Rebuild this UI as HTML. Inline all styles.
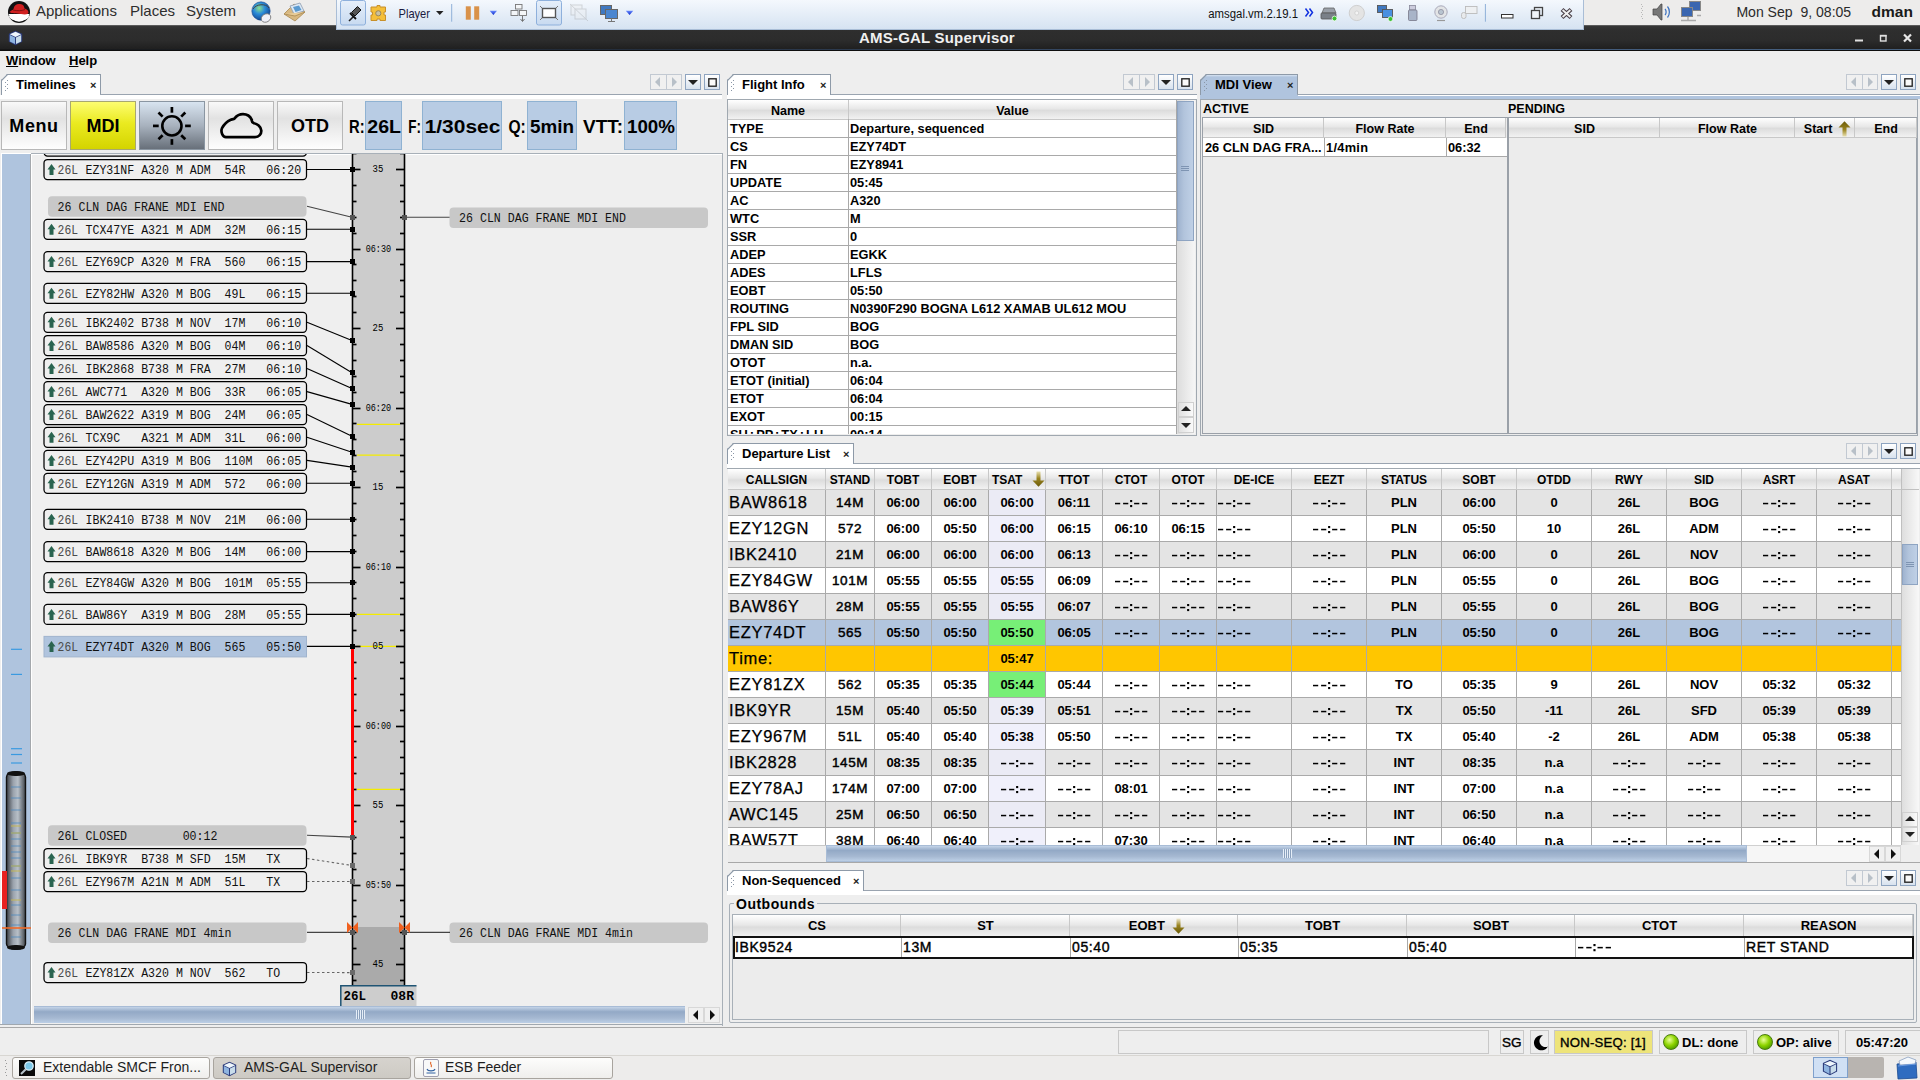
<!DOCTYPE html><html><head><meta charset="utf-8"><title>AMS-GAL Supervisor</title><style>
*{box-sizing:border-box;margin:0;padding:0}
html,body{width:1920px;height:1080px;overflow:hidden;background:#eeeeee;font-family:"Liberation Sans",sans-serif;color:#000}
.a{position:absolute}
.mono{font-family:"Liberation Mono",monospace}
.b{font-weight:bold}
.gnome{left:0;top:0;width:1920px;height:25px;background:#edeceb;}
.vmw{left:336px;top:0;width:1248px;height:30px;background:linear-gradient(#f4f8fd,#d6e3f2);border:1px solid #a9bdd6;border-top:none}
.title{left:0;top:25px;width:1920px;height:26px;background:linear-gradient(#363636,#2e2e2e 20%,#2c2c2c 60%,#1e1e1e);border-top:1px solid #5b5b5b;border-bottom:1px solid #0e0e0e}
.tab{border:1px solid #9aa4b0;border-bottom:none;background:#fff;border-radius:0;}
.tabt{font-weight:bold;font-size:13px}
.navb{width:16px;height:16px;border:1px solid #b8c4d2;background:linear-gradient(#fdfdfe,#dde3ea)}
.tbl td{overflow:hidden;white-space:nowrap}
.hdr{background:linear-gradient(#ffffff,#e8e8e8 45%,#dcdcdc 55%,#f2f2f2);}
</style></head><body>
<div class="a gnome"></div>
<svg class="a" style="left:0;top:0" width="320" height="25" viewBox="0 0 320 25"><defs><radialGradient id="glb" cx="0.4" cy="0.35" r="0.7"><stop offset="0" stop-color="#8fe08a"/><stop offset="0.45" stop-color="#2a8ad8"/><stop offset="1" stop-color="#0f3f8a"/></radialGradient></defs><circle cx="19" cy="12" r="11" fill="#111"/><path d="M8.5 14 A11 11 0 0 0 29.5 14 Z" fill="#fff"/><path d="M9 16 C9 22 29 22 29 16 L27 14 Z" fill="#fff"/><path d="M9.5 12 C11 10 13 10.5 13.5 9 C14 5 17 3.5 20 4 C23.5 4.5 24 6 24.5 8.5 C26.5 9 28.5 10.5 28.5 12.5 C28.5 14.5 25 14.8 21 14 C16 13 11.5 13.8 9.5 12 Z" fill="#d02020"/><path d="M13 10 C17 11 22 11 25 9.5" stroke="#7a1010" stroke-width="0.9" fill="none"/><circle cx="261" cy="11" r="9.2" fill="url(#glb)" stroke="#1a4a90" stroke-width="0.6"/><path d="M253 9 C256 4 266 3 269 8" stroke="#444" stroke-width="1" fill="none"/><ellipse cx="266" cy="18" rx="5" ry="4" fill="#f0f0f8" stroke="#777" stroke-width="0.8" transform="rotate(-30 266 18)"/><path d="M284 14 L294 4 L305 12 L295 21 Z" fill="#d8b880" stroke="#a88850" stroke-width="0.8"/><path d="M290 6 L300 3 L304 11 L294 14 Z" fill="#dde8f4" stroke="#8a9ab0" stroke-width="0.8"/><path d="M293 7 L299 5.5 L301.5 10 L295.5 12 Z" fill="#5a9ad0"/><path d="M284 14 L295 16 L305 12" stroke="#a88850" stroke-width="0.8" fill="#e8cc98"/></svg>
<div class="a" style="left:36px;top:2px;font-size:15px;color:#2e2e2e">Applications</div>
<div class="a" style="left:130px;top:2px;font-size:15px;color:#2e2e2e">Places</div>
<div class="a" style="left:186px;top:2px;font-size:15px;color:#2e2e2e">System</div>
<svg class="a" style="left:1620px;top:0" width="300" height="25" viewBox="1620 0 300 25"><g fill="#b8b8b8"><rect x="1641" y="4" width="1" height="1"/><rect x="1642" y="6" width="1" height="1"/><rect x="1641" y="8" width="1" height="1"/><rect x="1642" y="10" width="1" height="1"/><rect x="1641" y="12" width="1" height="1"/><rect x="1642" y="14" width="1" height="1"/><rect x="1641" y="16" width="1" height="1"/><rect x="1642" y="18" width="1" height="1"/></g><path d="M1653 9 L1657 9 L1661 4 L1662 4 L1662 20 L1661 20 L1657 15 L1653 15 Z" fill="#777" stroke="#444" stroke-width="0.7"/><path d="M1665 9 C1666.5 10.5 1666.5 13.5 1665 15" stroke="#3a70c0" stroke-width="1.2" fill="none"/><path d="M1667.5 6.5 C1670 9.5 1670 14.5 1667.5 17.5" stroke="#3a70c0" stroke-width="1.2" fill="none"/><rect x="1689.5" y="1.5" width="11" height="9" fill="#3a66b0" stroke="#888" stroke-width="1"/><rect x="1681.5" y="7.5" width="11" height="9" fill="#3a66b0" stroke="#888" stroke-width="1"/><path d="M1681 20.5 L1696 20.5 M1688 17 L1688 20" stroke="#aaa" stroke-width="1.5"/><path d="M1697 15.5 L1701 15.5" stroke="#aaa" stroke-width="1.5"/><text x="1736.4" y="17" font-family="Liberation Sans" font-size="15" fill="#2a2a2a" textLength="114.8" lengthAdjust="spacingAndGlyphs" xml:space="preserve">Mon Sep  9, 08:05</text><text x="1871.6" y="17" font-family="Liberation Sans" font-size="15" font-weight="bold" fill="#1a1a1a" textLength="41.4" lengthAdjust="spacingAndGlyphs">dman</text></svg>
<div class="a title"></div>
<div class="a" style="left:0;top:49px;width:1920px;height:1px;background:linear-gradient(90deg,#161616,#253040 35%,#40587a 70%,#46607e)"></div>
<svg class="a" style="left:8px;top:30px" width="15" height="16" viewBox="0 0 15 16"><path d="M7.5 0.8 L14.2 3.8 L14.2 11.8 L7.5 15.2 L0.8 11.8 L0.8 3.8 Z" fill="#2a3a7a"/><path d="M7.5 1.8 L13.2 4.3 L7.5 6.9 L1.8 4.3 Z" fill="#eef6fc"/><path d="M1.8 5 L7 7.5 L7 14 L1.8 11.4 Z" fill="#8eb4e0"/><path d="M8 7.5 L13.2 5 L13.2 11.4 L8 14 Z" fill="#c8dcea"/></svg>
<div class="a b" style="left:0;width:1874px;top:29px;text-align:center;font-size:15px;color:#f0f0f0;letter-spacing:0.2px">AMS-GAL Supervisor</div>
<svg class="a" style="left:1840px;top:25px" width="80" height="25" viewBox="1840 25 80 25"><rect x="1855" y="39.5" width="8" height="2" fill="#e0e0e0"/><rect x="1880.5" y="35.5" width="5.5" height="5.5" fill="none" stroke="#e0e0e0" stroke-width="1.4"/><rect x="1880" y="35" width="6.5" height="1.6" fill="#e0e0e0"/><path d="M1904 34.5 L1911 41.5 M1911 34.5 L1904 41.5" stroke="#e8e8e8" stroke-width="2.2"/></svg>
<div class="a vmw"></div>
<svg class="a" style="left:0;top:0" width="1600" height="30" viewBox="0 0 1600 30"><defs><linearGradient id="bluearr" x1="0" x2="0" y1="0" y2="1"><stop offset="0" stop-color="#6a8cff"/><stop offset="1" stop-color="#0a28c8"/></linearGradient><linearGradient id="btnsel" x1="0" x2="0" y1="0" y2="1"><stop offset="0" stop-color="#e6effa"/><stop offset="1" stop-color="#c8daf0"/></linearGradient></defs><rect x="340.5" y="0.5" width="25" height="24.5" rx="2" fill="url(#btnsel)" stroke="#8eb0dc"/><path d="M349 21 L353.5 16.5" stroke="#222" stroke-width="1.6"/><path d="M351.5 12.5 L357.5 6.5 L361 10 L355 16 Z" fill="#555" stroke="#111" stroke-width="1"/><path d="M350 13 L356 19" stroke="#111" stroke-width="1.8"/><path d="M371 7 L377 7 L377 5.5 L380 5.5 L380 7 L385.5 7 L385.5 12 L384 12 L384 15 L385.5 15 L385.5 20.5 L380 20.5 L380 19 L377 19 L377 20.5 L371 20.5 L371 15 L372.5 15 L372.5 12 L371 12 Z" fill="#f4bf3a" stroke="#c8902a" stroke-width="1"/><circle cx="378.3" cy="13.3" r="2.6" fill="#c9c0a0" stroke="#8a7a50" stroke-width="0.8"/><text x="398.5" y="18" font-family="Liberation Sans" font-size="12.6" fill="#1a1a40" textLength="31.5" lengthAdjust="spacingAndGlyphs">Player</text><path d="M436 11 L443.5 11 L439.75 15 Z" fill="#222"/><line x1="451.7" y1="4" x2="451.7" y2="21.7" stroke="#8fb0d8" stroke-width="1"/><rect x="465.8" y="6.3" width="5" height="13.4" fill="#d9924a"/><rect x="474.2" y="6.3" width="5" height="13.4" fill="#d9924a"/><path d="M489.7 10.8 L497 10.8 L493.35 15 Z" fill="url(#bluearr)"/><rect x="515.5" y="4.5" width="6.5" height="4.5" fill="#f4f6f8" stroke="#777" stroke-width="0.9"/><rect x="511" y="10.5" width="7" height="5" fill="#f4f6f8" stroke="#777" stroke-width="0.9"/><rect x="519.5" y="10.5" width="7" height="5" fill="#f4f6f8" stroke="#777" stroke-width="0.9"/><path d="M522.5 16 L522.5 21 M520.5 19 L522.5 21.5 L524.5 19" stroke="#666" stroke-width="0.9" fill="none"/><rect x="536.5" y="0.5" width="25" height="24.5" rx="2" fill="url(#btnsel)" stroke="#8eb0dc"/><rect x="542.5" y="8.5" width="13" height="9" fill="#fff" stroke="#555" stroke-width="1.4"/><path d="M540 6 L542 8 M558 6 L556 8 M540 20 L542 18 M558 20 L556 18" stroke="#777" stroke-width="1"/><g opacity="0.35"><rect x="571" y="5" width="11" height="10" fill="#eee" stroke="#999"/><rect x="575" y="9" width="11" height="10" fill="#eee" stroke="#999"/><path d="M570 4 L588 21" stroke="#999"/></g><rect x="600.5" y="5.5" width="11" height="9" fill="#3f78c0" stroke="#666" stroke-width="1"/><rect x="605.5" y="9.5" width="12" height="9" fill="#4a86d0" stroke="#666" stroke-width="1"/><path d="M611.5 18.5 L611.5 21 M608 21.5 L615 21.5" stroke="#777" stroke-width="1"/><path d="M625.8 10.8 L633.3 10.8 L629.55 15 Z" fill="url(#bluearr)"/><text x="1208.3" y="17.5" font-family="Liberation Sans" font-size="12" fill="#111" textLength="89.7" lengthAdjust="spacingAndGlyphs">amsgal.vm.2.19.1</text><path d="M1305.5 8.5 L1308.5 12.5 L1305.5 16.5 M1309.5 8.5 L1312.5 12.5 L1309.5 16.5" stroke="#1030e0" stroke-width="1.5" fill="none"/><path d="M1322 13 L1324 8 L1334 8 L1336 13 Z" fill="#9aa0a8" stroke="#666" stroke-width="0.8"/><rect x="1321" y="13" width="15" height="6" rx="1" fill="#7a8088" stroke="#555" stroke-width="0.8"/><circle cx="1334.5" cy="18.5" r="2.4" fill="#3ac030" stroke="#fff" stroke-width="0.7"/><circle cx="1356.8" cy="13" r="7.6" fill="#e4e4e4" stroke="#cfcfcf"/><circle cx="1356.8" cy="13" r="2" fill="#f4f4f4" stroke="#ccc" stroke-width="0.7"/><rect x="1377.5" y="5.5" width="9" height="7" fill="#3f78c0" stroke="#555" stroke-width="0.9"/><rect x="1382.5" y="9.5" width="10" height="8" fill="#4a90e0" stroke="#555" stroke-width="0.9"/><circle cx="1390.5" cy="19" r="2.4" fill="#3ac030" stroke="#fff" stroke-width="0.7"/><rect x="1409.5" y="5.5" width="6" height="4.5" fill="#ccd" stroke="#889" stroke-width="0.8"/><rect x="1408.5" y="10" width="8.5" height="10.5" rx="1" fill="#a8b4c8" stroke="#778" stroke-width="0.8"/><circle cx="1441" cy="12" r="6.2" fill="#e2e4e6" stroke="#aab" stroke-width="1"/><circle cx="1441" cy="12" r="2.6" fill="#b8c4d0" stroke="#889" stroke-width="0.7"/><path d="M1437 20.5 L1445 20.5" stroke="#999" stroke-width="1.2"/><rect x="1465.5" y="6.5" width="11.5" height="7" fill="#eef0f2" stroke="#bbb" stroke-width="0.9"/><rect x="1461.5" y="12.5" width="4.5" height="6" rx="2" fill="#e8eaec" stroke="#bbb" stroke-width="0.9"/><line x1="1485.4" y1="4" x2="1485.4" y2="21.7" stroke="#8fb0d8" stroke-width="1"/><rect x="1501.5" y="14.5" width="11.5" height="3.5" fill="#fff" stroke="#333" stroke-width="1"/><rect x="1534.5" y="7.5" width="8" height="8" fill="none" stroke="#444" stroke-width="1.3"/><rect x="1531.5" y="10.5" width="8" height="8" fill="#f0f4f8" stroke="#444" stroke-width="1.3"/><path d="M1562 9.5 L1571 17.5 M1571 9.5 L1562 17.5" stroke="#4a4048" stroke-width="4.2" stroke-linecap="butt"/><path d="M1562.6 10 L1570.4 17 M1570.4 10 L1562.6 17" stroke="#f0f0f0" stroke-width="1.8" stroke-linecap="butt"/></svg>
<div class="a" style="left:0;top:51px;width:1920px;height:22px;background:#eeeeee"></div>
<div class="a b" style="left:6px;top:53px;font-size:13px"><u>W</u>indow</div>
<div class="a b" style="left:69px;top:53px;font-size:13px"><u>H</u>elp</div>
<div class="a" style="left:1px;top:74px;width:100px;height:21px;background:#ffffff;border:1px solid #8e9aa8;border-bottom:none;clip-path:polygon(6px 0,100% 0,100% 100%,0 100%,0 6px)"></div><svg class="a" style="left:1px;top:74px" width="8" height="8" viewBox="0 0 8 8"><line x1="0.5" y1="6.5" x2="6.5" y2="0.5" stroke="#8e9aa8" stroke-width="1.1"/></svg><div class="a" style="left:7px;top:80px;width:1px;height:1px;background:#8a96a6"></div><div class="a" style="left:5px;top:82px;width:1px;height:1px;background:#8a96a6"></div><div class="a" style="left:7px;top:84px;width:1px;height:1px;background:#8a96a6"></div><div class="a" style="left:5px;top:86px;width:1px;height:1px;background:#8a96a6"></div><div class="a" style="left:7px;top:88px;width:1px;height:1px;background:#8a96a6"></div><div class="a" style="left:5px;top:90px;width:1px;height:1px;background:#8a96a6"></div><div class="a tabt" style="left:16px;top:77px">Timelines</div><div class="a" style="left:90px;top:79px;font-size:11px;font-weight:bold;color:#222">&#215;</div>
<div class="a" style="left:100px;top:94px;width:622px;height:1px;background:#9aa4b0"></div>
<div class="a" style="left:0;top:95px;width:722px;height:4px;background:#ffffff"></div>
<div class="a" style="left:650px;top:74px;width:32px;height:16px;border:1px solid #c2c9d2;background:#f0f0f0"></div><div class="a" style="left:666px;top:75px;width:1px;height:14px;background:#c2c9d2"></div><div class="a" style="left:655px;top:77px;width:0;height:0;border-top:5px solid transparent;border-bottom:5px solid transparent;border-right:5px solid #b8c0c8"></div><div class="a" style="left:672px;top:77px;width:0;height:0;border-top:5px solid transparent;border-bottom:5px solid transparent;border-left:5px solid #b8c0c8"></div><div class="a" style="left:685px;top:74px;width:16px;height:16px;border:1px solid #8ea4c0;background:linear-gradient(#ffffff,#d8e2ee)"></div><div class="a" style="left:688px;top:80px;width:0;height:0;border-left:5px solid transparent;border-right:5px solid transparent;border-top:5px solid #222"></div><div class="a" style="left:704px;top:74px;width:16px;height:16px;border:1px solid #8ea4c0;background:linear-gradient(#ffffff,#d8e2ee)"></div><svg class="a" style="left:707px;top:77px" width="11" height="11" viewBox="0 0 11 11"><rect x="1.8" y="1.8" width="7.4" height="7.4" fill="#fafafa" stroke="#222" stroke-width="1.35"/></svg>
<div class="a" style="left:1px;top:101px;width:66px;height:49px;background:linear-gradient(#f9f9f9,#e2e2e2 35%,#fefefe);border:1px solid #b8b8b8"><div class="a b" style="left:0;width:64px;top:14px;text-align:center;font-size:18px;letter-spacing:0.6px">Menu</div></div>
<div class="a" style="left:70px;top:101px;width:66px;height:49px;background:linear-gradient(#fdfd70,#eaea20 45%,#d4d400);border:1px solid #a8a870"><div class="a b" style="left:0;width:64px;top:14px;text-align:center;font-size:18px">MDI</div></div>
<div class="a" style="left:139px;top:101px;width:66px;height:49px;background:linear-gradient(#d8e4f0,#a8b2be 50%,#68707a);border:1px solid #8a96a2"><svg class="a" style="left:-1px;top:-1px" width="66" height="49" viewBox="0 0 66 49"><circle cx="32.9" cy="24.9" r="9.6" fill="none" stroke="#000" stroke-width="2.6"/><line x1="46.1" y1="24.9" x2="51.8" y2="24.9" stroke="#000" stroke-width="2.7"/><line x1="42.2" y1="34.2" x2="46.3" y2="38.3" stroke="#000" stroke-width="2.7"/><line x1="32.9" y1="38.1" x2="32.9" y2="43.8" stroke="#000" stroke-width="2.7"/><line x1="23.6" y1="34.2" x2="19.5" y2="38.3" stroke="#000" stroke-width="2.7"/><line x1="19.7" y1="24.9" x2="14.0" y2="24.9" stroke="#000" stroke-width="2.7"/><line x1="23.6" y1="15.6" x2="19.5" y2="11.5" stroke="#000" stroke-width="2.7"/><line x1="32.9" y1="11.7" x2="32.9" y2="6.0" stroke="#000" stroke-width="2.7"/><line x1="42.2" y1="15.6" x2="46.3" y2="11.5" stroke="#000" stroke-width="2.7"/></svg></div>
<div class="a" style="left:208px;top:101px;width:66px;height:49px;background:linear-gradient(#f9f9f9,#e2e2e2 35%,#fefefe);border:1px solid #b8b8b8"><svg class="a" style="left:-1px;top:-1px" width="66" height="49" viewBox="0 0 66 49"><path d="M18 36.2 L47 36.2 C51 36.2 53.5 33 53.3 29.6 C53 25.5 49 22.8 46 22.2 C44.2 21.4 43.5 20 43.8 18.8 C42 15 39 13.2 35 13.2 C31 13.2 28.5 15 26.8 17.2 C25.6 18.4 24 18.3 22.8 18.8 C19 20.5 15.5 24.5 14 27.2 C12.5 30.5 14.5 36.2 18 36.2 Z" fill="none" stroke="#000" stroke-width="2.7" stroke-linejoin="round"/></svg></div>
<div class="a" style="left:277px;top:101px;width:66px;height:49px;background:linear-gradient(#f9f9f9,#e2e2e2 35%,#fefefe);border:1px solid #b8b8b8"><div class="a b" style="left:0;width:64px;top:14px;text-align:center;font-size:18px">OTD</div></div>
<div class="a" style="left:365px;top:101px;width:37px;height:49px;background:#b8cce4;border:1px solid #8fb2d2"></div>
<div class="a" style="left:422px;top:101px;width:80px;height:49px;background:#b8cce4;border:1px solid #8fb2d2"></div>
<div class="a" style="left:527px;top:101px;width:50px;height:49px;background:#b8cce4;border:1px solid #8fb2d2"></div>
<div class="a" style="left:624px;top:101px;width:53px;height:49px;background:#b8cce4;border:1px solid #8fb2d2"></div>
<svg class="a" style="left:340px;top:100px" width="345" height="52" viewBox="340 100 345 52"><text x="349" y="132.6" font-family="Liberation Sans" font-weight="bold" font-size="17.6" textLength="15.6" lengthAdjust="spacingAndGlyphs">R:</text><text x="367.3" y="132.6" font-family="Liberation Sans" font-weight="bold" font-size="17.6" textLength="33.7" lengthAdjust="spacingAndGlyphs">26L</text><text x="408.3" y="132.6" font-family="Liberation Sans" font-weight="bold" font-size="17.6" textLength="12.7" lengthAdjust="spacingAndGlyphs">F:</text><text x="424.7" y="132.6" font-family="Liberation Sans" font-weight="bold" font-size="17.6" textLength="75.6" lengthAdjust="spacingAndGlyphs">1/30sec</text><text x="508.5" y="132.6" font-family="Liberation Sans" font-weight="bold" font-size="17.6" textLength="17.3" lengthAdjust="spacingAndGlyphs">Q:</text><text x="530" y="132.6" font-family="Liberation Sans" font-weight="bold" font-size="17.6" textLength="44" lengthAdjust="spacingAndGlyphs">5min</text><text x="583" y="132.6" font-family="Liberation Sans" font-weight="bold" font-size="17.6" textLength="40" lengthAdjust="spacingAndGlyphs">VTT:</text><text x="627" y="132.6" font-family="Liberation Sans" font-weight="bold" font-size="17.6" textLength="48" lengthAdjust="spacingAndGlyphs">100%</text></svg>
<div class="a" style="left:0;top:153px;width:723px;height:873px;background:#efefef;border-right:1px solid #a8b0b8"></div>
<div class="a" style="left:30px;top:153px;width:693px;height:1px;background:#a8b0b8"></div>
<div class="a" style="left:1px;top:153px;width:30px;height:1px;background:#ffffff"></div>
<div class="a" style="left:1px;top:153px;width:1px;height:872px;background:#ffffff"></div>
<div class="a" style="left:2px;top:154px;width:29px;height:871px;background:#afc4de;border-right:1px solid #a4a8ac"></div>
<div class="a" style="left:31px;top:154px;width:1px;height:871px;background:#ffffff"></div>
<div class="a" style="left:32px;top:154px;width:690px;height:1px;background:#ffffff"></div>
<svg class="a" style="left:0;top:0" width="723" height="1026" viewBox="0 0 723 1026">
<defs><clipPath id="tlc"><rect x="31" y="154" width="691" height="852"/></clipPath></defs>
<g clip-path="url(#tlc)">
<rect x="352" y="150" width="53" height="835" fill="#cccccc"/>
<rect x="352" y="927" width="53" height="58" fill="#aaaaaa"/>
<line x1="357" y1="424.4" x2="400" y2="424.4" stroke="#f4ec00" stroke-width="1.2"/>
<line x1="357" y1="455.1" x2="400" y2="455.1" stroke="#f4ec00" stroke-width="1.2"/>
<line x1="357" y1="614.4" x2="400" y2="614.4" stroke="#f4ec00" stroke-width="1.2"/>
<line x1="357" y1="646.4" x2="400" y2="646.4" stroke="#f4ec00" stroke-width="1.2"/>
<line x1="357" y1="789.4" x2="400" y2="789.4" stroke="#f4ec00" stroke-width="1.2"/>
<line x1="352" y1="980.5" x2="356.5" y2="980.5" stroke="#000" stroke-width="1.7"/>
<line x1="400.0" y1="980.5" x2="404.5" y2="980.5" stroke="#000" stroke-width="1.7"/>
<line x1="352" y1="964.5" x2="360.5" y2="964.5" stroke="#000" stroke-width="1.7"/>
<line x1="396.0" y1="964.5" x2="404.5" y2="964.5" stroke="#000" stroke-width="1.7"/>
<text x="372.6" y="966.9" font-family="Liberation Mono" font-size="11.6" textLength="10.8" lengthAdjust="spacingAndGlyphs" fill="#000">45</text>
<line x1="352" y1="948.5" x2="356.5" y2="948.5" stroke="#000" stroke-width="1.7"/>
<line x1="400.0" y1="948.5" x2="404.5" y2="948.5" stroke="#000" stroke-width="1.7"/>
<line x1="352" y1="932.5" x2="356.5" y2="932.5" stroke="#000" stroke-width="1.7"/>
<line x1="400.0" y1="932.5" x2="404.5" y2="932.5" stroke="#000" stroke-width="1.7"/>
<line x1="352" y1="916.5" x2="356.5" y2="916.5" stroke="#000" stroke-width="1.7"/>
<line x1="400.0" y1="916.5" x2="404.5" y2="916.5" stroke="#000" stroke-width="1.7"/>
<line x1="352" y1="900.5" x2="356.5" y2="900.5" stroke="#000" stroke-width="1.7"/>
<line x1="400.0" y1="900.5" x2="404.5" y2="900.5" stroke="#000" stroke-width="1.7"/>
<line x1="352" y1="885.5" x2="360.5" y2="885.5" stroke="#000" stroke-width="1.7"/>
<line x1="396.0" y1="885.5" x2="404.5" y2="885.5" stroke="#000" stroke-width="1.7"/>
<text x="365.7" y="887.9" font-family="Liberation Mono" font-size="11.6" textLength="25.4" lengthAdjust="spacingAndGlyphs" fill="#000">05:50</text>
<line x1="352" y1="869.5" x2="356.5" y2="869.5" stroke="#000" stroke-width="1.7"/>
<line x1="400.0" y1="869.5" x2="404.5" y2="869.5" stroke="#000" stroke-width="1.7"/>
<line x1="352" y1="853.5" x2="356.5" y2="853.5" stroke="#000" stroke-width="1.7"/>
<line x1="400.0" y1="853.5" x2="404.5" y2="853.5" stroke="#000" stroke-width="1.7"/>
<line x1="352" y1="837.5" x2="356.5" y2="837.5" stroke="#000" stroke-width="1.7"/>
<line x1="400.0" y1="837.5" x2="404.5" y2="837.5" stroke="#000" stroke-width="1.7"/>
<line x1="352" y1="821.5" x2="356.5" y2="821.5" stroke="#000" stroke-width="1.7"/>
<line x1="400.0" y1="821.5" x2="404.5" y2="821.5" stroke="#000" stroke-width="1.7"/>
<line x1="352" y1="805.5" x2="360.5" y2="805.5" stroke="#000" stroke-width="1.7"/>
<line x1="396.0" y1="805.5" x2="404.5" y2="805.5" stroke="#000" stroke-width="1.7"/>
<text x="372.6" y="807.9" font-family="Liberation Mono" font-size="11.6" textLength="10.8" lengthAdjust="spacingAndGlyphs" fill="#000">55</text>
<line x1="352" y1="789.5" x2="356.5" y2="789.5" stroke="#000" stroke-width="1.7"/>
<line x1="400.0" y1="789.5" x2="404.5" y2="789.5" stroke="#000" stroke-width="1.7"/>
<line x1="352" y1="773.5" x2="356.5" y2="773.5" stroke="#000" stroke-width="1.7"/>
<line x1="400.0" y1="773.5" x2="404.5" y2="773.5" stroke="#000" stroke-width="1.7"/>
<line x1="352" y1="757.5" x2="356.5" y2="757.5" stroke="#000" stroke-width="1.7"/>
<line x1="400.0" y1="757.5" x2="404.5" y2="757.5" stroke="#000" stroke-width="1.7"/>
<line x1="352" y1="741.5" x2="356.5" y2="741.5" stroke="#000" stroke-width="1.7"/>
<line x1="400.0" y1="741.5" x2="404.5" y2="741.5" stroke="#000" stroke-width="1.7"/>
<line x1="352" y1="726.5" x2="360.5" y2="726.5" stroke="#000" stroke-width="1.7"/>
<line x1="396.0" y1="726.5" x2="404.5" y2="726.5" stroke="#000" stroke-width="1.7"/>
<text x="365.7" y="728.9" font-family="Liberation Mono" font-size="11.6" textLength="25.4" lengthAdjust="spacingAndGlyphs" fill="#000">06:00</text>
<line x1="352" y1="710.5" x2="356.5" y2="710.5" stroke="#000" stroke-width="1.7"/>
<line x1="400.0" y1="710.5" x2="404.5" y2="710.5" stroke="#000" stroke-width="1.7"/>
<line x1="352" y1="694.5" x2="356.5" y2="694.5" stroke="#000" stroke-width="1.7"/>
<line x1="400.0" y1="694.5" x2="404.5" y2="694.5" stroke="#000" stroke-width="1.7"/>
<line x1="352" y1="678.5" x2="356.5" y2="678.5" stroke="#000" stroke-width="1.7"/>
<line x1="400.0" y1="678.5" x2="404.5" y2="678.5" stroke="#000" stroke-width="1.7"/>
<line x1="352" y1="662.5" x2="356.5" y2="662.5" stroke="#000" stroke-width="1.7"/>
<line x1="400.0" y1="662.5" x2="404.5" y2="662.5" stroke="#000" stroke-width="1.7"/>
<line x1="352" y1="646.5" x2="360.5" y2="646.5" stroke="#000" stroke-width="1.7"/>
<line x1="396.0" y1="646.5" x2="404.5" y2="646.5" stroke="#000" stroke-width="1.7"/>
<text x="372.6" y="648.9" font-family="Liberation Mono" font-size="11.6" textLength="10.8" lengthAdjust="spacingAndGlyphs" fill="#000">05</text>
<line x1="352" y1="630.5" x2="356.5" y2="630.5" stroke="#000" stroke-width="1.7"/>
<line x1="400.0" y1="630.5" x2="404.5" y2="630.5" stroke="#000" stroke-width="1.7"/>
<line x1="352" y1="614.5" x2="356.5" y2="614.5" stroke="#000" stroke-width="1.7"/>
<line x1="400.0" y1="614.5" x2="404.5" y2="614.5" stroke="#000" stroke-width="1.7"/>
<line x1="352" y1="598.5" x2="356.5" y2="598.5" stroke="#000" stroke-width="1.7"/>
<line x1="400.0" y1="598.5" x2="404.5" y2="598.5" stroke="#000" stroke-width="1.7"/>
<line x1="352" y1="582.5" x2="356.5" y2="582.5" stroke="#000" stroke-width="1.7"/>
<line x1="400.0" y1="582.5" x2="404.5" y2="582.5" stroke="#000" stroke-width="1.7"/>
<line x1="352" y1="567.5" x2="360.5" y2="567.5" stroke="#000" stroke-width="1.7"/>
<line x1="396.0" y1="567.5" x2="404.5" y2="567.5" stroke="#000" stroke-width="1.7"/>
<text x="365.7" y="569.9" font-family="Liberation Mono" font-size="11.6" textLength="25.4" lengthAdjust="spacingAndGlyphs" fill="#000">06:10</text>
<line x1="352" y1="551.5" x2="356.5" y2="551.5" stroke="#000" stroke-width="1.7"/>
<line x1="400.0" y1="551.5" x2="404.5" y2="551.5" stroke="#000" stroke-width="1.7"/>
<line x1="352" y1="535.5" x2="356.5" y2="535.5" stroke="#000" stroke-width="1.7"/>
<line x1="400.0" y1="535.5" x2="404.5" y2="535.5" stroke="#000" stroke-width="1.7"/>
<line x1="352" y1="519.5" x2="356.5" y2="519.5" stroke="#000" stroke-width="1.7"/>
<line x1="400.0" y1="519.5" x2="404.5" y2="519.5" stroke="#000" stroke-width="1.7"/>
<line x1="352" y1="503.5" x2="356.5" y2="503.5" stroke="#000" stroke-width="1.7"/>
<line x1="400.0" y1="503.5" x2="404.5" y2="503.5" stroke="#000" stroke-width="1.7"/>
<line x1="352" y1="487.5" x2="360.5" y2="487.5" stroke="#000" stroke-width="1.7"/>
<line x1="396.0" y1="487.5" x2="404.5" y2="487.5" stroke="#000" stroke-width="1.7"/>
<text x="372.6" y="489.9" font-family="Liberation Mono" font-size="11.6" textLength="10.8" lengthAdjust="spacingAndGlyphs" fill="#000">15</text>
<line x1="352" y1="471.5" x2="356.5" y2="471.5" stroke="#000" stroke-width="1.7"/>
<line x1="400.0" y1="471.5" x2="404.5" y2="471.5" stroke="#000" stroke-width="1.7"/>
<line x1="352" y1="455.5" x2="356.5" y2="455.5" stroke="#000" stroke-width="1.7"/>
<line x1="400.0" y1="455.5" x2="404.5" y2="455.5" stroke="#000" stroke-width="1.7"/>
<line x1="352" y1="439.5" x2="356.5" y2="439.5" stroke="#000" stroke-width="1.7"/>
<line x1="400.0" y1="439.5" x2="404.5" y2="439.5" stroke="#000" stroke-width="1.7"/>
<line x1="352" y1="423.5" x2="356.5" y2="423.5" stroke="#000" stroke-width="1.7"/>
<line x1="400.0" y1="423.5" x2="404.5" y2="423.5" stroke="#000" stroke-width="1.7"/>
<line x1="352" y1="408.5" x2="360.5" y2="408.5" stroke="#000" stroke-width="1.7"/>
<line x1="396.0" y1="408.5" x2="404.5" y2="408.5" stroke="#000" stroke-width="1.7"/>
<text x="365.7" y="410.9" font-family="Liberation Mono" font-size="11.6" textLength="25.4" lengthAdjust="spacingAndGlyphs" fill="#000">06:20</text>
<line x1="352" y1="392.5" x2="356.5" y2="392.5" stroke="#000" stroke-width="1.7"/>
<line x1="400.0" y1="392.5" x2="404.5" y2="392.5" stroke="#000" stroke-width="1.7"/>
<line x1="352" y1="376.5" x2="356.5" y2="376.5" stroke="#000" stroke-width="1.7"/>
<line x1="400.0" y1="376.5" x2="404.5" y2="376.5" stroke="#000" stroke-width="1.7"/>
<line x1="352" y1="360.5" x2="356.5" y2="360.5" stroke="#000" stroke-width="1.7"/>
<line x1="400.0" y1="360.5" x2="404.5" y2="360.5" stroke="#000" stroke-width="1.7"/>
<line x1="352" y1="344.5" x2="356.5" y2="344.5" stroke="#000" stroke-width="1.7"/>
<line x1="400.0" y1="344.5" x2="404.5" y2="344.5" stroke="#000" stroke-width="1.7"/>
<line x1="352" y1="328.5" x2="360.5" y2="328.5" stroke="#000" stroke-width="1.7"/>
<line x1="396.0" y1="328.5" x2="404.5" y2="328.5" stroke="#000" stroke-width="1.7"/>
<text x="372.6" y="330.9" font-family="Liberation Mono" font-size="11.6" textLength="10.8" lengthAdjust="spacingAndGlyphs" fill="#000">25</text>
<line x1="352" y1="312.5" x2="356.5" y2="312.5" stroke="#000" stroke-width="1.7"/>
<line x1="400.0" y1="312.5" x2="404.5" y2="312.5" stroke="#000" stroke-width="1.7"/>
<line x1="352" y1="296.5" x2="356.5" y2="296.5" stroke="#000" stroke-width="1.7"/>
<line x1="400.0" y1="296.5" x2="404.5" y2="296.5" stroke="#000" stroke-width="1.7"/>
<line x1="352" y1="280.5" x2="356.5" y2="280.5" stroke="#000" stroke-width="1.7"/>
<line x1="400.0" y1="280.5" x2="404.5" y2="280.5" stroke="#000" stroke-width="1.7"/>
<line x1="352" y1="264.5" x2="356.5" y2="264.5" stroke="#000" stroke-width="1.7"/>
<line x1="400.0" y1="264.5" x2="404.5" y2="264.5" stroke="#000" stroke-width="1.7"/>
<line x1="352" y1="249.5" x2="360.5" y2="249.5" stroke="#000" stroke-width="1.7"/>
<line x1="396.0" y1="249.5" x2="404.5" y2="249.5" stroke="#000" stroke-width="1.7"/>
<text x="365.7" y="251.9" font-family="Liberation Mono" font-size="11.6" textLength="25.4" lengthAdjust="spacingAndGlyphs" fill="#000">06:30</text>
<line x1="352" y1="233.5" x2="356.5" y2="233.5" stroke="#000" stroke-width="1.7"/>
<line x1="400.0" y1="233.5" x2="404.5" y2="233.5" stroke="#000" stroke-width="1.7"/>
<line x1="352" y1="217.5" x2="356.5" y2="217.5" stroke="#000" stroke-width="1.7"/>
<line x1="400.0" y1="217.5" x2="404.5" y2="217.5" stroke="#000" stroke-width="1.7"/>
<line x1="352" y1="201.5" x2="356.5" y2="201.5" stroke="#000" stroke-width="1.7"/>
<line x1="400.0" y1="201.5" x2="404.5" y2="201.5" stroke="#000" stroke-width="1.7"/>
<line x1="352" y1="185.5" x2="356.5" y2="185.5" stroke="#000" stroke-width="1.7"/>
<line x1="400.0" y1="185.5" x2="404.5" y2="185.5" stroke="#000" stroke-width="1.7"/>
<line x1="352" y1="169.5" x2="360.5" y2="169.5" stroke="#000" stroke-width="1.7"/>
<line x1="396.0" y1="169.5" x2="404.5" y2="169.5" stroke="#000" stroke-width="1.7"/>
<text x="372.6" y="171.9" font-family="Liberation Mono" font-size="11.6" textLength="10.8" lengthAdjust="spacingAndGlyphs" fill="#000">35</text>
<line x1="352" y1="153.5" x2="356.5" y2="153.5" stroke="#000" stroke-width="1.7"/>
<line x1="400.0" y1="153.5" x2="404.5" y2="153.5" stroke="#000" stroke-width="1.7"/>
<line x1="352.5" y1="150" x2="352.5" y2="985" stroke="#000" stroke-width="1.6"/>
<line x1="404.5" y1="150" x2="404.5" y2="985" stroke="#000" stroke-width="1.6"/>
<line x1="352.5" y1="646" x2="352.5" y2="837" stroke="#ff0000" stroke-width="3"/>
<rect x="44" y="136" width="262.5" height="20" rx="3.5" ry="3.5" fill="#efefef" stroke="#000" stroke-width="1.25"/>
<path d="M51.5 140.5 L55.5 146.0 L53.5 146.0 L53.5 151.5 L49.5 151.5 L49.5 146.0 L47.5 146.0 Z" fill="#2a6450"/>
<text x="57.6" y="150.4" font-family="Liberation Mono" font-size="12.8" textLength="20.4" lengthAdjust="spacingAndGlyphs" fill="#4a4a4a">26L</text><text x="85.5" y="150.4" font-family="Liberation Mono" font-size="12.8" textLength="215.6" lengthAdjust="spacingAndGlyphs" fill="#111" xml:space="preserve">EZY00XX A320 M BOG  00M   06:20</text>
<line x1="307" y1="146" x2="352" y2="146" stroke="#000" stroke-width="1.1"/>
<rect x="350" y="144" width="5" height="5" fill="#000"/>
<rect x="44" y="159.5" width="262.5" height="20" rx="3.5" ry="3.5" fill="#efefef" stroke="#000" stroke-width="1.25"/>
<path d="M51.5 164.0 L55.5 169.5 L53.5 169.5 L53.5 175.0 L49.5 175.0 L49.5 169.5 L47.5 169.5 Z" fill="#2a6450"/>
<text x="57.6" y="173.9" font-family="Liberation Mono" font-size="12.8" textLength="20.4" lengthAdjust="spacingAndGlyphs" fill="#4a4a4a">26L</text><text x="85.5" y="173.9" font-family="Liberation Mono" font-size="12.8" textLength="215.6" lengthAdjust="spacingAndGlyphs" fill="#111" xml:space="preserve">EZY31NF A320 M ADM  54R   06:20</text>
<line x1="307" y1="169.5" x2="352" y2="169.5" stroke="#000" stroke-width="1.1"/>
<rect x="350" y="167" width="5" height="5" fill="#000"/>
<rect x="44" y="219.3" width="262.5" height="20" rx="3.5" ry="3.5" fill="#efefef" stroke="#000" stroke-width="1.25"/>
<path d="M51.5 223.8 L55.5 229.3 L53.5 229.3 L53.5 234.8 L49.5 234.8 L49.5 229.3 L47.5 229.3 Z" fill="#2a6450"/>
<text x="57.6" y="233.70000000000002" font-family="Liberation Mono" font-size="12.8" textLength="20.4" lengthAdjust="spacingAndGlyphs" fill="#4a4a4a">26L</text><text x="85.5" y="233.70000000000002" font-family="Liberation Mono" font-size="12.8" textLength="215.6" lengthAdjust="spacingAndGlyphs" fill="#111" xml:space="preserve">TCX47YE A321 M ADM  32M   06:15</text>
<line x1="307" y1="229.3" x2="352" y2="229.3" stroke="#000" stroke-width="1.1"/>
<rect x="350" y="227" width="5" height="5" fill="#000"/>
<rect x="44" y="251.60000000000002" width="262.5" height="20" rx="3.5" ry="3.5" fill="#efefef" stroke="#000" stroke-width="1.25"/>
<path d="M51.5 256.1 L55.5 261.6 L53.5 261.6 L53.5 267.1 L49.5 267.1 L49.5 261.6 L47.5 261.6 Z" fill="#2a6450"/>
<text x="57.6" y="266.0" font-family="Liberation Mono" font-size="12.8" textLength="20.4" lengthAdjust="spacingAndGlyphs" fill="#4a4a4a">26L</text><text x="85.5" y="266.0" font-family="Liberation Mono" font-size="12.8" textLength="215.6" lengthAdjust="spacingAndGlyphs" fill="#111" xml:space="preserve">EZY69CP A320 M FRA  560   06:15</text>
<line x1="307" y1="261.6" x2="352" y2="261.6" stroke="#000" stroke-width="1.1"/>
<rect x="350" y="259" width="5" height="5" fill="#000"/>
<rect x="44" y="283.3" width="262.5" height="20" rx="3.5" ry="3.5" fill="#efefef" stroke="#000" stroke-width="1.25"/>
<path d="M51.5 287.8 L55.5 293.3 L53.5 293.3 L53.5 298.8 L49.5 298.8 L49.5 293.3 L47.5 293.3 Z" fill="#2a6450"/>
<text x="57.6" y="297.7" font-family="Liberation Mono" font-size="12.8" textLength="20.4" lengthAdjust="spacingAndGlyphs" fill="#4a4a4a">26L</text><text x="85.5" y="297.7" font-family="Liberation Mono" font-size="12.8" textLength="215.6" lengthAdjust="spacingAndGlyphs" fill="#111" xml:space="preserve">EZY82HW A320 M BOG  49L   06:15</text>
<line x1="307" y1="293.3" x2="352" y2="293.3" stroke="#000" stroke-width="1.1"/>
<rect x="350" y="291" width="5" height="5" fill="#000"/>
<rect x="44" y="312.3" width="262.5" height="20" rx="3.5" ry="3.5" fill="#efefef" stroke="#000" stroke-width="1.25"/>
<path d="M51.5 316.8 L55.5 322.3 L53.5 322.3 L53.5 327.8 L49.5 327.8 L49.5 322.3 L47.5 322.3 Z" fill="#2a6450"/>
<text x="57.6" y="326.7" font-family="Liberation Mono" font-size="12.8" textLength="20.4" lengthAdjust="spacingAndGlyphs" fill="#4a4a4a">26L</text><text x="85.5" y="326.7" font-family="Liberation Mono" font-size="12.8" textLength="215.6" lengthAdjust="spacingAndGlyphs" fill="#111" xml:space="preserve">IBK2402 B738 M NOV  17M   06:10</text>
<line x1="307" y1="322.3" x2="352" y2="340.4" stroke="#000" stroke-width="1.1"/>
<rect x="350" y="338" width="5" height="5" fill="#000"/>
<rect x="44" y="335.5" width="262.5" height="20" rx="3.5" ry="3.5" fill="#efefef" stroke="#000" stroke-width="1.25"/>
<path d="M51.5 340.0 L55.5 345.5 L53.5 345.5 L53.5 351.0 L49.5 351.0 L49.5 345.5 L47.5 345.5 Z" fill="#2a6450"/>
<text x="57.6" y="349.9" font-family="Liberation Mono" font-size="12.8" textLength="20.4" lengthAdjust="spacingAndGlyphs" fill="#4a4a4a">26L</text><text x="85.5" y="349.9" font-family="Liberation Mono" font-size="12.8" textLength="215.6" lengthAdjust="spacingAndGlyphs" fill="#111" xml:space="preserve">BAW8586 A320 M BOG  04M   06:10</text>
<line x1="307" y1="345.5" x2="352" y2="372.7" stroke="#000" stroke-width="1.1"/>
<rect x="350" y="370" width="5" height="5" fill="#000"/>
<rect x="44" y="358.5" width="262.5" height="20" rx="3.5" ry="3.5" fill="#efefef" stroke="#000" stroke-width="1.25"/>
<path d="M51.5 363.0 L55.5 368.5 L53.5 368.5 L53.5 374.0 L49.5 374.0 L49.5 368.5 L47.5 368.5 Z" fill="#2a6450"/>
<text x="57.6" y="372.9" font-family="Liberation Mono" font-size="12.8" textLength="20.4" lengthAdjust="spacingAndGlyphs" fill="#4a4a4a">26L</text><text x="85.5" y="372.9" font-family="Liberation Mono" font-size="12.8" textLength="215.6" lengthAdjust="spacingAndGlyphs" fill="#111" xml:space="preserve">IBK2868 B738 M FRA  27M   06:10</text>
<line x1="307" y1="368.5" x2="352" y2="388.4" stroke="#000" stroke-width="1.1"/>
<rect x="350" y="386" width="5" height="5" fill="#000"/>
<rect x="44" y="381.6" width="262.5" height="20" rx="3.5" ry="3.5" fill="#efefef" stroke="#000" stroke-width="1.25"/>
<path d="M51.5 386.1 L55.5 391.6 L53.5 391.6 L53.5 397.1 L49.5 397.1 L49.5 391.6 L47.5 391.6 Z" fill="#2a6450"/>
<text x="57.6" y="396.0" font-family="Liberation Mono" font-size="12.8" textLength="20.4" lengthAdjust="spacingAndGlyphs" fill="#4a4a4a">26L</text><text x="85.5" y="396.0" font-family="Liberation Mono" font-size="12.8" textLength="215.6" lengthAdjust="spacingAndGlyphs" fill="#111" xml:space="preserve">AWC771  A320 M BOG  33R   06:05</text>
<line x1="307" y1="391.6" x2="352" y2="404.4" stroke="#000" stroke-width="1.1"/>
<rect x="350" y="402" width="5" height="5" fill="#000"/>
<rect x="44" y="404.6" width="262.5" height="20" rx="3.5" ry="3.5" fill="#efefef" stroke="#000" stroke-width="1.25"/>
<path d="M51.5 409.1 L55.5 414.6 L53.5 414.6 L53.5 420.1 L49.5 420.1 L49.5 414.6 L47.5 414.6 Z" fill="#2a6450"/>
<text x="57.6" y="419.0" font-family="Liberation Mono" font-size="12.8" textLength="20.4" lengthAdjust="spacingAndGlyphs" fill="#4a4a4a">26L</text><text x="85.5" y="419.0" font-family="Liberation Mono" font-size="12.8" textLength="215.6" lengthAdjust="spacingAndGlyphs" fill="#111" xml:space="preserve">BAW2622 A319 M BOG  24M   06:05</text>
<line x1="307" y1="414.6" x2="352" y2="436.2" stroke="#000" stroke-width="1.1"/>
<rect x="350" y="434" width="5" height="5" fill="#000"/>
<rect x="44" y="427.3" width="262.5" height="20" rx="3.5" ry="3.5" fill="#efefef" stroke="#000" stroke-width="1.25"/>
<path d="M51.5 431.8 L55.5 437.3 L53.5 437.3 L53.5 442.8 L49.5 442.8 L49.5 437.3 L47.5 437.3 Z" fill="#2a6450"/>
<text x="57.6" y="441.7" font-family="Liberation Mono" font-size="12.8" textLength="20.4" lengthAdjust="spacingAndGlyphs" fill="#4a4a4a">26L</text><text x="85.5" y="441.7" font-family="Liberation Mono" font-size="12.8" textLength="215.6" lengthAdjust="spacingAndGlyphs" fill="#111" xml:space="preserve">TCX9C   A321 M ADM  31L   06:00</text>
<line x1="307" y1="437.3" x2="352" y2="452.2" stroke="#000" stroke-width="1.1"/>
<rect x="350" y="450" width="5" height="5" fill="#000"/>
<rect x="44" y="450.4" width="262.5" height="20" rx="3.5" ry="3.5" fill="#efefef" stroke="#000" stroke-width="1.25"/>
<path d="M51.5 454.9 L55.5 460.4 L53.5 460.4 L53.5 465.9 L49.5 465.9 L49.5 460.4 L47.5 460.4 Z" fill="#2a6450"/>
<text x="57.6" y="464.79999999999995" font-family="Liberation Mono" font-size="12.8" textLength="20.4" lengthAdjust="spacingAndGlyphs" fill="#4a4a4a">26L</text><text x="85.5" y="464.79999999999995" font-family="Liberation Mono" font-size="12.8" textLength="215.6" lengthAdjust="spacingAndGlyphs" fill="#111" xml:space="preserve">EZY42PU A319 M BOG  110M  06:05</text>
<line x1="307" y1="460.4" x2="352" y2="467.1" stroke="#000" stroke-width="1.1"/>
<rect x="350" y="465" width="5" height="5" fill="#000"/>
<rect x="44" y="473.3" width="262.5" height="20" rx="3.5" ry="3.5" fill="#efefef" stroke="#000" stroke-width="1.25"/>
<path d="M51.5 477.8 L55.5 483.3 L53.5 483.3 L53.5 488.8 L49.5 488.8 L49.5 483.3 L47.5 483.3 Z" fill="#2a6450"/>
<text x="57.6" y="487.7" font-family="Liberation Mono" font-size="12.8" textLength="20.4" lengthAdjust="spacingAndGlyphs" fill="#4a4a4a">26L</text><text x="85.5" y="487.7" font-family="Liberation Mono" font-size="12.8" textLength="215.6" lengthAdjust="spacingAndGlyphs" fill="#111" xml:space="preserve">EZY12GN A319 M ADM  572   06:00</text>
<line x1="307" y1="483.3" x2="352" y2="483.3" stroke="#000" stroke-width="1.1"/>
<rect x="350" y="481" width="5" height="5" fill="#000"/>
<rect x="44" y="509.29999999999995" width="262.5" height="20" rx="3.5" ry="3.5" fill="#efefef" stroke="#000" stroke-width="1.25"/>
<path d="M51.5 513.8 L55.5 519.3 L53.5 519.3 L53.5 524.8 L49.5 524.8 L49.5 519.3 L47.5 519.3 Z" fill="#2a6450"/>
<text x="57.6" y="523.6999999999999" font-family="Liberation Mono" font-size="12.8" textLength="20.4" lengthAdjust="spacingAndGlyphs" fill="#4a4a4a">26L</text><text x="85.5" y="523.6999999999999" font-family="Liberation Mono" font-size="12.8" textLength="215.6" lengthAdjust="spacingAndGlyphs" fill="#111" xml:space="preserve">IBK2410 B738 M NOV  21M   06:00</text>
<line x1="307" y1="519.3" x2="352" y2="519.3" stroke="#000" stroke-width="1.1"/>
<rect x="350" y="517" width="5" height="5" fill="#000"/>
<rect x="44" y="541.6" width="262.5" height="20" rx="3.5" ry="3.5" fill="#efefef" stroke="#000" stroke-width="1.25"/>
<path d="M51.5 546.1 L55.5 551.6 L53.5 551.6 L53.5 557.1 L49.5 557.1 L49.5 551.6 L47.5 551.6 Z" fill="#2a6450"/>
<text x="57.6" y="556.0" font-family="Liberation Mono" font-size="12.8" textLength="20.4" lengthAdjust="spacingAndGlyphs" fill="#4a4a4a">26L</text><text x="85.5" y="556.0" font-family="Liberation Mono" font-size="12.8" textLength="215.6" lengthAdjust="spacingAndGlyphs" fill="#111" xml:space="preserve">BAW8618 A320 M BOG  14M   06:00</text>
<line x1="307" y1="551.6" x2="352" y2="551.6" stroke="#000" stroke-width="1.1"/>
<rect x="350" y="549" width="5" height="5" fill="#000"/>
<rect x="44" y="572.7" width="262.5" height="20" rx="3.5" ry="3.5" fill="#efefef" stroke="#000" stroke-width="1.25"/>
<path d="M51.5 577.2 L55.5 582.7 L53.5 582.7 L53.5 588.2 L49.5 588.2 L49.5 582.7 L47.5 582.7 Z" fill="#2a6450"/>
<text x="57.6" y="587.1" font-family="Liberation Mono" font-size="12.8" textLength="20.4" lengthAdjust="spacingAndGlyphs" fill="#4a4a4a">26L</text><text x="85.5" y="587.1" font-family="Liberation Mono" font-size="12.8" textLength="215.6" lengthAdjust="spacingAndGlyphs" fill="#111" xml:space="preserve">EZY84GW A320 M BOG  101M  05:55</text>
<line x1="307" y1="582.7" x2="352" y2="582.7" stroke="#000" stroke-width="1.1"/>
<rect x="350" y="580" width="5" height="5" fill="#000"/>
<rect x="44" y="604.4" width="262.5" height="20" rx="3.5" ry="3.5" fill="#efefef" stroke="#000" stroke-width="1.25"/>
<path d="M51.5 608.9 L55.5 614.4 L53.5 614.4 L53.5 619.9 L49.5 619.9 L49.5 614.4 L47.5 614.4 Z" fill="#2a6450"/>
<text x="57.6" y="618.8" font-family="Liberation Mono" font-size="12.8" textLength="20.4" lengthAdjust="spacingAndGlyphs" fill="#4a4a4a">26L</text><text x="85.5" y="618.8" font-family="Liberation Mono" font-size="12.8" textLength="215.6" lengthAdjust="spacingAndGlyphs" fill="#111" xml:space="preserve">BAW86Y  A319 M BOG  28M   05:55</text>
<line x1="307" y1="614.4" x2="352" y2="614.4" stroke="#000" stroke-width="1.1"/>
<rect x="350" y="612" width="5" height="5" fill="#000"/>
<rect x="44" y="636.4" width="262.5" height="20.5" fill="#b0c4de" stroke="#a0b4ce" stroke-width="1"/>
<path d="M51.5 640.9 L55.5 646.4 L53.5 646.4 L53.5 651.9 L49.5 651.9 L49.5 646.4 L47.5 646.4 Z" fill="#2a6450"/>
<text x="57.6" y="650.8" font-family="Liberation Mono" font-size="12.8" textLength="20.4" lengthAdjust="spacingAndGlyphs" fill="#4a4a4a">26L</text><text x="85.5" y="650.8" font-family="Liberation Mono" font-size="12.8" textLength="215.6" lengthAdjust="spacingAndGlyphs" fill="#111" xml:space="preserve">EZY74DT A320 M BOG  565   05:50</text>
<line x1="307" y1="646.4" x2="352" y2="646.4" stroke="#000" stroke-width="1.1"/>
<rect x="350" y="644" width="5" height="5" fill="#000"/>
<rect x="44" y="848.5" width="262.5" height="20" rx="3.5" ry="3.5" fill="#efefef" stroke="#000" stroke-width="1.25"/>
<path d="M51.5 853.0 L55.5 858.5 L53.5 858.5 L53.5 864.0 L49.5 864.0 L49.5 858.5 L47.5 858.5 Z" fill="#2a6450"/>
<text x="57.6" y="862.9" font-family="Liberation Mono" font-size="12.8" textLength="20.4" lengthAdjust="spacingAndGlyphs" fill="#4a4a4a">26L</text><text x="85.5" y="862.9" font-family="Liberation Mono" font-size="12.8" textLength="194.7" lengthAdjust="spacingAndGlyphs" fill="#111" xml:space="preserve">IBK9YR  B738 M SFD  15M   TX</text>
<line x1="307" y1="858.5" x2="352" y2="865.5" stroke="#666" stroke-width="1.1" stroke-dasharray="2.5,2.5"/>
<rect x="350" y="863" width="5" height="5" fill="#6a6a6a"/>
<rect x="44" y="871.5" width="262.5" height="20" rx="3.5" ry="3.5" fill="#efefef" stroke="#000" stroke-width="1.25"/>
<path d="M51.5 876.0 L55.5 881.5 L53.5 881.5 L53.5 887.0 L49.5 887.0 L49.5 881.5 L47.5 881.5 Z" fill="#2a6450"/>
<text x="57.6" y="885.9" font-family="Liberation Mono" font-size="12.8" textLength="20.4" lengthAdjust="spacingAndGlyphs" fill="#4a4a4a">26L</text><text x="85.5" y="885.9" font-family="Liberation Mono" font-size="12.8" textLength="194.7" lengthAdjust="spacingAndGlyphs" fill="#111" xml:space="preserve">EZY967M A21N M ADM  51L   TX</text>
<line x1="307" y1="881.5" x2="352" y2="881.5" stroke="#666" stroke-width="1.1" stroke-dasharray="2.5,2.5"/>
<rect x="350" y="879" width="5" height="5" fill="#6a6a6a"/>
<rect x="44" y="962.5" width="262.5" height="20" rx="3.5" ry="3.5" fill="#efefef" stroke="#000" stroke-width="1.25"/>
<path d="M51.5 967.0 L55.5 972.5 L53.5 972.5 L53.5 978.0 L49.5 978.0 L49.5 972.5 L47.5 972.5 Z" fill="#2a6450"/>
<text x="57.6" y="976.9" font-family="Liberation Mono" font-size="12.8" textLength="20.4" lengthAdjust="spacingAndGlyphs" fill="#4a4a4a">26L</text><text x="85.5" y="976.9" font-family="Liberation Mono" font-size="12.8" textLength="194.7" lengthAdjust="spacingAndGlyphs" fill="#111" xml:space="preserve">EZY81ZX A320 M NOV  562   TO</text>
<line x1="307" y1="972.5" x2="352" y2="972.6" stroke="#666" stroke-width="1.1" stroke-dasharray="2.5,2.5"/>
<rect x="350" y="970" width="5" height="5" fill="#6a6a6a"/>
<rect x="48" y="196.3" width="258.5" height="20.5" rx="4" ry="4" fill="#c8c8c8"/>
<text x="57.6" y="210.70000000000002" font-family="Liberation Mono" font-size="12.8" textLength="166.8" lengthAdjust="spacingAndGlyphs" fill="#111" xml:space="preserve">26 CLN DAG FRANE MDI END</text>
<line x1="307" y1="206.3" x2="352" y2="217.2" stroke="#444" stroke-width="1.1"/>
<rect x="350" y="215" width="5" height="5" fill="#555"/>
<line x1="404" y1="217.2" x2="450" y2="217.2" stroke="#444" stroke-width="1.1"/>
<rect x="402" y="215" width="5" height="5" fill="#555"/>
<rect x="449.5" y="207.4" width="258.5" height="20.5" rx="4" ry="4" fill="#c8c8c8"/>
<text x="459.1" y="221.8" font-family="Liberation Mono" font-size="12.8" textLength="166.8" lengthAdjust="spacingAndGlyphs" fill="#111" xml:space="preserve">26 CLN DAG FRANE MDI END</text>
<rect x="48" y="825.3" width="258.5" height="20.5" rx="4" ry="4" fill="#c8c8c8"/>
<text x="57.6" y="839.6999999999999" font-family="Liberation Mono" font-size="12.8" textLength="159.8" lengthAdjust="spacingAndGlyphs" fill="#111" xml:space="preserve">26L CLOSED        00:12</text>
<line x1="307" y1="835.3" x2="352" y2="837.1" stroke="#444" stroke-width="1.1"/>
<rect x="350" y="835" width="5" height="5" fill="#555"/>
<rect x="48" y="922.4" width="258.5" height="20.5" rx="4" ry="4" fill="#c8c8c8"/>
<text x="57.6" y="936.8" font-family="Liberation Mono" font-size="12.8" textLength="173.8" lengthAdjust="spacingAndGlyphs" fill="#111" xml:space="preserve">26 CLN DAG FRANE MDI 4min</text>
<rect x="449.5" y="922.4" width="258.5" height="20.5" rx="4" ry="4" fill="#c8c8c8"/>
<text x="459.1" y="936.8" font-family="Liberation Mono" font-size="12.8" textLength="173.8" lengthAdjust="spacingAndGlyphs" fill="#111" xml:space="preserve">26 CLN DAG FRANE MDI 4min</text>
<line x1="307" y1="932.4" x2="352" y2="932.4" stroke="#444" stroke-width="1.1"/>
<line x1="405" y1="932.4" x2="450" y2="932.4" stroke="#444" stroke-width="1.1"/>
<path d="M347.0 922 L352.5 927.5 L347.0 933 Z M358.0 922 L352.5 927.5 L358.0 933 Z" fill="#f0601e"/>
<rect x="350.0" y="930" width="5" height="5" fill="#555"/>
<path d="M399.0 922 L404.5 927.5 L399.0 933 Z M410.0 922 L404.5 927.5 L410.0 933 Z" fill="#f0601e"/>
<rect x="402.0" y="930" width="5" height="5" fill="#555"/>
<rect x="340.5" y="985.5" width="76" height="21" fill="#cdcdcd"/>
<path d="M340.8 1006 L340.8 985.8 L416.5 985.8" fill="none" stroke="#1f5474" stroke-width="1.5"/>
<text x="343.5" y="1000" font-family="Liberation Mono" font-size="13" font-weight="bold" textLength="22.5" lengthAdjust="spacingAndGlyphs">26L</text>
<text x="390.5" y="1000" font-family="Liberation Mono" font-size="13" font-weight="bold" textLength="23.5" lengthAdjust="spacingAndGlyphs">08R</text>
</g>
<line x1="11" y1="649.3" x2="22" y2="649.3" stroke="#3a9ae0" stroke-width="1.2"/>
<line x1="11" y1="674.4" x2="22" y2="674.4" stroke="#3a9ae0" stroke-width="1.2"/>
<line x1="11" y1="748.7" x2="22" y2="748.7" stroke="#3a9ae0" stroke-width="1.2"/>
<line x1="11" y1="754.5" x2="22" y2="754.5" stroke="#3a9ae0" stroke-width="1.2"/>
<line x1="11" y1="763" x2="22" y2="763" stroke="#3a9ae0" stroke-width="1.2"/>
<defs><linearGradient id="cyl" x1="0" x2="1" y1="0" y2="0"><stop offset="0" stop-color="#3a3e44"/><stop offset="0.35" stop-color="#9aa2ac"/><stop offset="0.6" stop-color="#b8c0c8"/><stop offset="1" stop-color="#40454c"/></linearGradient></defs>
<rect x="6.5" y="772" width="19" height="177" rx="9" ry="5" fill="url(#cyl)" stroke="#111" stroke-width="1.4"/>
<rect x="7" y="771" width="18" height="5" rx="8" ry="2.5" fill="#111"/>
<rect x="7" y="945" width="18" height="5" rx="8" ry="2.5" fill="#111"/>
<line x1="11" y1="787" x2="21" y2="787" stroke="#4a88c0" stroke-width="0.9" opacity="0.85"/>
<line x1="11" y1="798" x2="21" y2="798" stroke="#4a88c0" stroke-width="0.9" opacity="0.85"/>
<line x1="11" y1="810" x2="21" y2="810" stroke="#4a88c0" stroke-width="0.9" opacity="0.85"/>
<line x1="11" y1="823" x2="21" y2="823" stroke="#4a88c0" stroke-width="0.9" opacity="0.85"/>
<line x1="11" y1="833" x2="21" y2="833" stroke="#4a88c0" stroke-width="0.9" opacity="0.85"/>
<line x1="11" y1="839" x2="21" y2="839" stroke="#4a88c0" stroke-width="0.9" opacity="0.85"/>
<line x1="11" y1="846" x2="21" y2="846" stroke="#4a88c0" stroke-width="0.9" opacity="0.85"/>
<line x1="11" y1="852" x2="21" y2="852" stroke="#4a88c0" stroke-width="0.9" opacity="0.85"/>
<line x1="11" y1="858" x2="21" y2="858" stroke="#4a88c0" stroke-width="0.9" opacity="0.85"/>
<line x1="11" y1="866" x2="21" y2="866" stroke="#4a88c0" stroke-width="0.9" opacity="0.85"/>
<line x1="11" y1="878" x2="21" y2="878" stroke="#4a88c0" stroke-width="0.9" opacity="0.85"/>
<line x1="11" y1="890" x2="21" y2="890" stroke="#4a88c0" stroke-width="0.9" opacity="0.85"/>
<line x1="11" y1="905" x2="21" y2="905" stroke="#4a88c0" stroke-width="0.9" opacity="0.85"/>
<line x1="11" y1="915" x2="21" y2="915" stroke="#4a88c0" stroke-width="0.9" opacity="0.85"/>
<line x1="11" y1="925" x2="21" y2="925" stroke="#4a88c0" stroke-width="0.9" opacity="0.85"/>
<line x1="11" y1="937" x2="21" y2="937" stroke="#4a88c0" stroke-width="0.9" opacity="0.85"/>
<line x1="11" y1="826" x2="21" y2="826" stroke="#c8b848" stroke-width="0.9"/>
<line x1="11" y1="833" x2="21" y2="833" stroke="#c8b848" stroke-width="0.9"/>
<line x1="11" y1="866" x2="21" y2="866" stroke="#c8b848" stroke-width="0.9"/>
<line x1="11" y1="871" x2="21" y2="871" stroke="#c8b848" stroke-width="0.9"/>
<line x1="11" y1="900" x2="21" y2="900" stroke="#c8b848" stroke-width="0.9"/>
<rect x="2" y="871" width="5" height="38" fill="#e82020"/>
<line x1="2" y1="928" x2="31" y2="928" stroke="#f06a28" stroke-width="1.6"/>
</svg>
<div class="a" style="left:34px;top:1006px;width:651px;height:17px;background:linear-gradient(#c4d4e8,#93a9c6 30%,#a6b9d2 70%,#bccfe6);border-top:1px solid #a8bcd6"></div>
<div class="a" style="left:356px;top:1010px;width:9px;height:9px;background:repeating-linear-gradient(90deg,#e6eef8 0 1px,#8aa0bc 1px 2px)"></div>
<div class="a" style="left:688px;top:1007px;width:16px;height:16px;background:#f0f0f0;border:1px solid #d8d8d8"></div>
<div class="a" style="left:704px;top:1007px;width:16px;height:16px;background:#f0f0f0;border:1px solid #d8d8d8"></div>
<div class="a" style="left:693px;top:1010px;width:0;height:0;border-top:5px solid transparent;border-bottom:5px solid transparent;border-right:5px solid #111"></div>
<div class="a" style="left:710px;top:1010px;width:0;height:0;border-top:5px solid transparent;border-bottom:5px solid transparent;border-left:5px solid #111"></div>
<div class="a" style="left:0;top:1024px;width:723px;height:1px;background:#a0a8b0"></div>
<div class="a" style="left:722px;top:153px;width:1px;height:873px;background:#a8b0b8"></div>
<div class="a" style="left:727px;top:74px;width:104px;height:21px;background:#ffffff;border:1px solid #8e9aa8;border-bottom:none;clip-path:polygon(6px 0,100% 0,100% 100%,0 100%,0 6px)"></div><svg class="a" style="left:727px;top:74px" width="8" height="8" viewBox="0 0 8 8"><line x1="0.5" y1="6.5" x2="6.5" y2="0.5" stroke="#8e9aa8" stroke-width="1.1"/></svg><div class="a" style="left:733px;top:80px;width:1px;height:1px;background:#8a96a6"></div><div class="a" style="left:731px;top:82px;width:1px;height:1px;background:#8a96a6"></div><div class="a" style="left:733px;top:84px;width:1px;height:1px;background:#8a96a6"></div><div class="a" style="left:731px;top:86px;width:1px;height:1px;background:#8a96a6"></div><div class="a" style="left:733px;top:88px;width:1px;height:1px;background:#8a96a6"></div><div class="a" style="left:731px;top:90px;width:1px;height:1px;background:#8a96a6"></div><div class="a tabt" style="left:742px;top:77px">Flight Info</div><div class="a" style="left:820px;top:79px;font-size:11px;font-weight:bold;color:#222">&#215;</div>
<div class="a" style="left:831px;top:94px;width:366px;height:1px;background:#9aa4b0"></div>
<div class="a" style="left:727px;top:95px;width:470px;height:4px;background:#ffffff"></div>
<div class="a" style="left:1123px;top:74px;width:32px;height:16px;border:1px solid #c2c9d2;background:#f0f0f0"></div><div class="a" style="left:1139px;top:75px;width:1px;height:14px;background:#c2c9d2"></div><div class="a" style="left:1128px;top:77px;width:0;height:0;border-top:5px solid transparent;border-bottom:5px solid transparent;border-right:5px solid #b8c0c8"></div><div class="a" style="left:1145px;top:77px;width:0;height:0;border-top:5px solid transparent;border-bottom:5px solid transparent;border-left:5px solid #b8c0c8"></div><div class="a" style="left:1158px;top:74px;width:16px;height:16px;border:1px solid #8ea4c0;background:linear-gradient(#ffffff,#d8e2ee)"></div><div class="a" style="left:1161px;top:80px;width:0;height:0;border-left:5px solid transparent;border-right:5px solid transparent;border-top:5px solid #222"></div><div class="a" style="left:1177px;top:74px;width:16px;height:16px;border:1px solid #8ea4c0;background:linear-gradient(#ffffff,#d8e2ee)"></div><svg class="a" style="left:1180px;top:77px" width="11" height="11" viewBox="0 0 11 11"><rect x="1.8" y="1.8" width="7.4" height="7.4" fill="#fafafa" stroke="#222" stroke-width="1.35"/></svg>
<div class="a" style="left:727px;top:99px;width:470px;height:337px;border:1px solid #a0a8b0;background:#eeeeee"></div>
<div class="a" style="left:728px;top:100px;width:448px;height:334px;overflow:hidden;background:#fff"><div class="a hdr" style="left:0;top:0;width:448px;height:20px;border-bottom:1px solid #c8c8c8"></div><div class="a" style="left:120px;top:0;width:1px;height:19px;background:#c8c8c8"></div><div class="a b" style="left:0;width:120px;top:4px;text-align:center;font-size:12.5px">Name</div><div class="a b" style="left:121px;width:327px;top:4px;text-align:center;font-size:12.5px">Value</div><div class="a" style="left:0;top:37px;width:448px;height:1px;background:#a9a9a9"></div><div class="a b" style="left:2px;top:21px;font-size:12.8px;white-space:nowrap">TYPE</div><div class="a b" style="left:122px;top:21px;font-size:12.8px;white-space:nowrap">Departure, sequenced</div><div class="a" style="left:0;top:55px;width:448px;height:1px;background:#a9a9a9"></div><div class="a b" style="left:2px;top:39px;font-size:12.8px;white-space:nowrap">CS</div><div class="a b" style="left:122px;top:39px;font-size:12.8px;white-space:nowrap">EZY74DT</div><div class="a" style="left:0;top:73px;width:448px;height:1px;background:#a9a9a9"></div><div class="a b" style="left:2px;top:57px;font-size:12.8px;white-space:nowrap">FN</div><div class="a b" style="left:122px;top:57px;font-size:12.8px;white-space:nowrap">EZY8941</div><div class="a" style="left:0;top:91px;width:448px;height:1px;background:#a9a9a9"></div><div class="a b" style="left:2px;top:75px;font-size:12.8px;white-space:nowrap">UPDATE</div><div class="a b" style="left:122px;top:75px;font-size:12.8px;white-space:nowrap">05:45</div><div class="a" style="left:0;top:109px;width:448px;height:1px;background:#a9a9a9"></div><div class="a b" style="left:2px;top:93px;font-size:12.8px;white-space:nowrap">AC</div><div class="a b" style="left:122px;top:93px;font-size:12.8px;white-space:nowrap">A320</div><div class="a" style="left:0;top:127px;width:448px;height:1px;background:#a9a9a9"></div><div class="a b" style="left:2px;top:111px;font-size:12.8px;white-space:nowrap">WTC</div><div class="a b" style="left:122px;top:111px;font-size:12.8px;white-space:nowrap">M</div><div class="a" style="left:0;top:145px;width:448px;height:1px;background:#a9a9a9"></div><div class="a b" style="left:2px;top:129px;font-size:12.8px;white-space:nowrap">SSR</div><div class="a b" style="left:122px;top:129px;font-size:12.8px;white-space:nowrap">0</div><div class="a" style="left:0;top:163px;width:448px;height:1px;background:#a9a9a9"></div><div class="a b" style="left:2px;top:147px;font-size:12.8px;white-space:nowrap">ADEP</div><div class="a b" style="left:122px;top:147px;font-size:12.8px;white-space:nowrap">EGKK</div><div class="a" style="left:0;top:181px;width:448px;height:1px;background:#a9a9a9"></div><div class="a b" style="left:2px;top:165px;font-size:12.8px;white-space:nowrap">ADES</div><div class="a b" style="left:122px;top:165px;font-size:12.8px;white-space:nowrap">LFLS</div><div class="a" style="left:0;top:199px;width:448px;height:1px;background:#a9a9a9"></div><div class="a b" style="left:2px;top:183px;font-size:12.8px;white-space:nowrap">EOBT</div><div class="a b" style="left:122px;top:183px;font-size:12.8px;white-space:nowrap">05:50</div><div class="a" style="left:0;top:217px;width:448px;height:1px;background:#a9a9a9"></div><div class="a b" style="left:2px;top:201px;font-size:12.8px;white-space:nowrap">ROUTING</div><div class="a b" style="left:122px;top:201px;font-size:12.8px;white-space:nowrap">N0390F290 BOGNA L612 XAMAB UL612 MOU</div><div class="a" style="left:0;top:235px;width:448px;height:1px;background:#a9a9a9"></div><div class="a b" style="left:2px;top:219px;font-size:12.8px;white-space:nowrap">FPL SID</div><div class="a b" style="left:122px;top:219px;font-size:12.8px;white-space:nowrap">BOG</div><div class="a" style="left:0;top:253px;width:448px;height:1px;background:#a9a9a9"></div><div class="a b" style="left:2px;top:237px;font-size:12.8px;white-space:nowrap">DMAN SID</div><div class="a b" style="left:122px;top:237px;font-size:12.8px;white-space:nowrap">BOG</div><div class="a" style="left:0;top:271px;width:448px;height:1px;background:#a9a9a9"></div><div class="a b" style="left:2px;top:255px;font-size:12.8px;white-space:nowrap">OTOT</div><div class="a b" style="left:122px;top:255px;font-size:12.8px;white-space:nowrap">n.a.</div><div class="a" style="left:0;top:289px;width:448px;height:1px;background:#a9a9a9"></div><div class="a b" style="left:2px;top:273px;font-size:12.8px;white-space:nowrap">ETOT (initial)</div><div class="a b" style="left:122px;top:273px;font-size:12.8px;white-space:nowrap">06:04</div><div class="a" style="left:0;top:307px;width:448px;height:1px;background:#a9a9a9"></div><div class="a b" style="left:2px;top:291px;font-size:12.8px;white-space:nowrap">ETOT</div><div class="a b" style="left:122px;top:291px;font-size:12.8px;white-space:nowrap">06:04</div><div class="a" style="left:0;top:325px;width:448px;height:1px;background:#a9a9a9"></div><div class="a b" style="left:2px;top:309px;font-size:12.8px;white-space:nowrap">EXOT</div><div class="a b" style="left:122px;top:309px;font-size:12.8px;white-space:nowrap">00:15</div><div class="a" style="left:0;top:343px;width:448px;height:1px;background:#a9a9a9"></div><div class="a b" style="left:2px;top:327px;font-size:12.8px;word-spacing:-1.5px;white-space:nowrap">SU : PP : TX : LU</div><div class="a b" style="left:122px;top:327px;font-size:12.8px;white-space:nowrap">00:14</div><div class="a" style="left:120px;top:19px;width:1px;height:320px;background:#a9a9a9"></div></div>
<div class="a" style="left:1176px;top:100px;width:19px;height:334px;background:linear-gradient(90deg,#dcdcdc,#f6f6f6);border-left:1px solid #a8a8a8"></div>
<div class="a" style="left:1177px;top:101px;width:17px;height:140px;background:linear-gradient(90deg,#9fb3cf,#b2c4dc 40%,#bfd0e6);border:1px solid #8ea4c2"></div>
<div class="a" style="left:1181px;top:166px;width:8px;height:6px;background:repeating-linear-gradient(#7e94b2 0 1px,transparent 1px 2px)"></div>
<div class="a" style="left:1178px;top:402px;width:16px;height:15px;background:linear-gradient(90deg,#e0e0e0,#fafafa);border:1px solid #d0d0d0"></div>
<div class="a" style="left:1178px;top:417px;width:16px;height:16px;background:linear-gradient(90deg,#e0e0e0,#fafafa);border:1px solid #d0d0d0"></div>
<div class="a" style="left:1181px;top:406px;width:0;height:0;border-left:5px solid transparent;border-right:5px solid transparent;border-bottom:5px solid #222"></div>
<div class="a" style="left:1181px;top:423px;width:0;height:0;border-left:5px solid transparent;border-right:5px solid transparent;border-top:5px solid #222"></div>
<div class="a" style="left:1200px;top:74px;width:98px;height:21px;background:linear-gradient(#d8e4f2 0,#b0c4de 2px);border:1px solid #8e9aa8;border-bottom:none;clip-path:polygon(6px 0,100% 0,100% 100%,0 100%,0 6px)"></div><svg class="a" style="left:1200px;top:74px" width="8" height="8" viewBox="0 0 8 8"><line x1="0.5" y1="6.5" x2="6.5" y2="0.5" stroke="#8e9aa8" stroke-width="1.1"/></svg><div class="a" style="left:1206px;top:80px;width:1px;height:1px;background:#8a96a6"></div><div class="a" style="left:1204px;top:82px;width:1px;height:1px;background:#8a96a6"></div><div class="a" style="left:1206px;top:84px;width:1px;height:1px;background:#8a96a6"></div><div class="a" style="left:1204px;top:86px;width:1px;height:1px;background:#8a96a6"></div><div class="a" style="left:1206px;top:88px;width:1px;height:1px;background:#8a96a6"></div><div class="a" style="left:1204px;top:90px;width:1px;height:1px;background:#8a96a6"></div><div class="a tabt" style="left:1215px;top:77px">MDI View</div><div class="a" style="left:1287px;top:79px;font-size:11px;font-weight:bold;color:#222">&#215;</div>
<div class="a" style="left:1297px;top:94px;width:623px;height:1px;background:#9aa4b0"></div>
<div class="a" style="left:1200px;top:95px;width:720px;height:4px;background:#b0c4de"></div>
<div class="a" style="left:1298px;top:95px;width:622px;height:1px;background:#ffffff"></div>
<div class="a" style="left:1846px;top:74px;width:32px;height:16px;border:1px solid #c2c9d2;background:#f0f0f0"></div><div class="a" style="left:1862px;top:75px;width:1px;height:14px;background:#c2c9d2"></div><div class="a" style="left:1851px;top:77px;width:0;height:0;border-top:5px solid transparent;border-bottom:5px solid transparent;border-right:5px solid #b8c0c8"></div><div class="a" style="left:1868px;top:77px;width:0;height:0;border-top:5px solid transparent;border-bottom:5px solid transparent;border-left:5px solid #b8c0c8"></div><div class="a" style="left:1881px;top:74px;width:16px;height:16px;border:1px solid #8ea4c0;background:linear-gradient(#ffffff,#d8e2ee)"></div><div class="a" style="left:1884px;top:80px;width:0;height:0;border-left:5px solid transparent;border-right:5px solid transparent;border-top:5px solid #222"></div><div class="a" style="left:1900px;top:74px;width:16px;height:16px;border:1px solid #8ea4c0;background:linear-gradient(#ffffff,#d8e2ee)"></div><svg class="a" style="left:1903px;top:77px" width="11" height="11" viewBox="0 0 11 11"><rect x="1.8" y="1.8" width="7.4" height="7.4" fill="#fafafa" stroke="#222" stroke-width="1.35"/></svg>
<div class="a" style="left:1200px;top:99px;width:718px;height:337px;border:1px solid #a0a8b0;background:#ececec"></div>
<div class="a b" style="left:1203px;top:102px;font-size:12.5px">ACTIVE</div>
<div class="a b" style="left:1508px;top:102px;font-size:12.5px">PENDING</div>
<div class="a" style="left:1202px;top:117px;width:306px;height:317px;border:1px solid #9aa0a8;background:#ececec"></div>
<div class="a" style="left:1507px;top:117px;width:410px;height:317px;border:1px solid #9aa0a8;border-left:2px solid #9aa0a8;background:#ececec"></div>
<div class="a hdr" style="left:1203px;top:118px;width:121px;height:20px;border-right:1px solid #c8c8c8;border-bottom:1px solid #c8c8c8"></div><div class="a b" style="left:1203px;width:121px;top:122px;text-align:center;font-size:12.5px;white-space:nowrap">SID</div><div class="a hdr" style="left:1324px;top:118px;width:122px;height:20px;border-right:1px solid #c8c8c8;border-bottom:1px solid #c8c8c8"></div><div class="a b" style="left:1324px;width:122px;top:122px;text-align:center;font-size:12.5px;white-space:nowrap">Flow Rate</div><div class="a hdr" style="left:1446px;top:118px;width:60px;height:20px;border-right:1px solid #c8c8c8;border-bottom:1px solid #c8c8c8"></div><div class="a b" style="left:1446px;width:60px;top:122px;text-align:center;font-size:12.5px;white-space:nowrap">End</div>
<div class="a hdr" style="left:1509px;top:118px;width:151px;height:20px;border-right:1px solid #c8c8c8;border-bottom:1px solid #c8c8c8"></div><div class="a b" style="left:1509px;width:151px;top:122px;text-align:center;font-size:12.5px;white-space:nowrap">SID</div><div class="a hdr" style="left:1660px;top:118px;width:135px;height:20px;border-right:1px solid #c8c8c8;border-bottom:1px solid #c8c8c8"></div><div class="a b" style="left:1660px;width:135px;top:122px;text-align:center;font-size:12.5px;white-space:nowrap">Flow Rate</div><div class="a hdr" style="left:1795px;top:118px;width:60px;height:20px;border-right:1px solid #c8c8c8;border-bottom:1px solid #c8c8c8"></div><div class="a b" style="left:1795px;width:60px;top:122px;text-align:center;font-size:12.5px;white-space:nowrap">Start &nbsp;&nbsp;&nbsp;</div><div class="a hdr" style="left:1855px;top:118px;width:62px;height:20px;border-right:1px solid #c8c8c8;border-bottom:1px solid #c8c8c8"></div><div class="a b" style="left:1855px;width:62px;top:122px;text-align:center;font-size:12.5px;white-space:nowrap">End</div>
<svg class="a" style="left:1838px;top:120px" width="13" height="17" viewBox="0 0 13 17"><defs><linearGradient id="sarr2" x1="0" x2="0" y1="1" y2="0"><stop offset="0" stop-color="#e8e0b0"/><stop offset="0.45" stop-color="#9a8420"/><stop offset="1" stop-color="#6a5a08"/></linearGradient></defs><path d="M4.5 16.5 L8.5 16.5 L8.5 7.5 L12.5 7.5 L6.5 1.2 L0.5 7.5 L4.5 7.5 Z" fill="url(#sarr2)"/></svg>
<div class="a" style="left:1203px;top:138px;width:304px;height:19px;background:#fff;border-bottom:1px solid #a9a9a9"></div>
<div class="a" style="left:1324px;top:138px;width:1px;height:19px;background:#a9a9a9"></div><div class="a" style="left:1446px;top:138px;width:1px;height:19px;background:#a9a9a9"></div>
<div class="a b" style="left:1205px;top:140px;font-size:12.8px;white-space:nowrap">26 CLN DAG FRA...</div>
<div class="a b" style="left:1326px;top:140px;font-size:12.8px;letter-spacing:0.3px">1/4min</div>
<div class="a b" style="left:1448px;top:140px;font-size:12.8px">06:32</div>
<div class="a" style="left:727px;top:443px;width:127px;height:21px;background:#ffffff;border:1px solid #8e9aa8;border-bottom:none;clip-path:polygon(6px 0,100% 0,100% 100%,0 100%,0 6px)"></div><svg class="a" style="left:727px;top:443px" width="8" height="8" viewBox="0 0 8 8"><line x1="0.5" y1="6.5" x2="6.5" y2="0.5" stroke="#8e9aa8" stroke-width="1.1"/></svg><div class="a" style="left:733px;top:449px;width:1px;height:1px;background:#8a96a6"></div><div class="a" style="left:731px;top:451px;width:1px;height:1px;background:#8a96a6"></div><div class="a" style="left:733px;top:453px;width:1px;height:1px;background:#8a96a6"></div><div class="a" style="left:731px;top:455px;width:1px;height:1px;background:#8a96a6"></div><div class="a" style="left:733px;top:457px;width:1px;height:1px;background:#8a96a6"></div><div class="a" style="left:731px;top:459px;width:1px;height:1px;background:#8a96a6"></div><div class="a tabt" style="left:742px;top:446px">Departure List</div><div class="a" style="left:843px;top:448px;font-size:11px;font-weight:bold;color:#222">&#215;</div>
<div class="a" style="left:854px;top:463px;width:1066px;height:1px;background:#9aa4b0"></div>
<div class="a" style="left:727px;top:464px;width:1193px;height:4px;background:#ffffff"></div>
<div class="a" style="left:1846px;top:443px;width:32px;height:16px;border:1px solid #c2c9d2;background:#f0f0f0"></div><div class="a" style="left:1862px;top:444px;width:1px;height:14px;background:#c2c9d2"></div><div class="a" style="left:1851px;top:446px;width:0;height:0;border-top:5px solid transparent;border-bottom:5px solid transparent;border-right:5px solid #b8c0c8"></div><div class="a" style="left:1868px;top:446px;width:0;height:0;border-top:5px solid transparent;border-bottom:5px solid transparent;border-left:5px solid #b8c0c8"></div><div class="a" style="left:1881px;top:443px;width:16px;height:16px;border:1px solid #8ea4c0;background:linear-gradient(#ffffff,#d8e2ee)"></div><div class="a" style="left:1884px;top:449px;width:0;height:0;border-left:5px solid transparent;border-right:5px solid transparent;border-top:5px solid #222"></div><div class="a" style="left:1900px;top:443px;width:16px;height:16px;border:1px solid #8ea4c0;background:linear-gradient(#ffffff,#d8e2ee)"></div><svg class="a" style="left:1903px;top:446px" width="11" height="11" viewBox="0 0 11 11"><rect x="1.8" y="1.8" width="7.4" height="7.4" fill="#fafafa" stroke="#222" stroke-width="1.35"/></svg>
<div class="a" style="left:727px;top:468px;width:1193px;height:395px;border-top:1px solid #a0a8b0;background:#eeeeee"></div>
<div class="a" style="left:728px;top:469px;width:1173px;height:376px;overflow:hidden;background:#fff"><div class="a hdr" style="left:0px;top:0;width:98px;height:21px;border-right:1px solid #c8c8c8;border-bottom:1px solid #c8c8c8"></div><div class="a b" style="left:0px;width:97px;top:4px;text-align:center;font-size:12px;white-space:nowrap">CALLSIGN</div><div class="a hdr" style="left:98px;top:0;width:49px;height:21px;border-right:1px solid #c8c8c8;border-bottom:1px solid #c8c8c8"></div><div class="a b" style="left:98px;width:48px;top:4px;text-align:center;font-size:12px;white-space:nowrap">STAND</div><div class="a hdr" style="left:147px;top:0;width:57px;height:21px;border-right:1px solid #c8c8c8;border-bottom:1px solid #c8c8c8"></div><div class="a b" style="left:147px;width:56px;top:4px;text-align:center;font-size:12px;white-space:nowrap">TOBT</div><div class="a hdr" style="left:204px;top:0;width:57px;height:21px;border-right:1px solid #c8c8c8;border-bottom:1px solid #c8c8c8"></div><div class="a b" style="left:204px;width:56px;top:4px;text-align:center;font-size:12px;white-space:nowrap">EOBT</div><div class="a hdr" style="left:261px;top:0;width:57px;height:21px;border-right:1px solid #c8c8c8;border-bottom:1px solid #c8c8c8"></div><div class="a b" style="left:264px;top:4px;font-size:12px;white-space:nowrap">TSAT</div><div class="a hdr" style="left:318px;top:0;width:57px;height:21px;border-right:1px solid #c8c8c8;border-bottom:1px solid #c8c8c8"></div><div class="a b" style="left:318px;width:56px;top:4px;text-align:center;font-size:12px;white-space:nowrap">TTOT</div><div class="a hdr" style="left:375px;top:0;width:57px;height:21px;border-right:1px solid #c8c8c8;border-bottom:1px solid #c8c8c8"></div><div class="a b" style="left:375px;width:56px;top:4px;text-align:center;font-size:12px;white-space:nowrap">CTOT</div><div class="a hdr" style="left:432px;top:0;width:57px;height:21px;border-right:1px solid #c8c8c8;border-bottom:1px solid #c8c8c8"></div><div class="a b" style="left:432px;width:56px;top:4px;text-align:center;font-size:12px;white-space:nowrap">OTOT</div><div class="a hdr" style="left:489px;top:0;width:75px;height:21px;border-right:1px solid #c8c8c8;border-bottom:1px solid #c8c8c8"></div><div class="a b" style="left:489px;width:74px;top:4px;text-align:center;font-size:12px;white-space:nowrap">DE-ICE</div><div class="a hdr" style="left:564px;top:0;width:75px;height:21px;border-right:1px solid #c8c8c8;border-bottom:1px solid #c8c8c8"></div><div class="a b" style="left:564px;width:74px;top:4px;text-align:center;font-size:12px;white-space:nowrap">EEZT</div><div class="a hdr" style="left:639px;top:0;width:75px;height:21px;border-right:1px solid #c8c8c8;border-bottom:1px solid #c8c8c8"></div><div class="a b" style="left:639px;width:74px;top:4px;text-align:center;font-size:12px;white-space:nowrap">STATUS</div><div class="a hdr" style="left:714px;top:0;width:75px;height:21px;border-right:1px solid #c8c8c8;border-bottom:1px solid #c8c8c8"></div><div class="a b" style="left:714px;width:74px;top:4px;text-align:center;font-size:12px;white-space:nowrap">SOBT</div><div class="a hdr" style="left:789px;top:0;width:75px;height:21px;border-right:1px solid #c8c8c8;border-bottom:1px solid #c8c8c8"></div><div class="a b" style="left:789px;width:74px;top:4px;text-align:center;font-size:12px;white-space:nowrap">OTDD</div><div class="a hdr" style="left:864px;top:0;width:75px;height:21px;border-right:1px solid #c8c8c8;border-bottom:1px solid #c8c8c8"></div><div class="a b" style="left:864px;width:74px;top:4px;text-align:center;font-size:12px;white-space:nowrap">RWY</div><div class="a hdr" style="left:939px;top:0;width:75px;height:21px;border-right:1px solid #c8c8c8;border-bottom:1px solid #c8c8c8"></div><div class="a b" style="left:939px;width:74px;top:4px;text-align:center;font-size:12px;white-space:nowrap">SID</div><div class="a hdr" style="left:1014px;top:0;width:75px;height:21px;border-right:1px solid #c8c8c8;border-bottom:1px solid #c8c8c8"></div><div class="a b" style="left:1014px;width:74px;top:4px;text-align:center;font-size:12px;white-space:nowrap">ASRT</div><div class="a hdr" style="left:1089px;top:0;width:75px;height:21px;border-right:1px solid #c8c8c8;border-bottom:1px solid #c8c8c8"></div><div class="a b" style="left:1089px;width:74px;top:4px;text-align:center;font-size:12px;white-space:nowrap">ASAT</div><div class="a hdr" style="left:1164px;top:0;width:10px;height:21px;border-right:1px solid #c8c8c8;border-bottom:1px solid #c8c8c8"></div><svg class="a" style="left:304px;top:2px" width="13" height="17" viewBox="0 0 13 17"><defs><linearGradient id="sarr" x1="0" x2="0" y1="0" y2="1"><stop offset="0" stop-color="#e8e0b0"/><stop offset="0.45" stop-color="#9a8420"/><stop offset="1" stop-color="#6a5a08"/></linearGradient></defs><path d="M4.5 0.5 L8.5 0.5 L8.5 9.5 L12.5 9.5 L6.5 15.8 L0.5 9.5 L4.5 9.5 Z" fill="url(#sarr)"/></svg><div class="a" style="left:0;top:21px;width:1173px;height:26px;background:#e4e4e4;border-bottom:1px solid #aaaaaa"></div><div class="a" style="left:97px;top:21px;width:1px;height:26px;background:#aaaaaa"></div><div class="a" style="left:1px;top:24px;font-size:16.5px;letter-spacing:0.7px;-webkit-text-stroke:0.25px #000;white-space:nowrap">BAW8618</div><div class="a" style="left:146px;top:21px;width:1px;height:26px;background:#aaaaaa"></div><div class="a" style="left:98px;width:48px;top:26px;text-align:center;font-size:13.5px;-webkit-text-stroke:0.45px #000;letter-spacing:0.5px;white-space:nowrap">14M</div><div class="a" style="left:203px;top:21px;width:1px;height:26px;background:#aaaaaa"></div><div class="a b" style="left:147px;width:56px;top:26px;text-align:center;font-size:13px;white-space:nowrap">06:00</div><div class="a" style="left:260px;top:21px;width:1px;height:26px;background:#aaaaaa"></div><div class="a b" style="left:204px;width:56px;top:26px;text-align:center;font-size:13px;white-space:nowrap">06:00</div><div class="a" style="left:261px;top:21px;width:56px;height:25px;background:#ebebf5"></div><div class="a" style="left:317px;top:21px;width:1px;height:26px;background:#aaaaaa"></div><div class="a b" style="left:261px;width:56px;top:26px;text-align:center;font-size:13px;white-space:nowrap">06:00</div><div class="a" style="left:374px;top:21px;width:1px;height:26px;background:#aaaaaa"></div><div class="a b" style="left:318px;width:56px;top:26px;text-align:center;font-size:13px;white-space:nowrap">06:11</div><div class="a" style="left:431px;top:21px;width:1px;height:26px;background:#aaaaaa"></div><svg class="a" style="left:386.8px;top:30.5px" width="33.0" height="9.0" viewBox="0 0 33 9"><g fill="#000"><rect x="0" y="2.8" width="5.2" height="1.5"/><rect x="8.1" y="2.8" width="5.2" height="1.5"/><rect x="15.1" y="0" width="2.1" height="2.1"/><rect x="15.1" y="5" width="2.1" height="2.1"/><rect x="19.1" y="2.8" width="5.2" height="1.5"/><rect x="27.1" y="2.8" width="5.2" height="1.5"/></g></svg><div class="a" style="left:488px;top:21px;width:1px;height:26px;background:#aaaaaa"></div><svg class="a" style="left:443.8px;top:30.5px" width="33.0" height="9.0" viewBox="0 0 33 9"><g fill="#000"><rect x="0" y="2.8" width="5.2" height="1.5"/><rect x="8.1" y="2.8" width="5.2" height="1.5"/><rect x="15.1" y="0" width="2.1" height="2.1"/><rect x="15.1" y="5" width="2.1" height="2.1"/><rect x="19.1" y="2.8" width="5.2" height="1.5"/><rect x="27.1" y="2.8" width="5.2" height="1.5"/></g></svg><div class="a" style="left:563px;top:21px;width:1px;height:26px;background:#aaaaaa"></div><svg class="a" style="left:490.0px;top:30.5px" width="33.0" height="9.0" viewBox="0 0 33 9"><g fill="#000"><rect x="0" y="2.8" width="5.2" height="1.5"/><rect x="8.1" y="2.8" width="5.2" height="1.5"/><rect x="15.1" y="0" width="2.1" height="2.1"/><rect x="15.1" y="5" width="2.1" height="2.1"/><rect x="19.1" y="2.8" width="5.2" height="1.5"/><rect x="27.1" y="2.8" width="5.2" height="1.5"/></g></svg><div class="a" style="left:638px;top:21px;width:1px;height:26px;background:#aaaaaa"></div><svg class="a" style="left:584.8px;top:30.5px" width="33.0" height="9.0" viewBox="0 0 33 9"><g fill="#000"><rect x="0" y="2.8" width="5.2" height="1.5"/><rect x="8.1" y="2.8" width="5.2" height="1.5"/><rect x="15.1" y="0" width="2.1" height="2.1"/><rect x="15.1" y="5" width="2.1" height="2.1"/><rect x="19.1" y="2.8" width="5.2" height="1.5"/><rect x="27.1" y="2.8" width="5.2" height="1.5"/></g></svg><div class="a" style="left:713px;top:21px;width:1px;height:26px;background:#aaaaaa"></div><div class="a b" style="left:639px;width:74px;top:26px;text-align:center;font-size:13px;white-space:nowrap">PLN</div><div class="a" style="left:788px;top:21px;width:1px;height:26px;background:#aaaaaa"></div><div class="a b" style="left:714px;width:74px;top:26px;text-align:center;font-size:13px;white-space:nowrap">06:00</div><div class="a" style="left:863px;top:21px;width:1px;height:26px;background:#aaaaaa"></div><div class="a b" style="left:789px;width:74px;top:26px;text-align:center;font-size:13px;white-space:nowrap">0</div><div class="a" style="left:938px;top:21px;width:1px;height:26px;background:#aaaaaa"></div><div class="a b" style="left:864px;width:74px;top:26px;text-align:center;font-size:13px;white-space:nowrap">26L</div><div class="a" style="left:1013px;top:21px;width:1px;height:26px;background:#aaaaaa"></div><div class="a b" style="left:939px;width:74px;top:26px;text-align:center;font-size:13px;white-space:nowrap">BOG</div><div class="a" style="left:1088px;top:21px;width:1px;height:26px;background:#aaaaaa"></div><svg class="a" style="left:1034.8px;top:30.5px" width="33.0" height="9.0" viewBox="0 0 33 9"><g fill="#000"><rect x="0" y="2.8" width="5.2" height="1.5"/><rect x="8.1" y="2.8" width="5.2" height="1.5"/><rect x="15.1" y="0" width="2.1" height="2.1"/><rect x="15.1" y="5" width="2.1" height="2.1"/><rect x="19.1" y="2.8" width="5.2" height="1.5"/><rect x="27.1" y="2.8" width="5.2" height="1.5"/></g></svg><div class="a" style="left:1163px;top:21px;width:1px;height:26px;background:#aaaaaa"></div><svg class="a" style="left:1109.8px;top:30.5px" width="33.0" height="9.0" viewBox="0 0 33 9"><g fill="#000"><rect x="0" y="2.8" width="5.2" height="1.5"/><rect x="8.1" y="2.8" width="5.2" height="1.5"/><rect x="15.1" y="0" width="2.1" height="2.1"/><rect x="15.1" y="5" width="2.1" height="2.1"/><rect x="19.1" y="2.8" width="5.2" height="1.5"/><rect x="27.1" y="2.8" width="5.2" height="1.5"/></g></svg><div class="a" style="left:1173px;top:21px;width:1px;height:26px;background:#aaaaaa"></div><div class="a" style="left:0;top:47px;width:1173px;height:26px;background:#ffffff;border-bottom:1px solid #aaaaaa"></div><div class="a" style="left:97px;top:47px;width:1px;height:26px;background:#aaaaaa"></div><div class="a" style="left:1px;top:50px;font-size:16.5px;letter-spacing:0.7px;-webkit-text-stroke:0.25px #000;white-space:nowrap">EZY12GN</div><div class="a" style="left:146px;top:47px;width:1px;height:26px;background:#aaaaaa"></div><div class="a" style="left:98px;width:48px;top:52px;text-align:center;font-size:13.5px;-webkit-text-stroke:0.45px #000;letter-spacing:0.5px;white-space:nowrap">572</div><div class="a" style="left:203px;top:47px;width:1px;height:26px;background:#aaaaaa"></div><div class="a b" style="left:147px;width:56px;top:52px;text-align:center;font-size:13px;white-space:nowrap">06:00</div><div class="a" style="left:260px;top:47px;width:1px;height:26px;background:#aaaaaa"></div><div class="a b" style="left:204px;width:56px;top:52px;text-align:center;font-size:13px;white-space:nowrap">05:50</div><div class="a" style="left:261px;top:47px;width:56px;height:25px;background:#f0f0fb"></div><div class="a" style="left:317px;top:47px;width:1px;height:26px;background:#aaaaaa"></div><div class="a b" style="left:261px;width:56px;top:52px;text-align:center;font-size:13px;white-space:nowrap">06:00</div><div class="a" style="left:374px;top:47px;width:1px;height:26px;background:#aaaaaa"></div><div class="a b" style="left:318px;width:56px;top:52px;text-align:center;font-size:13px;white-space:nowrap">06:15</div><div class="a" style="left:431px;top:47px;width:1px;height:26px;background:#aaaaaa"></div><div class="a b" style="left:375px;width:56px;top:52px;text-align:center;font-size:13px;white-space:nowrap">06:10</div><div class="a" style="left:488px;top:47px;width:1px;height:26px;background:#aaaaaa"></div><div class="a b" style="left:432px;width:56px;top:52px;text-align:center;font-size:13px;white-space:nowrap">06:15</div><div class="a" style="left:563px;top:47px;width:1px;height:26px;background:#aaaaaa"></div><svg class="a" style="left:490.0px;top:56.5px" width="33.0" height="9.0" viewBox="0 0 33 9"><g fill="#000"><rect x="0" y="2.8" width="5.2" height="1.5"/><rect x="8.1" y="2.8" width="5.2" height="1.5"/><rect x="15.1" y="0" width="2.1" height="2.1"/><rect x="15.1" y="5" width="2.1" height="2.1"/><rect x="19.1" y="2.8" width="5.2" height="1.5"/><rect x="27.1" y="2.8" width="5.2" height="1.5"/></g></svg><div class="a" style="left:638px;top:47px;width:1px;height:26px;background:#aaaaaa"></div><svg class="a" style="left:584.8px;top:56.5px" width="33.0" height="9.0" viewBox="0 0 33 9"><g fill="#000"><rect x="0" y="2.8" width="5.2" height="1.5"/><rect x="8.1" y="2.8" width="5.2" height="1.5"/><rect x="15.1" y="0" width="2.1" height="2.1"/><rect x="15.1" y="5" width="2.1" height="2.1"/><rect x="19.1" y="2.8" width="5.2" height="1.5"/><rect x="27.1" y="2.8" width="5.2" height="1.5"/></g></svg><div class="a" style="left:713px;top:47px;width:1px;height:26px;background:#aaaaaa"></div><div class="a b" style="left:639px;width:74px;top:52px;text-align:center;font-size:13px;white-space:nowrap">PLN</div><div class="a" style="left:788px;top:47px;width:1px;height:26px;background:#aaaaaa"></div><div class="a b" style="left:714px;width:74px;top:52px;text-align:center;font-size:13px;white-space:nowrap">05:50</div><div class="a" style="left:863px;top:47px;width:1px;height:26px;background:#aaaaaa"></div><div class="a b" style="left:789px;width:74px;top:52px;text-align:center;font-size:13px;white-space:nowrap">10</div><div class="a" style="left:938px;top:47px;width:1px;height:26px;background:#aaaaaa"></div><div class="a b" style="left:864px;width:74px;top:52px;text-align:center;font-size:13px;white-space:nowrap">26L</div><div class="a" style="left:1013px;top:47px;width:1px;height:26px;background:#aaaaaa"></div><div class="a b" style="left:939px;width:74px;top:52px;text-align:center;font-size:13px;white-space:nowrap">ADM</div><div class="a" style="left:1088px;top:47px;width:1px;height:26px;background:#aaaaaa"></div><svg class="a" style="left:1034.8px;top:56.5px" width="33.0" height="9.0" viewBox="0 0 33 9"><g fill="#000"><rect x="0" y="2.8" width="5.2" height="1.5"/><rect x="8.1" y="2.8" width="5.2" height="1.5"/><rect x="15.1" y="0" width="2.1" height="2.1"/><rect x="15.1" y="5" width="2.1" height="2.1"/><rect x="19.1" y="2.8" width="5.2" height="1.5"/><rect x="27.1" y="2.8" width="5.2" height="1.5"/></g></svg><div class="a" style="left:1163px;top:47px;width:1px;height:26px;background:#aaaaaa"></div><svg class="a" style="left:1109.8px;top:56.5px" width="33.0" height="9.0" viewBox="0 0 33 9"><g fill="#000"><rect x="0" y="2.8" width="5.2" height="1.5"/><rect x="8.1" y="2.8" width="5.2" height="1.5"/><rect x="15.1" y="0" width="2.1" height="2.1"/><rect x="15.1" y="5" width="2.1" height="2.1"/><rect x="19.1" y="2.8" width="5.2" height="1.5"/><rect x="27.1" y="2.8" width="5.2" height="1.5"/></g></svg><div class="a" style="left:1173px;top:47px;width:1px;height:26px;background:#aaaaaa"></div><div class="a" style="left:0;top:73px;width:1173px;height:26px;background:#e4e4e4;border-bottom:1px solid #aaaaaa"></div><div class="a" style="left:97px;top:73px;width:1px;height:26px;background:#aaaaaa"></div><div class="a" style="left:1px;top:76px;font-size:16.5px;letter-spacing:0.7px;-webkit-text-stroke:0.25px #000;white-space:nowrap">IBK2410</div><div class="a" style="left:146px;top:73px;width:1px;height:26px;background:#aaaaaa"></div><div class="a" style="left:98px;width:48px;top:78px;text-align:center;font-size:13.5px;-webkit-text-stroke:0.45px #000;letter-spacing:0.5px;white-space:nowrap">21M</div><div class="a" style="left:203px;top:73px;width:1px;height:26px;background:#aaaaaa"></div><div class="a b" style="left:147px;width:56px;top:78px;text-align:center;font-size:13px;white-space:nowrap">06:00</div><div class="a" style="left:260px;top:73px;width:1px;height:26px;background:#aaaaaa"></div><div class="a b" style="left:204px;width:56px;top:78px;text-align:center;font-size:13px;white-space:nowrap">06:00</div><div class="a" style="left:261px;top:73px;width:56px;height:25px;background:#ebebf5"></div><div class="a" style="left:317px;top:73px;width:1px;height:26px;background:#aaaaaa"></div><div class="a b" style="left:261px;width:56px;top:78px;text-align:center;font-size:13px;white-space:nowrap">06:00</div><div class="a" style="left:374px;top:73px;width:1px;height:26px;background:#aaaaaa"></div><div class="a b" style="left:318px;width:56px;top:78px;text-align:center;font-size:13px;white-space:nowrap">06:13</div><div class="a" style="left:431px;top:73px;width:1px;height:26px;background:#aaaaaa"></div><svg class="a" style="left:386.8px;top:82.5px" width="33.0" height="9.0" viewBox="0 0 33 9"><g fill="#000"><rect x="0" y="2.8" width="5.2" height="1.5"/><rect x="8.1" y="2.8" width="5.2" height="1.5"/><rect x="15.1" y="0" width="2.1" height="2.1"/><rect x="15.1" y="5" width="2.1" height="2.1"/><rect x="19.1" y="2.8" width="5.2" height="1.5"/><rect x="27.1" y="2.8" width="5.2" height="1.5"/></g></svg><div class="a" style="left:488px;top:73px;width:1px;height:26px;background:#aaaaaa"></div><svg class="a" style="left:443.8px;top:82.5px" width="33.0" height="9.0" viewBox="0 0 33 9"><g fill="#000"><rect x="0" y="2.8" width="5.2" height="1.5"/><rect x="8.1" y="2.8" width="5.2" height="1.5"/><rect x="15.1" y="0" width="2.1" height="2.1"/><rect x="15.1" y="5" width="2.1" height="2.1"/><rect x="19.1" y="2.8" width="5.2" height="1.5"/><rect x="27.1" y="2.8" width="5.2" height="1.5"/></g></svg><div class="a" style="left:563px;top:73px;width:1px;height:26px;background:#aaaaaa"></div><svg class="a" style="left:490.0px;top:82.5px" width="33.0" height="9.0" viewBox="0 0 33 9"><g fill="#000"><rect x="0" y="2.8" width="5.2" height="1.5"/><rect x="8.1" y="2.8" width="5.2" height="1.5"/><rect x="15.1" y="0" width="2.1" height="2.1"/><rect x="15.1" y="5" width="2.1" height="2.1"/><rect x="19.1" y="2.8" width="5.2" height="1.5"/><rect x="27.1" y="2.8" width="5.2" height="1.5"/></g></svg><div class="a" style="left:638px;top:73px;width:1px;height:26px;background:#aaaaaa"></div><svg class="a" style="left:584.8px;top:82.5px" width="33.0" height="9.0" viewBox="0 0 33 9"><g fill="#000"><rect x="0" y="2.8" width="5.2" height="1.5"/><rect x="8.1" y="2.8" width="5.2" height="1.5"/><rect x="15.1" y="0" width="2.1" height="2.1"/><rect x="15.1" y="5" width="2.1" height="2.1"/><rect x="19.1" y="2.8" width="5.2" height="1.5"/><rect x="27.1" y="2.8" width="5.2" height="1.5"/></g></svg><div class="a" style="left:713px;top:73px;width:1px;height:26px;background:#aaaaaa"></div><div class="a b" style="left:639px;width:74px;top:78px;text-align:center;font-size:13px;white-space:nowrap">PLN</div><div class="a" style="left:788px;top:73px;width:1px;height:26px;background:#aaaaaa"></div><div class="a b" style="left:714px;width:74px;top:78px;text-align:center;font-size:13px;white-space:nowrap">06:00</div><div class="a" style="left:863px;top:73px;width:1px;height:26px;background:#aaaaaa"></div><div class="a b" style="left:789px;width:74px;top:78px;text-align:center;font-size:13px;white-space:nowrap">0</div><div class="a" style="left:938px;top:73px;width:1px;height:26px;background:#aaaaaa"></div><div class="a b" style="left:864px;width:74px;top:78px;text-align:center;font-size:13px;white-space:nowrap">26L</div><div class="a" style="left:1013px;top:73px;width:1px;height:26px;background:#aaaaaa"></div><div class="a b" style="left:939px;width:74px;top:78px;text-align:center;font-size:13px;white-space:nowrap">NOV</div><div class="a" style="left:1088px;top:73px;width:1px;height:26px;background:#aaaaaa"></div><svg class="a" style="left:1034.8px;top:82.5px" width="33.0" height="9.0" viewBox="0 0 33 9"><g fill="#000"><rect x="0" y="2.8" width="5.2" height="1.5"/><rect x="8.1" y="2.8" width="5.2" height="1.5"/><rect x="15.1" y="0" width="2.1" height="2.1"/><rect x="15.1" y="5" width="2.1" height="2.1"/><rect x="19.1" y="2.8" width="5.2" height="1.5"/><rect x="27.1" y="2.8" width="5.2" height="1.5"/></g></svg><div class="a" style="left:1163px;top:73px;width:1px;height:26px;background:#aaaaaa"></div><svg class="a" style="left:1109.8px;top:82.5px" width="33.0" height="9.0" viewBox="0 0 33 9"><g fill="#000"><rect x="0" y="2.8" width="5.2" height="1.5"/><rect x="8.1" y="2.8" width="5.2" height="1.5"/><rect x="15.1" y="0" width="2.1" height="2.1"/><rect x="15.1" y="5" width="2.1" height="2.1"/><rect x="19.1" y="2.8" width="5.2" height="1.5"/><rect x="27.1" y="2.8" width="5.2" height="1.5"/></g></svg><div class="a" style="left:1173px;top:73px;width:1px;height:26px;background:#aaaaaa"></div><div class="a" style="left:0;top:99px;width:1173px;height:26px;background:#ffffff;border-bottom:1px solid #aaaaaa"></div><div class="a" style="left:97px;top:99px;width:1px;height:26px;background:#aaaaaa"></div><div class="a" style="left:1px;top:102px;font-size:16.5px;letter-spacing:0.7px;-webkit-text-stroke:0.25px #000;white-space:nowrap">EZY84GW</div><div class="a" style="left:146px;top:99px;width:1px;height:26px;background:#aaaaaa"></div><div class="a" style="left:98px;width:48px;top:104px;text-align:center;font-size:13.5px;-webkit-text-stroke:0.45px #000;letter-spacing:0.5px;white-space:nowrap">101M</div><div class="a" style="left:203px;top:99px;width:1px;height:26px;background:#aaaaaa"></div><div class="a b" style="left:147px;width:56px;top:104px;text-align:center;font-size:13px;white-space:nowrap">05:55</div><div class="a" style="left:260px;top:99px;width:1px;height:26px;background:#aaaaaa"></div><div class="a b" style="left:204px;width:56px;top:104px;text-align:center;font-size:13px;white-space:nowrap">05:55</div><div class="a" style="left:261px;top:99px;width:56px;height:25px;background:#f0f0fb"></div><div class="a" style="left:317px;top:99px;width:1px;height:26px;background:#aaaaaa"></div><div class="a b" style="left:261px;width:56px;top:104px;text-align:center;font-size:13px;white-space:nowrap">05:55</div><div class="a" style="left:374px;top:99px;width:1px;height:26px;background:#aaaaaa"></div><div class="a b" style="left:318px;width:56px;top:104px;text-align:center;font-size:13px;white-space:nowrap">06:09</div><div class="a" style="left:431px;top:99px;width:1px;height:26px;background:#aaaaaa"></div><svg class="a" style="left:386.8px;top:108.5px" width="33.0" height="9.0" viewBox="0 0 33 9"><g fill="#000"><rect x="0" y="2.8" width="5.2" height="1.5"/><rect x="8.1" y="2.8" width="5.2" height="1.5"/><rect x="15.1" y="0" width="2.1" height="2.1"/><rect x="15.1" y="5" width="2.1" height="2.1"/><rect x="19.1" y="2.8" width="5.2" height="1.5"/><rect x="27.1" y="2.8" width="5.2" height="1.5"/></g></svg><div class="a" style="left:488px;top:99px;width:1px;height:26px;background:#aaaaaa"></div><svg class="a" style="left:443.8px;top:108.5px" width="33.0" height="9.0" viewBox="0 0 33 9"><g fill="#000"><rect x="0" y="2.8" width="5.2" height="1.5"/><rect x="8.1" y="2.8" width="5.2" height="1.5"/><rect x="15.1" y="0" width="2.1" height="2.1"/><rect x="15.1" y="5" width="2.1" height="2.1"/><rect x="19.1" y="2.8" width="5.2" height="1.5"/><rect x="27.1" y="2.8" width="5.2" height="1.5"/></g></svg><div class="a" style="left:563px;top:99px;width:1px;height:26px;background:#aaaaaa"></div><svg class="a" style="left:490.0px;top:108.5px" width="33.0" height="9.0" viewBox="0 0 33 9"><g fill="#000"><rect x="0" y="2.8" width="5.2" height="1.5"/><rect x="8.1" y="2.8" width="5.2" height="1.5"/><rect x="15.1" y="0" width="2.1" height="2.1"/><rect x="15.1" y="5" width="2.1" height="2.1"/><rect x="19.1" y="2.8" width="5.2" height="1.5"/><rect x="27.1" y="2.8" width="5.2" height="1.5"/></g></svg><div class="a" style="left:638px;top:99px;width:1px;height:26px;background:#aaaaaa"></div><svg class="a" style="left:584.8px;top:108.5px" width="33.0" height="9.0" viewBox="0 0 33 9"><g fill="#000"><rect x="0" y="2.8" width="5.2" height="1.5"/><rect x="8.1" y="2.8" width="5.2" height="1.5"/><rect x="15.1" y="0" width="2.1" height="2.1"/><rect x="15.1" y="5" width="2.1" height="2.1"/><rect x="19.1" y="2.8" width="5.2" height="1.5"/><rect x="27.1" y="2.8" width="5.2" height="1.5"/></g></svg><div class="a" style="left:713px;top:99px;width:1px;height:26px;background:#aaaaaa"></div><div class="a b" style="left:639px;width:74px;top:104px;text-align:center;font-size:13px;white-space:nowrap">PLN</div><div class="a" style="left:788px;top:99px;width:1px;height:26px;background:#aaaaaa"></div><div class="a b" style="left:714px;width:74px;top:104px;text-align:center;font-size:13px;white-space:nowrap">05:55</div><div class="a" style="left:863px;top:99px;width:1px;height:26px;background:#aaaaaa"></div><div class="a b" style="left:789px;width:74px;top:104px;text-align:center;font-size:13px;white-space:nowrap">0</div><div class="a" style="left:938px;top:99px;width:1px;height:26px;background:#aaaaaa"></div><div class="a b" style="left:864px;width:74px;top:104px;text-align:center;font-size:13px;white-space:nowrap">26L</div><div class="a" style="left:1013px;top:99px;width:1px;height:26px;background:#aaaaaa"></div><div class="a b" style="left:939px;width:74px;top:104px;text-align:center;font-size:13px;white-space:nowrap">BOG</div><div class="a" style="left:1088px;top:99px;width:1px;height:26px;background:#aaaaaa"></div><svg class="a" style="left:1034.8px;top:108.5px" width="33.0" height="9.0" viewBox="0 0 33 9"><g fill="#000"><rect x="0" y="2.8" width="5.2" height="1.5"/><rect x="8.1" y="2.8" width="5.2" height="1.5"/><rect x="15.1" y="0" width="2.1" height="2.1"/><rect x="15.1" y="5" width="2.1" height="2.1"/><rect x="19.1" y="2.8" width="5.2" height="1.5"/><rect x="27.1" y="2.8" width="5.2" height="1.5"/></g></svg><div class="a" style="left:1163px;top:99px;width:1px;height:26px;background:#aaaaaa"></div><svg class="a" style="left:1109.8px;top:108.5px" width="33.0" height="9.0" viewBox="0 0 33 9"><g fill="#000"><rect x="0" y="2.8" width="5.2" height="1.5"/><rect x="8.1" y="2.8" width="5.2" height="1.5"/><rect x="15.1" y="0" width="2.1" height="2.1"/><rect x="15.1" y="5" width="2.1" height="2.1"/><rect x="19.1" y="2.8" width="5.2" height="1.5"/><rect x="27.1" y="2.8" width="5.2" height="1.5"/></g></svg><div class="a" style="left:1173px;top:99px;width:1px;height:26px;background:#aaaaaa"></div><div class="a" style="left:0;top:125px;width:1173px;height:26px;background:#e4e4e4;border-bottom:1px solid #aaaaaa"></div><div class="a" style="left:97px;top:125px;width:1px;height:26px;background:#aaaaaa"></div><div class="a" style="left:1px;top:128px;font-size:16.5px;letter-spacing:0.7px;-webkit-text-stroke:0.25px #000;white-space:nowrap">BAW86Y</div><div class="a" style="left:146px;top:125px;width:1px;height:26px;background:#aaaaaa"></div><div class="a" style="left:98px;width:48px;top:130px;text-align:center;font-size:13.5px;-webkit-text-stroke:0.45px #000;letter-spacing:0.5px;white-space:nowrap">28M</div><div class="a" style="left:203px;top:125px;width:1px;height:26px;background:#aaaaaa"></div><div class="a b" style="left:147px;width:56px;top:130px;text-align:center;font-size:13px;white-space:nowrap">05:55</div><div class="a" style="left:260px;top:125px;width:1px;height:26px;background:#aaaaaa"></div><div class="a b" style="left:204px;width:56px;top:130px;text-align:center;font-size:13px;white-space:nowrap">05:55</div><div class="a" style="left:261px;top:125px;width:56px;height:25px;background:#ebebf5"></div><div class="a" style="left:317px;top:125px;width:1px;height:26px;background:#aaaaaa"></div><div class="a b" style="left:261px;width:56px;top:130px;text-align:center;font-size:13px;white-space:nowrap">05:55</div><div class="a" style="left:374px;top:125px;width:1px;height:26px;background:#aaaaaa"></div><div class="a b" style="left:318px;width:56px;top:130px;text-align:center;font-size:13px;white-space:nowrap">06:07</div><div class="a" style="left:431px;top:125px;width:1px;height:26px;background:#aaaaaa"></div><svg class="a" style="left:386.8px;top:134.5px" width="33.0" height="9.0" viewBox="0 0 33 9"><g fill="#000"><rect x="0" y="2.8" width="5.2" height="1.5"/><rect x="8.1" y="2.8" width="5.2" height="1.5"/><rect x="15.1" y="0" width="2.1" height="2.1"/><rect x="15.1" y="5" width="2.1" height="2.1"/><rect x="19.1" y="2.8" width="5.2" height="1.5"/><rect x="27.1" y="2.8" width="5.2" height="1.5"/></g></svg><div class="a" style="left:488px;top:125px;width:1px;height:26px;background:#aaaaaa"></div><svg class="a" style="left:443.8px;top:134.5px" width="33.0" height="9.0" viewBox="0 0 33 9"><g fill="#000"><rect x="0" y="2.8" width="5.2" height="1.5"/><rect x="8.1" y="2.8" width="5.2" height="1.5"/><rect x="15.1" y="0" width="2.1" height="2.1"/><rect x="15.1" y="5" width="2.1" height="2.1"/><rect x="19.1" y="2.8" width="5.2" height="1.5"/><rect x="27.1" y="2.8" width="5.2" height="1.5"/></g></svg><div class="a" style="left:563px;top:125px;width:1px;height:26px;background:#aaaaaa"></div><svg class="a" style="left:490.0px;top:134.5px" width="33.0" height="9.0" viewBox="0 0 33 9"><g fill="#000"><rect x="0" y="2.8" width="5.2" height="1.5"/><rect x="8.1" y="2.8" width="5.2" height="1.5"/><rect x="15.1" y="0" width="2.1" height="2.1"/><rect x="15.1" y="5" width="2.1" height="2.1"/><rect x="19.1" y="2.8" width="5.2" height="1.5"/><rect x="27.1" y="2.8" width="5.2" height="1.5"/></g></svg><div class="a" style="left:638px;top:125px;width:1px;height:26px;background:#aaaaaa"></div><svg class="a" style="left:584.8px;top:134.5px" width="33.0" height="9.0" viewBox="0 0 33 9"><g fill="#000"><rect x="0" y="2.8" width="5.2" height="1.5"/><rect x="8.1" y="2.8" width="5.2" height="1.5"/><rect x="15.1" y="0" width="2.1" height="2.1"/><rect x="15.1" y="5" width="2.1" height="2.1"/><rect x="19.1" y="2.8" width="5.2" height="1.5"/><rect x="27.1" y="2.8" width="5.2" height="1.5"/></g></svg><div class="a" style="left:713px;top:125px;width:1px;height:26px;background:#aaaaaa"></div><div class="a b" style="left:639px;width:74px;top:130px;text-align:center;font-size:13px;white-space:nowrap">PLN</div><div class="a" style="left:788px;top:125px;width:1px;height:26px;background:#aaaaaa"></div><div class="a b" style="left:714px;width:74px;top:130px;text-align:center;font-size:13px;white-space:nowrap">05:55</div><div class="a" style="left:863px;top:125px;width:1px;height:26px;background:#aaaaaa"></div><div class="a b" style="left:789px;width:74px;top:130px;text-align:center;font-size:13px;white-space:nowrap">0</div><div class="a" style="left:938px;top:125px;width:1px;height:26px;background:#aaaaaa"></div><div class="a b" style="left:864px;width:74px;top:130px;text-align:center;font-size:13px;white-space:nowrap">26L</div><div class="a" style="left:1013px;top:125px;width:1px;height:26px;background:#aaaaaa"></div><div class="a b" style="left:939px;width:74px;top:130px;text-align:center;font-size:13px;white-space:nowrap">BOG</div><div class="a" style="left:1088px;top:125px;width:1px;height:26px;background:#aaaaaa"></div><svg class="a" style="left:1034.8px;top:134.5px" width="33.0" height="9.0" viewBox="0 0 33 9"><g fill="#000"><rect x="0" y="2.8" width="5.2" height="1.5"/><rect x="8.1" y="2.8" width="5.2" height="1.5"/><rect x="15.1" y="0" width="2.1" height="2.1"/><rect x="15.1" y="5" width="2.1" height="2.1"/><rect x="19.1" y="2.8" width="5.2" height="1.5"/><rect x="27.1" y="2.8" width="5.2" height="1.5"/></g></svg><div class="a" style="left:1163px;top:125px;width:1px;height:26px;background:#aaaaaa"></div><svg class="a" style="left:1109.8px;top:134.5px" width="33.0" height="9.0" viewBox="0 0 33 9"><g fill="#000"><rect x="0" y="2.8" width="5.2" height="1.5"/><rect x="8.1" y="2.8" width="5.2" height="1.5"/><rect x="15.1" y="0" width="2.1" height="2.1"/><rect x="15.1" y="5" width="2.1" height="2.1"/><rect x="19.1" y="2.8" width="5.2" height="1.5"/><rect x="27.1" y="2.8" width="5.2" height="1.5"/></g></svg><div class="a" style="left:1173px;top:125px;width:1px;height:26px;background:#aaaaaa"></div><div class="a" style="left:0;top:151px;width:1173px;height:26px;background:#b2c5de;border-bottom:1px solid #aaaaaa"></div><div class="a" style="left:97px;top:151px;width:1px;height:26px;background:#aaaaaa"></div><div class="a" style="left:1px;top:154px;font-size:16.5px;letter-spacing:0.7px;-webkit-text-stroke:0.25px #000;white-space:nowrap">EZY74DT</div><div class="a" style="left:146px;top:151px;width:1px;height:26px;background:#aaaaaa"></div><div class="a" style="left:98px;width:48px;top:156px;text-align:center;font-size:13.5px;-webkit-text-stroke:0.45px #000;letter-spacing:0.5px;white-space:nowrap">565</div><div class="a" style="left:203px;top:151px;width:1px;height:26px;background:#aaaaaa"></div><div class="a b" style="left:147px;width:56px;top:156px;text-align:center;font-size:13px;white-space:nowrap">05:50</div><div class="a" style="left:260px;top:151px;width:1px;height:26px;background:#aaaaaa"></div><div class="a b" style="left:204px;width:56px;top:156px;text-align:center;font-size:13px;white-space:nowrap">05:50</div><div class="a" style="left:261px;top:151px;width:56px;height:25px;background:#77ef77"></div><div class="a" style="left:317px;top:151px;width:1px;height:26px;background:#aaaaaa"></div><div class="a b" style="left:261px;width:56px;top:156px;text-align:center;font-size:13px;white-space:nowrap">05:50</div><div class="a" style="left:374px;top:151px;width:1px;height:26px;background:#aaaaaa"></div><div class="a b" style="left:318px;width:56px;top:156px;text-align:center;font-size:13px;white-space:nowrap">06:05</div><div class="a" style="left:431px;top:151px;width:1px;height:26px;background:#aaaaaa"></div><svg class="a" style="left:386.8px;top:160.5px" width="33.0" height="9.0" viewBox="0 0 33 9"><g fill="#000"><rect x="0" y="2.8" width="5.2" height="1.5"/><rect x="8.1" y="2.8" width="5.2" height="1.5"/><rect x="15.1" y="0" width="2.1" height="2.1"/><rect x="15.1" y="5" width="2.1" height="2.1"/><rect x="19.1" y="2.8" width="5.2" height="1.5"/><rect x="27.1" y="2.8" width="5.2" height="1.5"/></g></svg><div class="a" style="left:488px;top:151px;width:1px;height:26px;background:#aaaaaa"></div><svg class="a" style="left:443.8px;top:160.5px" width="33.0" height="9.0" viewBox="0 0 33 9"><g fill="#000"><rect x="0" y="2.8" width="5.2" height="1.5"/><rect x="8.1" y="2.8" width="5.2" height="1.5"/><rect x="15.1" y="0" width="2.1" height="2.1"/><rect x="15.1" y="5" width="2.1" height="2.1"/><rect x="19.1" y="2.8" width="5.2" height="1.5"/><rect x="27.1" y="2.8" width="5.2" height="1.5"/></g></svg><div class="a" style="left:563px;top:151px;width:1px;height:26px;background:#aaaaaa"></div><svg class="a" style="left:490.0px;top:160.5px" width="33.0" height="9.0" viewBox="0 0 33 9"><g fill="#000"><rect x="0" y="2.8" width="5.2" height="1.5"/><rect x="8.1" y="2.8" width="5.2" height="1.5"/><rect x="15.1" y="0" width="2.1" height="2.1"/><rect x="15.1" y="5" width="2.1" height="2.1"/><rect x="19.1" y="2.8" width="5.2" height="1.5"/><rect x="27.1" y="2.8" width="5.2" height="1.5"/></g></svg><div class="a" style="left:638px;top:151px;width:1px;height:26px;background:#aaaaaa"></div><svg class="a" style="left:584.8px;top:160.5px" width="33.0" height="9.0" viewBox="0 0 33 9"><g fill="#000"><rect x="0" y="2.8" width="5.2" height="1.5"/><rect x="8.1" y="2.8" width="5.2" height="1.5"/><rect x="15.1" y="0" width="2.1" height="2.1"/><rect x="15.1" y="5" width="2.1" height="2.1"/><rect x="19.1" y="2.8" width="5.2" height="1.5"/><rect x="27.1" y="2.8" width="5.2" height="1.5"/></g></svg><div class="a" style="left:713px;top:151px;width:1px;height:26px;background:#aaaaaa"></div><div class="a b" style="left:639px;width:74px;top:156px;text-align:center;font-size:13px;white-space:nowrap">PLN</div><div class="a" style="left:788px;top:151px;width:1px;height:26px;background:#aaaaaa"></div><div class="a b" style="left:714px;width:74px;top:156px;text-align:center;font-size:13px;white-space:nowrap">05:50</div><div class="a" style="left:863px;top:151px;width:1px;height:26px;background:#aaaaaa"></div><div class="a b" style="left:789px;width:74px;top:156px;text-align:center;font-size:13px;white-space:nowrap">0</div><div class="a" style="left:938px;top:151px;width:1px;height:26px;background:#aaaaaa"></div><div class="a b" style="left:864px;width:74px;top:156px;text-align:center;font-size:13px;white-space:nowrap">26L</div><div class="a" style="left:1013px;top:151px;width:1px;height:26px;background:#aaaaaa"></div><div class="a b" style="left:939px;width:74px;top:156px;text-align:center;font-size:13px;white-space:nowrap">BOG</div><div class="a" style="left:1088px;top:151px;width:1px;height:26px;background:#aaaaaa"></div><svg class="a" style="left:1034.8px;top:160.5px" width="33.0" height="9.0" viewBox="0 0 33 9"><g fill="#000"><rect x="0" y="2.8" width="5.2" height="1.5"/><rect x="8.1" y="2.8" width="5.2" height="1.5"/><rect x="15.1" y="0" width="2.1" height="2.1"/><rect x="15.1" y="5" width="2.1" height="2.1"/><rect x="19.1" y="2.8" width="5.2" height="1.5"/><rect x="27.1" y="2.8" width="5.2" height="1.5"/></g></svg><div class="a" style="left:1163px;top:151px;width:1px;height:26px;background:#aaaaaa"></div><svg class="a" style="left:1109.8px;top:160.5px" width="33.0" height="9.0" viewBox="0 0 33 9"><g fill="#000"><rect x="0" y="2.8" width="5.2" height="1.5"/><rect x="8.1" y="2.8" width="5.2" height="1.5"/><rect x="15.1" y="0" width="2.1" height="2.1"/><rect x="15.1" y="5" width="2.1" height="2.1"/><rect x="19.1" y="2.8" width="5.2" height="1.5"/><rect x="27.1" y="2.8" width="5.2" height="1.5"/></g></svg><div class="a" style="left:1173px;top:151px;width:1px;height:26px;background:#aaaaaa"></div><div class="a" style="left:0;top:177px;width:1173px;height:26px;background:#ffc600;border-bottom:1px solid #aaaaaa"></div><div class="a" style="left:97px;top:177px;width:1px;height:26px;background:#aaaaaa"></div><div class="a" style="left:1px;top:180px;font-size:16.5px;letter-spacing:0.7px;-webkit-text-stroke:0.25px #000;white-space:nowrap">Time:</div><div class="a" style="left:146px;top:177px;width:1px;height:26px;background:#aaaaaa"></div><div class="a" style="left:203px;top:177px;width:1px;height:26px;background:#aaaaaa"></div><div class="a" style="left:260px;top:177px;width:1px;height:26px;background:#aaaaaa"></div><div class="a" style="left:317px;top:177px;width:1px;height:26px;background:#aaaaaa"></div><div class="a b" style="left:261px;width:56px;top:182px;text-align:center;font-size:13px;white-space:nowrap">05:47</div><div class="a" style="left:374px;top:177px;width:1px;height:26px;background:#aaaaaa"></div><div class="a" style="left:431px;top:177px;width:1px;height:26px;background:#aaaaaa"></div><div class="a" style="left:488px;top:177px;width:1px;height:26px;background:#aaaaaa"></div><div class="a" style="left:563px;top:177px;width:1px;height:26px;background:#aaaaaa"></div><div class="a" style="left:638px;top:177px;width:1px;height:26px;background:#aaaaaa"></div><div class="a" style="left:713px;top:177px;width:1px;height:26px;background:#aaaaaa"></div><div class="a" style="left:788px;top:177px;width:1px;height:26px;background:#aaaaaa"></div><div class="a" style="left:863px;top:177px;width:1px;height:26px;background:#aaaaaa"></div><div class="a" style="left:938px;top:177px;width:1px;height:26px;background:#aaaaaa"></div><div class="a" style="left:1013px;top:177px;width:1px;height:26px;background:#aaaaaa"></div><div class="a" style="left:1088px;top:177px;width:1px;height:26px;background:#aaaaaa"></div><div class="a" style="left:1163px;top:177px;width:1px;height:26px;background:#aaaaaa"></div><div class="a" style="left:1173px;top:177px;width:1px;height:26px;background:#aaaaaa"></div><div class="a" style="left:0;top:203px;width:1173px;height:26px;background:#ffffff;border-bottom:1px solid #aaaaaa"></div><div class="a" style="left:97px;top:203px;width:1px;height:26px;background:#aaaaaa"></div><div class="a" style="left:1px;top:206px;font-size:16.5px;letter-spacing:0.7px;-webkit-text-stroke:0.25px #000;white-space:nowrap">EZY81ZX</div><div class="a" style="left:146px;top:203px;width:1px;height:26px;background:#aaaaaa"></div><div class="a" style="left:98px;width:48px;top:208px;text-align:center;font-size:13.5px;-webkit-text-stroke:0.45px #000;letter-spacing:0.5px;white-space:nowrap">562</div><div class="a" style="left:203px;top:203px;width:1px;height:26px;background:#aaaaaa"></div><div class="a b" style="left:147px;width:56px;top:208px;text-align:center;font-size:13px;white-space:nowrap">05:35</div><div class="a" style="left:260px;top:203px;width:1px;height:26px;background:#aaaaaa"></div><div class="a b" style="left:204px;width:56px;top:208px;text-align:center;font-size:13px;white-space:nowrap">05:35</div><div class="a" style="left:261px;top:203px;width:56px;height:25px;background:#77ef77"></div><div class="a" style="left:317px;top:203px;width:1px;height:26px;background:#aaaaaa"></div><div class="a b" style="left:261px;width:56px;top:208px;text-align:center;font-size:13px;white-space:nowrap">05:44</div><div class="a" style="left:374px;top:203px;width:1px;height:26px;background:#aaaaaa"></div><div class="a b" style="left:318px;width:56px;top:208px;text-align:center;font-size:13px;white-space:nowrap">05:44</div><div class="a" style="left:431px;top:203px;width:1px;height:26px;background:#aaaaaa"></div><svg class="a" style="left:386.8px;top:212.5px" width="33.0" height="9.0" viewBox="0 0 33 9"><g fill="#000"><rect x="0" y="2.8" width="5.2" height="1.5"/><rect x="8.1" y="2.8" width="5.2" height="1.5"/><rect x="15.1" y="0" width="2.1" height="2.1"/><rect x="15.1" y="5" width="2.1" height="2.1"/><rect x="19.1" y="2.8" width="5.2" height="1.5"/><rect x="27.1" y="2.8" width="5.2" height="1.5"/></g></svg><div class="a" style="left:488px;top:203px;width:1px;height:26px;background:#aaaaaa"></div><svg class="a" style="left:443.8px;top:212.5px" width="33.0" height="9.0" viewBox="0 0 33 9"><g fill="#000"><rect x="0" y="2.8" width="5.2" height="1.5"/><rect x="8.1" y="2.8" width="5.2" height="1.5"/><rect x="15.1" y="0" width="2.1" height="2.1"/><rect x="15.1" y="5" width="2.1" height="2.1"/><rect x="19.1" y="2.8" width="5.2" height="1.5"/><rect x="27.1" y="2.8" width="5.2" height="1.5"/></g></svg><div class="a" style="left:563px;top:203px;width:1px;height:26px;background:#aaaaaa"></div><svg class="a" style="left:490.0px;top:212.5px" width="33.0" height="9.0" viewBox="0 0 33 9"><g fill="#000"><rect x="0" y="2.8" width="5.2" height="1.5"/><rect x="8.1" y="2.8" width="5.2" height="1.5"/><rect x="15.1" y="0" width="2.1" height="2.1"/><rect x="15.1" y="5" width="2.1" height="2.1"/><rect x="19.1" y="2.8" width="5.2" height="1.5"/><rect x="27.1" y="2.8" width="5.2" height="1.5"/></g></svg><div class="a" style="left:638px;top:203px;width:1px;height:26px;background:#aaaaaa"></div><svg class="a" style="left:584.8px;top:212.5px" width="33.0" height="9.0" viewBox="0 0 33 9"><g fill="#000"><rect x="0" y="2.8" width="5.2" height="1.5"/><rect x="8.1" y="2.8" width="5.2" height="1.5"/><rect x="15.1" y="0" width="2.1" height="2.1"/><rect x="15.1" y="5" width="2.1" height="2.1"/><rect x="19.1" y="2.8" width="5.2" height="1.5"/><rect x="27.1" y="2.8" width="5.2" height="1.5"/></g></svg><div class="a" style="left:713px;top:203px;width:1px;height:26px;background:#aaaaaa"></div><div class="a b" style="left:639px;width:74px;top:208px;text-align:center;font-size:13px;white-space:nowrap">TO</div><div class="a" style="left:788px;top:203px;width:1px;height:26px;background:#aaaaaa"></div><div class="a b" style="left:714px;width:74px;top:208px;text-align:center;font-size:13px;white-space:nowrap">05:35</div><div class="a" style="left:863px;top:203px;width:1px;height:26px;background:#aaaaaa"></div><div class="a b" style="left:789px;width:74px;top:208px;text-align:center;font-size:13px;white-space:nowrap">9</div><div class="a" style="left:938px;top:203px;width:1px;height:26px;background:#aaaaaa"></div><div class="a b" style="left:864px;width:74px;top:208px;text-align:center;font-size:13px;white-space:nowrap">26L</div><div class="a" style="left:1013px;top:203px;width:1px;height:26px;background:#aaaaaa"></div><div class="a b" style="left:939px;width:74px;top:208px;text-align:center;font-size:13px;white-space:nowrap">NOV</div><div class="a" style="left:1088px;top:203px;width:1px;height:26px;background:#aaaaaa"></div><div class="a b" style="left:1014px;width:74px;top:208px;text-align:center;font-size:13px;white-space:nowrap">05:32</div><div class="a" style="left:1163px;top:203px;width:1px;height:26px;background:#aaaaaa"></div><div class="a b" style="left:1089px;width:74px;top:208px;text-align:center;font-size:13px;white-space:nowrap">05:32</div><div class="a" style="left:1173px;top:203px;width:1px;height:26px;background:#aaaaaa"></div><div class="a" style="left:0;top:229px;width:1173px;height:26px;background:#e4e4e4;border-bottom:1px solid #aaaaaa"></div><div class="a" style="left:97px;top:229px;width:1px;height:26px;background:#aaaaaa"></div><div class="a" style="left:1px;top:232px;font-size:16.5px;letter-spacing:0.7px;-webkit-text-stroke:0.25px #000;white-space:nowrap">IBK9YR</div><div class="a" style="left:146px;top:229px;width:1px;height:26px;background:#aaaaaa"></div><div class="a" style="left:98px;width:48px;top:234px;text-align:center;font-size:13.5px;-webkit-text-stroke:0.45px #000;letter-spacing:0.5px;white-space:nowrap">15M</div><div class="a" style="left:203px;top:229px;width:1px;height:26px;background:#aaaaaa"></div><div class="a b" style="left:147px;width:56px;top:234px;text-align:center;font-size:13px;white-space:nowrap">05:40</div><div class="a" style="left:260px;top:229px;width:1px;height:26px;background:#aaaaaa"></div><div class="a b" style="left:204px;width:56px;top:234px;text-align:center;font-size:13px;white-space:nowrap">05:50</div><div class="a" style="left:261px;top:229px;width:56px;height:25px;background:#ebebf5"></div><div class="a" style="left:317px;top:229px;width:1px;height:26px;background:#aaaaaa"></div><div class="a b" style="left:261px;width:56px;top:234px;text-align:center;font-size:13px;white-space:nowrap">05:39</div><div class="a" style="left:374px;top:229px;width:1px;height:26px;background:#aaaaaa"></div><div class="a b" style="left:318px;width:56px;top:234px;text-align:center;font-size:13px;white-space:nowrap">05:51</div><div class="a" style="left:431px;top:229px;width:1px;height:26px;background:#aaaaaa"></div><svg class="a" style="left:386.8px;top:238.5px" width="33.0" height="9.0" viewBox="0 0 33 9"><g fill="#000"><rect x="0" y="2.8" width="5.2" height="1.5"/><rect x="8.1" y="2.8" width="5.2" height="1.5"/><rect x="15.1" y="0" width="2.1" height="2.1"/><rect x="15.1" y="5" width="2.1" height="2.1"/><rect x="19.1" y="2.8" width="5.2" height="1.5"/><rect x="27.1" y="2.8" width="5.2" height="1.5"/></g></svg><div class="a" style="left:488px;top:229px;width:1px;height:26px;background:#aaaaaa"></div><svg class="a" style="left:443.8px;top:238.5px" width="33.0" height="9.0" viewBox="0 0 33 9"><g fill="#000"><rect x="0" y="2.8" width="5.2" height="1.5"/><rect x="8.1" y="2.8" width="5.2" height="1.5"/><rect x="15.1" y="0" width="2.1" height="2.1"/><rect x="15.1" y="5" width="2.1" height="2.1"/><rect x="19.1" y="2.8" width="5.2" height="1.5"/><rect x="27.1" y="2.8" width="5.2" height="1.5"/></g></svg><div class="a" style="left:563px;top:229px;width:1px;height:26px;background:#aaaaaa"></div><svg class="a" style="left:490.0px;top:238.5px" width="33.0" height="9.0" viewBox="0 0 33 9"><g fill="#000"><rect x="0" y="2.8" width="5.2" height="1.5"/><rect x="8.1" y="2.8" width="5.2" height="1.5"/><rect x="15.1" y="0" width="2.1" height="2.1"/><rect x="15.1" y="5" width="2.1" height="2.1"/><rect x="19.1" y="2.8" width="5.2" height="1.5"/><rect x="27.1" y="2.8" width="5.2" height="1.5"/></g></svg><div class="a" style="left:638px;top:229px;width:1px;height:26px;background:#aaaaaa"></div><svg class="a" style="left:584.8px;top:238.5px" width="33.0" height="9.0" viewBox="0 0 33 9"><g fill="#000"><rect x="0" y="2.8" width="5.2" height="1.5"/><rect x="8.1" y="2.8" width="5.2" height="1.5"/><rect x="15.1" y="0" width="2.1" height="2.1"/><rect x="15.1" y="5" width="2.1" height="2.1"/><rect x="19.1" y="2.8" width="5.2" height="1.5"/><rect x="27.1" y="2.8" width="5.2" height="1.5"/></g></svg><div class="a" style="left:713px;top:229px;width:1px;height:26px;background:#aaaaaa"></div><div class="a b" style="left:639px;width:74px;top:234px;text-align:center;font-size:13px;white-space:nowrap">TX</div><div class="a" style="left:788px;top:229px;width:1px;height:26px;background:#aaaaaa"></div><div class="a b" style="left:714px;width:74px;top:234px;text-align:center;font-size:13px;white-space:nowrap">05:50</div><div class="a" style="left:863px;top:229px;width:1px;height:26px;background:#aaaaaa"></div><div class="a b" style="left:789px;width:74px;top:234px;text-align:center;font-size:13px;white-space:nowrap">-11</div><div class="a" style="left:938px;top:229px;width:1px;height:26px;background:#aaaaaa"></div><div class="a b" style="left:864px;width:74px;top:234px;text-align:center;font-size:13px;white-space:nowrap">26L</div><div class="a" style="left:1013px;top:229px;width:1px;height:26px;background:#aaaaaa"></div><div class="a b" style="left:939px;width:74px;top:234px;text-align:center;font-size:13px;white-space:nowrap">SFD</div><div class="a" style="left:1088px;top:229px;width:1px;height:26px;background:#aaaaaa"></div><div class="a b" style="left:1014px;width:74px;top:234px;text-align:center;font-size:13px;white-space:nowrap">05:39</div><div class="a" style="left:1163px;top:229px;width:1px;height:26px;background:#aaaaaa"></div><div class="a b" style="left:1089px;width:74px;top:234px;text-align:center;font-size:13px;white-space:nowrap">05:39</div><div class="a" style="left:1173px;top:229px;width:1px;height:26px;background:#aaaaaa"></div><div class="a" style="left:0;top:255px;width:1173px;height:26px;background:#ffffff;border-bottom:1px solid #aaaaaa"></div><div class="a" style="left:97px;top:255px;width:1px;height:26px;background:#aaaaaa"></div><div class="a" style="left:1px;top:258px;font-size:16.5px;letter-spacing:0.7px;-webkit-text-stroke:0.25px #000;white-space:nowrap">EZY967M</div><div class="a" style="left:146px;top:255px;width:1px;height:26px;background:#aaaaaa"></div><div class="a" style="left:98px;width:48px;top:260px;text-align:center;font-size:13.5px;-webkit-text-stroke:0.45px #000;letter-spacing:0.5px;white-space:nowrap">51L</div><div class="a" style="left:203px;top:255px;width:1px;height:26px;background:#aaaaaa"></div><div class="a b" style="left:147px;width:56px;top:260px;text-align:center;font-size:13px;white-space:nowrap">05:40</div><div class="a" style="left:260px;top:255px;width:1px;height:26px;background:#aaaaaa"></div><div class="a b" style="left:204px;width:56px;top:260px;text-align:center;font-size:13px;white-space:nowrap">05:40</div><div class="a" style="left:261px;top:255px;width:56px;height:25px;background:#f0f0fb"></div><div class="a" style="left:317px;top:255px;width:1px;height:26px;background:#aaaaaa"></div><div class="a b" style="left:261px;width:56px;top:260px;text-align:center;font-size:13px;white-space:nowrap">05:38</div><div class="a" style="left:374px;top:255px;width:1px;height:26px;background:#aaaaaa"></div><div class="a b" style="left:318px;width:56px;top:260px;text-align:center;font-size:13px;white-space:nowrap">05:50</div><div class="a" style="left:431px;top:255px;width:1px;height:26px;background:#aaaaaa"></div><svg class="a" style="left:386.8px;top:264.5px" width="33.0" height="9.0" viewBox="0 0 33 9"><g fill="#000"><rect x="0" y="2.8" width="5.2" height="1.5"/><rect x="8.1" y="2.8" width="5.2" height="1.5"/><rect x="15.1" y="0" width="2.1" height="2.1"/><rect x="15.1" y="5" width="2.1" height="2.1"/><rect x="19.1" y="2.8" width="5.2" height="1.5"/><rect x="27.1" y="2.8" width="5.2" height="1.5"/></g></svg><div class="a" style="left:488px;top:255px;width:1px;height:26px;background:#aaaaaa"></div><svg class="a" style="left:443.8px;top:264.5px" width="33.0" height="9.0" viewBox="0 0 33 9"><g fill="#000"><rect x="0" y="2.8" width="5.2" height="1.5"/><rect x="8.1" y="2.8" width="5.2" height="1.5"/><rect x="15.1" y="0" width="2.1" height="2.1"/><rect x="15.1" y="5" width="2.1" height="2.1"/><rect x="19.1" y="2.8" width="5.2" height="1.5"/><rect x="27.1" y="2.8" width="5.2" height="1.5"/></g></svg><div class="a" style="left:563px;top:255px;width:1px;height:26px;background:#aaaaaa"></div><svg class="a" style="left:490.0px;top:264.5px" width="33.0" height="9.0" viewBox="0 0 33 9"><g fill="#000"><rect x="0" y="2.8" width="5.2" height="1.5"/><rect x="8.1" y="2.8" width="5.2" height="1.5"/><rect x="15.1" y="0" width="2.1" height="2.1"/><rect x="15.1" y="5" width="2.1" height="2.1"/><rect x="19.1" y="2.8" width="5.2" height="1.5"/><rect x="27.1" y="2.8" width="5.2" height="1.5"/></g></svg><div class="a" style="left:638px;top:255px;width:1px;height:26px;background:#aaaaaa"></div><svg class="a" style="left:584.8px;top:264.5px" width="33.0" height="9.0" viewBox="0 0 33 9"><g fill="#000"><rect x="0" y="2.8" width="5.2" height="1.5"/><rect x="8.1" y="2.8" width="5.2" height="1.5"/><rect x="15.1" y="0" width="2.1" height="2.1"/><rect x="15.1" y="5" width="2.1" height="2.1"/><rect x="19.1" y="2.8" width="5.2" height="1.5"/><rect x="27.1" y="2.8" width="5.2" height="1.5"/></g></svg><div class="a" style="left:713px;top:255px;width:1px;height:26px;background:#aaaaaa"></div><div class="a b" style="left:639px;width:74px;top:260px;text-align:center;font-size:13px;white-space:nowrap">TX</div><div class="a" style="left:788px;top:255px;width:1px;height:26px;background:#aaaaaa"></div><div class="a b" style="left:714px;width:74px;top:260px;text-align:center;font-size:13px;white-space:nowrap">05:40</div><div class="a" style="left:863px;top:255px;width:1px;height:26px;background:#aaaaaa"></div><div class="a b" style="left:789px;width:74px;top:260px;text-align:center;font-size:13px;white-space:nowrap">-2</div><div class="a" style="left:938px;top:255px;width:1px;height:26px;background:#aaaaaa"></div><div class="a b" style="left:864px;width:74px;top:260px;text-align:center;font-size:13px;white-space:nowrap">26L</div><div class="a" style="left:1013px;top:255px;width:1px;height:26px;background:#aaaaaa"></div><div class="a b" style="left:939px;width:74px;top:260px;text-align:center;font-size:13px;white-space:nowrap">ADM</div><div class="a" style="left:1088px;top:255px;width:1px;height:26px;background:#aaaaaa"></div><div class="a b" style="left:1014px;width:74px;top:260px;text-align:center;font-size:13px;white-space:nowrap">05:38</div><div class="a" style="left:1163px;top:255px;width:1px;height:26px;background:#aaaaaa"></div><div class="a b" style="left:1089px;width:74px;top:260px;text-align:center;font-size:13px;white-space:nowrap">05:38</div><div class="a" style="left:1173px;top:255px;width:1px;height:26px;background:#aaaaaa"></div><div class="a" style="left:0;top:281px;width:1173px;height:26px;background:#e4e4e4;border-bottom:1px solid #aaaaaa"></div><div class="a" style="left:97px;top:281px;width:1px;height:26px;background:#aaaaaa"></div><div class="a" style="left:1px;top:284px;font-size:16.5px;letter-spacing:0.7px;-webkit-text-stroke:0.25px #000;white-space:nowrap">IBK2828</div><div class="a" style="left:146px;top:281px;width:1px;height:26px;background:#aaaaaa"></div><div class="a" style="left:98px;width:48px;top:286px;text-align:center;font-size:13.5px;-webkit-text-stroke:0.45px #000;letter-spacing:0.5px;white-space:nowrap">145M</div><div class="a" style="left:203px;top:281px;width:1px;height:26px;background:#aaaaaa"></div><div class="a b" style="left:147px;width:56px;top:286px;text-align:center;font-size:13px;white-space:nowrap">08:35</div><div class="a" style="left:260px;top:281px;width:1px;height:26px;background:#aaaaaa"></div><div class="a b" style="left:204px;width:56px;top:286px;text-align:center;font-size:13px;white-space:nowrap">08:35</div><div class="a" style="left:261px;top:281px;width:56px;height:25px;background:#ebebf5"></div><div class="a" style="left:317px;top:281px;width:1px;height:26px;background:#aaaaaa"></div><svg class="a" style="left:272.8px;top:290.5px" width="33.0" height="9.0" viewBox="0 0 33 9"><g fill="#000"><rect x="0" y="2.8" width="5.2" height="1.5"/><rect x="8.1" y="2.8" width="5.2" height="1.5"/><rect x="15.1" y="0" width="2.1" height="2.1"/><rect x="15.1" y="5" width="2.1" height="2.1"/><rect x="19.1" y="2.8" width="5.2" height="1.5"/><rect x="27.1" y="2.8" width="5.2" height="1.5"/></g></svg><div class="a" style="left:374px;top:281px;width:1px;height:26px;background:#aaaaaa"></div><svg class="a" style="left:329.8px;top:290.5px" width="33.0" height="9.0" viewBox="0 0 33 9"><g fill="#000"><rect x="0" y="2.8" width="5.2" height="1.5"/><rect x="8.1" y="2.8" width="5.2" height="1.5"/><rect x="15.1" y="0" width="2.1" height="2.1"/><rect x="15.1" y="5" width="2.1" height="2.1"/><rect x="19.1" y="2.8" width="5.2" height="1.5"/><rect x="27.1" y="2.8" width="5.2" height="1.5"/></g></svg><div class="a" style="left:431px;top:281px;width:1px;height:26px;background:#aaaaaa"></div><svg class="a" style="left:386.8px;top:290.5px" width="33.0" height="9.0" viewBox="0 0 33 9"><g fill="#000"><rect x="0" y="2.8" width="5.2" height="1.5"/><rect x="8.1" y="2.8" width="5.2" height="1.5"/><rect x="15.1" y="0" width="2.1" height="2.1"/><rect x="15.1" y="5" width="2.1" height="2.1"/><rect x="19.1" y="2.8" width="5.2" height="1.5"/><rect x="27.1" y="2.8" width="5.2" height="1.5"/></g></svg><div class="a" style="left:488px;top:281px;width:1px;height:26px;background:#aaaaaa"></div><svg class="a" style="left:443.8px;top:290.5px" width="33.0" height="9.0" viewBox="0 0 33 9"><g fill="#000"><rect x="0" y="2.8" width="5.2" height="1.5"/><rect x="8.1" y="2.8" width="5.2" height="1.5"/><rect x="15.1" y="0" width="2.1" height="2.1"/><rect x="15.1" y="5" width="2.1" height="2.1"/><rect x="19.1" y="2.8" width="5.2" height="1.5"/><rect x="27.1" y="2.8" width="5.2" height="1.5"/></g></svg><div class="a" style="left:563px;top:281px;width:1px;height:26px;background:#aaaaaa"></div><svg class="a" style="left:490.0px;top:290.5px" width="33.0" height="9.0" viewBox="0 0 33 9"><g fill="#000"><rect x="0" y="2.8" width="5.2" height="1.5"/><rect x="8.1" y="2.8" width="5.2" height="1.5"/><rect x="15.1" y="0" width="2.1" height="2.1"/><rect x="15.1" y="5" width="2.1" height="2.1"/><rect x="19.1" y="2.8" width="5.2" height="1.5"/><rect x="27.1" y="2.8" width="5.2" height="1.5"/></g></svg><div class="a" style="left:638px;top:281px;width:1px;height:26px;background:#aaaaaa"></div><svg class="a" style="left:584.8px;top:290.5px" width="33.0" height="9.0" viewBox="0 0 33 9"><g fill="#000"><rect x="0" y="2.8" width="5.2" height="1.5"/><rect x="8.1" y="2.8" width="5.2" height="1.5"/><rect x="15.1" y="0" width="2.1" height="2.1"/><rect x="15.1" y="5" width="2.1" height="2.1"/><rect x="19.1" y="2.8" width="5.2" height="1.5"/><rect x="27.1" y="2.8" width="5.2" height="1.5"/></g></svg><div class="a" style="left:713px;top:281px;width:1px;height:26px;background:#aaaaaa"></div><div class="a b" style="left:639px;width:74px;top:286px;text-align:center;font-size:13px;white-space:nowrap">INT</div><div class="a" style="left:788px;top:281px;width:1px;height:26px;background:#aaaaaa"></div><div class="a b" style="left:714px;width:74px;top:286px;text-align:center;font-size:13px;white-space:nowrap">08:35</div><div class="a" style="left:863px;top:281px;width:1px;height:26px;background:#aaaaaa"></div><div class="a b" style="left:789px;width:74px;top:286px;text-align:center;font-size:13px;white-space:nowrap">n.a</div><div class="a" style="left:938px;top:281px;width:1px;height:26px;background:#aaaaaa"></div><svg class="a" style="left:884.8px;top:290.5px" width="33.0" height="9.0" viewBox="0 0 33 9"><g fill="#000"><rect x="0" y="2.8" width="5.2" height="1.5"/><rect x="8.1" y="2.8" width="5.2" height="1.5"/><rect x="15.1" y="0" width="2.1" height="2.1"/><rect x="15.1" y="5" width="2.1" height="2.1"/><rect x="19.1" y="2.8" width="5.2" height="1.5"/><rect x="27.1" y="2.8" width="5.2" height="1.5"/></g></svg><div class="a" style="left:1013px;top:281px;width:1px;height:26px;background:#aaaaaa"></div><svg class="a" style="left:959.8px;top:290.5px" width="33.0" height="9.0" viewBox="0 0 33 9"><g fill="#000"><rect x="0" y="2.8" width="5.2" height="1.5"/><rect x="8.1" y="2.8" width="5.2" height="1.5"/><rect x="15.1" y="0" width="2.1" height="2.1"/><rect x="15.1" y="5" width="2.1" height="2.1"/><rect x="19.1" y="2.8" width="5.2" height="1.5"/><rect x="27.1" y="2.8" width="5.2" height="1.5"/></g></svg><div class="a" style="left:1088px;top:281px;width:1px;height:26px;background:#aaaaaa"></div><svg class="a" style="left:1034.8px;top:290.5px" width="33.0" height="9.0" viewBox="0 0 33 9"><g fill="#000"><rect x="0" y="2.8" width="5.2" height="1.5"/><rect x="8.1" y="2.8" width="5.2" height="1.5"/><rect x="15.1" y="0" width="2.1" height="2.1"/><rect x="15.1" y="5" width="2.1" height="2.1"/><rect x="19.1" y="2.8" width="5.2" height="1.5"/><rect x="27.1" y="2.8" width="5.2" height="1.5"/></g></svg><div class="a" style="left:1163px;top:281px;width:1px;height:26px;background:#aaaaaa"></div><svg class="a" style="left:1109.8px;top:290.5px" width="33.0" height="9.0" viewBox="0 0 33 9"><g fill="#000"><rect x="0" y="2.8" width="5.2" height="1.5"/><rect x="8.1" y="2.8" width="5.2" height="1.5"/><rect x="15.1" y="0" width="2.1" height="2.1"/><rect x="15.1" y="5" width="2.1" height="2.1"/><rect x="19.1" y="2.8" width="5.2" height="1.5"/><rect x="27.1" y="2.8" width="5.2" height="1.5"/></g></svg><div class="a" style="left:1173px;top:281px;width:1px;height:26px;background:#aaaaaa"></div><div class="a" style="left:0;top:307px;width:1173px;height:26px;background:#ffffff;border-bottom:1px solid #aaaaaa"></div><div class="a" style="left:97px;top:307px;width:1px;height:26px;background:#aaaaaa"></div><div class="a" style="left:1px;top:310px;font-size:16.5px;letter-spacing:0.7px;-webkit-text-stroke:0.25px #000;white-space:nowrap">EZY78AJ</div><div class="a" style="left:146px;top:307px;width:1px;height:26px;background:#aaaaaa"></div><div class="a" style="left:98px;width:48px;top:312px;text-align:center;font-size:13.5px;-webkit-text-stroke:0.45px #000;letter-spacing:0.5px;white-space:nowrap">174M</div><div class="a" style="left:203px;top:307px;width:1px;height:26px;background:#aaaaaa"></div><div class="a b" style="left:147px;width:56px;top:312px;text-align:center;font-size:13px;white-space:nowrap">07:00</div><div class="a" style="left:260px;top:307px;width:1px;height:26px;background:#aaaaaa"></div><div class="a b" style="left:204px;width:56px;top:312px;text-align:center;font-size:13px;white-space:nowrap">07:00</div><div class="a" style="left:261px;top:307px;width:56px;height:25px;background:#f0f0fb"></div><div class="a" style="left:317px;top:307px;width:1px;height:26px;background:#aaaaaa"></div><svg class="a" style="left:272.8px;top:316.5px" width="33.0" height="9.0" viewBox="0 0 33 9"><g fill="#000"><rect x="0" y="2.8" width="5.2" height="1.5"/><rect x="8.1" y="2.8" width="5.2" height="1.5"/><rect x="15.1" y="0" width="2.1" height="2.1"/><rect x="15.1" y="5" width="2.1" height="2.1"/><rect x="19.1" y="2.8" width="5.2" height="1.5"/><rect x="27.1" y="2.8" width="5.2" height="1.5"/></g></svg><div class="a" style="left:374px;top:307px;width:1px;height:26px;background:#aaaaaa"></div><svg class="a" style="left:329.8px;top:316.5px" width="33.0" height="9.0" viewBox="0 0 33 9"><g fill="#000"><rect x="0" y="2.8" width="5.2" height="1.5"/><rect x="8.1" y="2.8" width="5.2" height="1.5"/><rect x="15.1" y="0" width="2.1" height="2.1"/><rect x="15.1" y="5" width="2.1" height="2.1"/><rect x="19.1" y="2.8" width="5.2" height="1.5"/><rect x="27.1" y="2.8" width="5.2" height="1.5"/></g></svg><div class="a" style="left:431px;top:307px;width:1px;height:26px;background:#aaaaaa"></div><div class="a b" style="left:375px;width:56px;top:312px;text-align:center;font-size:13px;white-space:nowrap">08:01</div><div class="a" style="left:488px;top:307px;width:1px;height:26px;background:#aaaaaa"></div><svg class="a" style="left:443.8px;top:316.5px" width="33.0" height="9.0" viewBox="0 0 33 9"><g fill="#000"><rect x="0" y="2.8" width="5.2" height="1.5"/><rect x="8.1" y="2.8" width="5.2" height="1.5"/><rect x="15.1" y="0" width="2.1" height="2.1"/><rect x="15.1" y="5" width="2.1" height="2.1"/><rect x="19.1" y="2.8" width="5.2" height="1.5"/><rect x="27.1" y="2.8" width="5.2" height="1.5"/></g></svg><div class="a" style="left:563px;top:307px;width:1px;height:26px;background:#aaaaaa"></div><svg class="a" style="left:490.0px;top:316.5px" width="33.0" height="9.0" viewBox="0 0 33 9"><g fill="#000"><rect x="0" y="2.8" width="5.2" height="1.5"/><rect x="8.1" y="2.8" width="5.2" height="1.5"/><rect x="15.1" y="0" width="2.1" height="2.1"/><rect x="15.1" y="5" width="2.1" height="2.1"/><rect x="19.1" y="2.8" width="5.2" height="1.5"/><rect x="27.1" y="2.8" width="5.2" height="1.5"/></g></svg><div class="a" style="left:638px;top:307px;width:1px;height:26px;background:#aaaaaa"></div><svg class="a" style="left:584.8px;top:316.5px" width="33.0" height="9.0" viewBox="0 0 33 9"><g fill="#000"><rect x="0" y="2.8" width="5.2" height="1.5"/><rect x="8.1" y="2.8" width="5.2" height="1.5"/><rect x="15.1" y="0" width="2.1" height="2.1"/><rect x="15.1" y="5" width="2.1" height="2.1"/><rect x="19.1" y="2.8" width="5.2" height="1.5"/><rect x="27.1" y="2.8" width="5.2" height="1.5"/></g></svg><div class="a" style="left:713px;top:307px;width:1px;height:26px;background:#aaaaaa"></div><div class="a b" style="left:639px;width:74px;top:312px;text-align:center;font-size:13px;white-space:nowrap">INT</div><div class="a" style="left:788px;top:307px;width:1px;height:26px;background:#aaaaaa"></div><div class="a b" style="left:714px;width:74px;top:312px;text-align:center;font-size:13px;white-space:nowrap">07:00</div><div class="a" style="left:863px;top:307px;width:1px;height:26px;background:#aaaaaa"></div><div class="a b" style="left:789px;width:74px;top:312px;text-align:center;font-size:13px;white-space:nowrap">n.a</div><div class="a" style="left:938px;top:307px;width:1px;height:26px;background:#aaaaaa"></div><svg class="a" style="left:884.8px;top:316.5px" width="33.0" height="9.0" viewBox="0 0 33 9"><g fill="#000"><rect x="0" y="2.8" width="5.2" height="1.5"/><rect x="8.1" y="2.8" width="5.2" height="1.5"/><rect x="15.1" y="0" width="2.1" height="2.1"/><rect x="15.1" y="5" width="2.1" height="2.1"/><rect x="19.1" y="2.8" width="5.2" height="1.5"/><rect x="27.1" y="2.8" width="5.2" height="1.5"/></g></svg><div class="a" style="left:1013px;top:307px;width:1px;height:26px;background:#aaaaaa"></div><svg class="a" style="left:959.8px;top:316.5px" width="33.0" height="9.0" viewBox="0 0 33 9"><g fill="#000"><rect x="0" y="2.8" width="5.2" height="1.5"/><rect x="8.1" y="2.8" width="5.2" height="1.5"/><rect x="15.1" y="0" width="2.1" height="2.1"/><rect x="15.1" y="5" width="2.1" height="2.1"/><rect x="19.1" y="2.8" width="5.2" height="1.5"/><rect x="27.1" y="2.8" width="5.2" height="1.5"/></g></svg><div class="a" style="left:1088px;top:307px;width:1px;height:26px;background:#aaaaaa"></div><svg class="a" style="left:1034.8px;top:316.5px" width="33.0" height="9.0" viewBox="0 0 33 9"><g fill="#000"><rect x="0" y="2.8" width="5.2" height="1.5"/><rect x="8.1" y="2.8" width="5.2" height="1.5"/><rect x="15.1" y="0" width="2.1" height="2.1"/><rect x="15.1" y="5" width="2.1" height="2.1"/><rect x="19.1" y="2.8" width="5.2" height="1.5"/><rect x="27.1" y="2.8" width="5.2" height="1.5"/></g></svg><div class="a" style="left:1163px;top:307px;width:1px;height:26px;background:#aaaaaa"></div><svg class="a" style="left:1109.8px;top:316.5px" width="33.0" height="9.0" viewBox="0 0 33 9"><g fill="#000"><rect x="0" y="2.8" width="5.2" height="1.5"/><rect x="8.1" y="2.8" width="5.2" height="1.5"/><rect x="15.1" y="0" width="2.1" height="2.1"/><rect x="15.1" y="5" width="2.1" height="2.1"/><rect x="19.1" y="2.8" width="5.2" height="1.5"/><rect x="27.1" y="2.8" width="5.2" height="1.5"/></g></svg><div class="a" style="left:1173px;top:307px;width:1px;height:26px;background:#aaaaaa"></div><div class="a" style="left:0;top:333px;width:1173px;height:26px;background:#e4e4e4;border-bottom:1px solid #aaaaaa"></div><div class="a" style="left:97px;top:333px;width:1px;height:26px;background:#aaaaaa"></div><div class="a" style="left:1px;top:336px;font-size:16.5px;letter-spacing:0.7px;-webkit-text-stroke:0.25px #000;white-space:nowrap">AWC145</div><div class="a" style="left:146px;top:333px;width:1px;height:26px;background:#aaaaaa"></div><div class="a" style="left:98px;width:48px;top:338px;text-align:center;font-size:13.5px;-webkit-text-stroke:0.45px #000;letter-spacing:0.5px;white-space:nowrap">25M</div><div class="a" style="left:203px;top:333px;width:1px;height:26px;background:#aaaaaa"></div><div class="a b" style="left:147px;width:56px;top:338px;text-align:center;font-size:13px;white-space:nowrap">06:50</div><div class="a" style="left:260px;top:333px;width:1px;height:26px;background:#aaaaaa"></div><div class="a b" style="left:204px;width:56px;top:338px;text-align:center;font-size:13px;white-space:nowrap">06:50</div><div class="a" style="left:261px;top:333px;width:56px;height:25px;background:#ebebf5"></div><div class="a" style="left:317px;top:333px;width:1px;height:26px;background:#aaaaaa"></div><svg class="a" style="left:272.8px;top:342.5px" width="33.0" height="9.0" viewBox="0 0 33 9"><g fill="#000"><rect x="0" y="2.8" width="5.2" height="1.5"/><rect x="8.1" y="2.8" width="5.2" height="1.5"/><rect x="15.1" y="0" width="2.1" height="2.1"/><rect x="15.1" y="5" width="2.1" height="2.1"/><rect x="19.1" y="2.8" width="5.2" height="1.5"/><rect x="27.1" y="2.8" width="5.2" height="1.5"/></g></svg><div class="a" style="left:374px;top:333px;width:1px;height:26px;background:#aaaaaa"></div><svg class="a" style="left:329.8px;top:342.5px" width="33.0" height="9.0" viewBox="0 0 33 9"><g fill="#000"><rect x="0" y="2.8" width="5.2" height="1.5"/><rect x="8.1" y="2.8" width="5.2" height="1.5"/><rect x="15.1" y="0" width="2.1" height="2.1"/><rect x="15.1" y="5" width="2.1" height="2.1"/><rect x="19.1" y="2.8" width="5.2" height="1.5"/><rect x="27.1" y="2.8" width="5.2" height="1.5"/></g></svg><div class="a" style="left:431px;top:333px;width:1px;height:26px;background:#aaaaaa"></div><svg class="a" style="left:386.8px;top:342.5px" width="33.0" height="9.0" viewBox="0 0 33 9"><g fill="#000"><rect x="0" y="2.8" width="5.2" height="1.5"/><rect x="8.1" y="2.8" width="5.2" height="1.5"/><rect x="15.1" y="0" width="2.1" height="2.1"/><rect x="15.1" y="5" width="2.1" height="2.1"/><rect x="19.1" y="2.8" width="5.2" height="1.5"/><rect x="27.1" y="2.8" width="5.2" height="1.5"/></g></svg><div class="a" style="left:488px;top:333px;width:1px;height:26px;background:#aaaaaa"></div><svg class="a" style="left:443.8px;top:342.5px" width="33.0" height="9.0" viewBox="0 0 33 9"><g fill="#000"><rect x="0" y="2.8" width="5.2" height="1.5"/><rect x="8.1" y="2.8" width="5.2" height="1.5"/><rect x="15.1" y="0" width="2.1" height="2.1"/><rect x="15.1" y="5" width="2.1" height="2.1"/><rect x="19.1" y="2.8" width="5.2" height="1.5"/><rect x="27.1" y="2.8" width="5.2" height="1.5"/></g></svg><div class="a" style="left:563px;top:333px;width:1px;height:26px;background:#aaaaaa"></div><svg class="a" style="left:490.0px;top:342.5px" width="33.0" height="9.0" viewBox="0 0 33 9"><g fill="#000"><rect x="0" y="2.8" width="5.2" height="1.5"/><rect x="8.1" y="2.8" width="5.2" height="1.5"/><rect x="15.1" y="0" width="2.1" height="2.1"/><rect x="15.1" y="5" width="2.1" height="2.1"/><rect x="19.1" y="2.8" width="5.2" height="1.5"/><rect x="27.1" y="2.8" width="5.2" height="1.5"/></g></svg><div class="a" style="left:638px;top:333px;width:1px;height:26px;background:#aaaaaa"></div><svg class="a" style="left:584.8px;top:342.5px" width="33.0" height="9.0" viewBox="0 0 33 9"><g fill="#000"><rect x="0" y="2.8" width="5.2" height="1.5"/><rect x="8.1" y="2.8" width="5.2" height="1.5"/><rect x="15.1" y="0" width="2.1" height="2.1"/><rect x="15.1" y="5" width="2.1" height="2.1"/><rect x="19.1" y="2.8" width="5.2" height="1.5"/><rect x="27.1" y="2.8" width="5.2" height="1.5"/></g></svg><div class="a" style="left:713px;top:333px;width:1px;height:26px;background:#aaaaaa"></div><div class="a b" style="left:639px;width:74px;top:338px;text-align:center;font-size:13px;white-space:nowrap">INT</div><div class="a" style="left:788px;top:333px;width:1px;height:26px;background:#aaaaaa"></div><div class="a b" style="left:714px;width:74px;top:338px;text-align:center;font-size:13px;white-space:nowrap">06:50</div><div class="a" style="left:863px;top:333px;width:1px;height:26px;background:#aaaaaa"></div><div class="a b" style="left:789px;width:74px;top:338px;text-align:center;font-size:13px;white-space:nowrap">n.a</div><div class="a" style="left:938px;top:333px;width:1px;height:26px;background:#aaaaaa"></div><svg class="a" style="left:884.8px;top:342.5px" width="33.0" height="9.0" viewBox="0 0 33 9"><g fill="#000"><rect x="0" y="2.8" width="5.2" height="1.5"/><rect x="8.1" y="2.8" width="5.2" height="1.5"/><rect x="15.1" y="0" width="2.1" height="2.1"/><rect x="15.1" y="5" width="2.1" height="2.1"/><rect x="19.1" y="2.8" width="5.2" height="1.5"/><rect x="27.1" y="2.8" width="5.2" height="1.5"/></g></svg><div class="a" style="left:1013px;top:333px;width:1px;height:26px;background:#aaaaaa"></div><svg class="a" style="left:959.8px;top:342.5px" width="33.0" height="9.0" viewBox="0 0 33 9"><g fill="#000"><rect x="0" y="2.8" width="5.2" height="1.5"/><rect x="8.1" y="2.8" width="5.2" height="1.5"/><rect x="15.1" y="0" width="2.1" height="2.1"/><rect x="15.1" y="5" width="2.1" height="2.1"/><rect x="19.1" y="2.8" width="5.2" height="1.5"/><rect x="27.1" y="2.8" width="5.2" height="1.5"/></g></svg><div class="a" style="left:1088px;top:333px;width:1px;height:26px;background:#aaaaaa"></div><svg class="a" style="left:1034.8px;top:342.5px" width="33.0" height="9.0" viewBox="0 0 33 9"><g fill="#000"><rect x="0" y="2.8" width="5.2" height="1.5"/><rect x="8.1" y="2.8" width="5.2" height="1.5"/><rect x="15.1" y="0" width="2.1" height="2.1"/><rect x="15.1" y="5" width="2.1" height="2.1"/><rect x="19.1" y="2.8" width="5.2" height="1.5"/><rect x="27.1" y="2.8" width="5.2" height="1.5"/></g></svg><div class="a" style="left:1163px;top:333px;width:1px;height:26px;background:#aaaaaa"></div><svg class="a" style="left:1109.8px;top:342.5px" width="33.0" height="9.0" viewBox="0 0 33 9"><g fill="#000"><rect x="0" y="2.8" width="5.2" height="1.5"/><rect x="8.1" y="2.8" width="5.2" height="1.5"/><rect x="15.1" y="0" width="2.1" height="2.1"/><rect x="15.1" y="5" width="2.1" height="2.1"/><rect x="19.1" y="2.8" width="5.2" height="1.5"/><rect x="27.1" y="2.8" width="5.2" height="1.5"/></g></svg><div class="a" style="left:1173px;top:333px;width:1px;height:26px;background:#aaaaaa"></div><div class="a" style="left:0;top:359px;width:1173px;height:26px;background:#ffffff;border-bottom:1px solid #aaaaaa"></div><div class="a" style="left:97px;top:359px;width:1px;height:26px;background:#aaaaaa"></div><div class="a" style="left:1px;top:362px;font-size:16.5px;letter-spacing:0.7px;-webkit-text-stroke:0.25px #000;white-space:nowrap">BAW57T</div><div class="a" style="left:146px;top:359px;width:1px;height:26px;background:#aaaaaa"></div><div class="a" style="left:98px;width:48px;top:364px;text-align:center;font-size:13.5px;-webkit-text-stroke:0.45px #000;letter-spacing:0.5px;white-space:nowrap">38M</div><div class="a" style="left:203px;top:359px;width:1px;height:26px;background:#aaaaaa"></div><div class="a b" style="left:147px;width:56px;top:364px;text-align:center;font-size:13px;white-space:nowrap">06:40</div><div class="a" style="left:260px;top:359px;width:1px;height:26px;background:#aaaaaa"></div><div class="a b" style="left:204px;width:56px;top:364px;text-align:center;font-size:13px;white-space:nowrap">06:40</div><div class="a" style="left:261px;top:359px;width:56px;height:25px;background:#f0f0fb"></div><div class="a" style="left:317px;top:359px;width:1px;height:26px;background:#aaaaaa"></div><svg class="a" style="left:272.8px;top:368.5px" width="33.0" height="9.0" viewBox="0 0 33 9"><g fill="#000"><rect x="0" y="2.8" width="5.2" height="1.5"/><rect x="8.1" y="2.8" width="5.2" height="1.5"/><rect x="15.1" y="0" width="2.1" height="2.1"/><rect x="15.1" y="5" width="2.1" height="2.1"/><rect x="19.1" y="2.8" width="5.2" height="1.5"/><rect x="27.1" y="2.8" width="5.2" height="1.5"/></g></svg><div class="a" style="left:374px;top:359px;width:1px;height:26px;background:#aaaaaa"></div><svg class="a" style="left:329.8px;top:368.5px" width="33.0" height="9.0" viewBox="0 0 33 9"><g fill="#000"><rect x="0" y="2.8" width="5.2" height="1.5"/><rect x="8.1" y="2.8" width="5.2" height="1.5"/><rect x="15.1" y="0" width="2.1" height="2.1"/><rect x="15.1" y="5" width="2.1" height="2.1"/><rect x="19.1" y="2.8" width="5.2" height="1.5"/><rect x="27.1" y="2.8" width="5.2" height="1.5"/></g></svg><div class="a" style="left:431px;top:359px;width:1px;height:26px;background:#aaaaaa"></div><div class="a b" style="left:375px;width:56px;top:364px;text-align:center;font-size:13px;white-space:nowrap">07:30</div><div class="a" style="left:488px;top:359px;width:1px;height:26px;background:#aaaaaa"></div><svg class="a" style="left:443.8px;top:368.5px" width="33.0" height="9.0" viewBox="0 0 33 9"><g fill="#000"><rect x="0" y="2.8" width="5.2" height="1.5"/><rect x="8.1" y="2.8" width="5.2" height="1.5"/><rect x="15.1" y="0" width="2.1" height="2.1"/><rect x="15.1" y="5" width="2.1" height="2.1"/><rect x="19.1" y="2.8" width="5.2" height="1.5"/><rect x="27.1" y="2.8" width="5.2" height="1.5"/></g></svg><div class="a" style="left:563px;top:359px;width:1px;height:26px;background:#aaaaaa"></div><svg class="a" style="left:490.0px;top:368.5px" width="33.0" height="9.0" viewBox="0 0 33 9"><g fill="#000"><rect x="0" y="2.8" width="5.2" height="1.5"/><rect x="8.1" y="2.8" width="5.2" height="1.5"/><rect x="15.1" y="0" width="2.1" height="2.1"/><rect x="15.1" y="5" width="2.1" height="2.1"/><rect x="19.1" y="2.8" width="5.2" height="1.5"/><rect x="27.1" y="2.8" width="5.2" height="1.5"/></g></svg><div class="a" style="left:638px;top:359px;width:1px;height:26px;background:#aaaaaa"></div><svg class="a" style="left:584.8px;top:368.5px" width="33.0" height="9.0" viewBox="0 0 33 9"><g fill="#000"><rect x="0" y="2.8" width="5.2" height="1.5"/><rect x="8.1" y="2.8" width="5.2" height="1.5"/><rect x="15.1" y="0" width="2.1" height="2.1"/><rect x="15.1" y="5" width="2.1" height="2.1"/><rect x="19.1" y="2.8" width="5.2" height="1.5"/><rect x="27.1" y="2.8" width="5.2" height="1.5"/></g></svg><div class="a" style="left:713px;top:359px;width:1px;height:26px;background:#aaaaaa"></div><div class="a b" style="left:639px;width:74px;top:364px;text-align:center;font-size:13px;white-space:nowrap">INT</div><div class="a" style="left:788px;top:359px;width:1px;height:26px;background:#aaaaaa"></div><div class="a b" style="left:714px;width:74px;top:364px;text-align:center;font-size:13px;white-space:nowrap">06:40</div><div class="a" style="left:863px;top:359px;width:1px;height:26px;background:#aaaaaa"></div><div class="a b" style="left:789px;width:74px;top:364px;text-align:center;font-size:13px;white-space:nowrap">n.a</div><div class="a" style="left:938px;top:359px;width:1px;height:26px;background:#aaaaaa"></div><svg class="a" style="left:884.8px;top:368.5px" width="33.0" height="9.0" viewBox="0 0 33 9"><g fill="#000"><rect x="0" y="2.8" width="5.2" height="1.5"/><rect x="8.1" y="2.8" width="5.2" height="1.5"/><rect x="15.1" y="0" width="2.1" height="2.1"/><rect x="15.1" y="5" width="2.1" height="2.1"/><rect x="19.1" y="2.8" width="5.2" height="1.5"/><rect x="27.1" y="2.8" width="5.2" height="1.5"/></g></svg><div class="a" style="left:1013px;top:359px;width:1px;height:26px;background:#aaaaaa"></div><svg class="a" style="left:959.8px;top:368.5px" width="33.0" height="9.0" viewBox="0 0 33 9"><g fill="#000"><rect x="0" y="2.8" width="5.2" height="1.5"/><rect x="8.1" y="2.8" width="5.2" height="1.5"/><rect x="15.1" y="0" width="2.1" height="2.1"/><rect x="15.1" y="5" width="2.1" height="2.1"/><rect x="19.1" y="2.8" width="5.2" height="1.5"/><rect x="27.1" y="2.8" width="5.2" height="1.5"/></g></svg><div class="a" style="left:1088px;top:359px;width:1px;height:26px;background:#aaaaaa"></div><svg class="a" style="left:1034.8px;top:368.5px" width="33.0" height="9.0" viewBox="0 0 33 9"><g fill="#000"><rect x="0" y="2.8" width="5.2" height="1.5"/><rect x="8.1" y="2.8" width="5.2" height="1.5"/><rect x="15.1" y="0" width="2.1" height="2.1"/><rect x="15.1" y="5" width="2.1" height="2.1"/><rect x="19.1" y="2.8" width="5.2" height="1.5"/><rect x="27.1" y="2.8" width="5.2" height="1.5"/></g></svg><div class="a" style="left:1163px;top:359px;width:1px;height:26px;background:#aaaaaa"></div><svg class="a" style="left:1109.8px;top:368.5px" width="33.0" height="9.0" viewBox="0 0 33 9"><g fill="#000"><rect x="0" y="2.8" width="5.2" height="1.5"/><rect x="8.1" y="2.8" width="5.2" height="1.5"/><rect x="15.1" y="0" width="2.1" height="2.1"/><rect x="15.1" y="5" width="2.1" height="2.1"/><rect x="19.1" y="2.8" width="5.2" height="1.5"/><rect x="27.1" y="2.8" width="5.2" height="1.5"/></g></svg><div class="a" style="left:1173px;top:359px;width:1px;height:26px;background:#aaaaaa"></div></div>
<div class="a" style="left:1901px;top:469px;width:18px;height:376px;background:linear-gradient(90deg,#dedede,#f8f8f8);border-left:1px solid #c0c0c0"></div>
<div class="a" style="left:1901px;top:489px;width:18px;height:1px;background:#c0c0c0"></div>
<div class="a" style="left:1902px;top:544px;width:16px;height:41px;background:linear-gradient(90deg,#9fb3cf,#b2c4dc 40%,#bfd0e6);border:1px solid #8ea4c2"></div>
<div class="a" style="left:1906px;top:562px;width:8px;height:6px;background:repeating-linear-gradient(#7e94b2 0 1px,transparent 1px 2px)"></div>
<div class="a" style="left:1902px;top:812px;width:16px;height:15px;background:linear-gradient(90deg,#e0e0e0,#fafafa);border:1px solid #d0d0d0"></div>
<div class="a" style="left:1902px;top:827px;width:16px;height:15px;background:linear-gradient(90deg,#e0e0e0,#fafafa);border:1px solid #d0d0d0"></div>
<div class="a" style="left:1905px;top:816px;width:0;height:0;border-left:5px solid transparent;border-right:5px solid transparent;border-bottom:5px solid #222"></div>
<div class="a" style="left:1905px;top:832px;width:0;height:0;border-left:5px solid transparent;border-right:5px solid transparent;border-top:5px solid #222"></div>
<div class="a" style="left:728px;top:845px;width:98px;height:17px;background:#ececec;border-top:1px solid #c8c8c8"></div>
<div class="a" style="left:826px;top:845px;width:921px;height:17px;background:linear-gradient(#c4d4e8,#93a9c6 30%,#a6b9d2 70%,#bccfe6);border:1px solid #a8bcd6"></div>
<div class="a" style="left:1283px;top:849px;width:9px;height:9px;background:repeating-linear-gradient(90deg,#e6eef8 0 1px,#8aa0bc 1px 2px)"></div>
<div class="a" style="left:1747px;top:845px;width:154px;height:17px;background:#f6f6f6;border-top:1px solid #d0d0d0"></div>
<div class="a" style="left:728px;top:862px;width:1192px;height:1px;background:#a8a8a8"></div>
<div class="a" style="left:1869px;top:846px;width:16px;height:16px;background:#f0f0f0;border:1px solid #d8d8d8"></div>
<div class="a" style="left:1885px;top:846px;width:16px;height:16px;background:#f0f0f0;border:1px solid #d8d8d8"></div>
<div class="a" style="left:1874px;top:849px;width:0;height:0;border-top:5px solid transparent;border-bottom:5px solid transparent;border-right:5px solid #111"></div>
<div class="a" style="left:1891px;top:849px;width:0;height:0;border-top:5px solid transparent;border-bottom:5px solid transparent;border-left:5px solid #111"></div>
<div class="a" style="left:727px;top:870px;width:137px;height:21px;background:#ffffff;border:1px solid #8e9aa8;border-bottom:none;clip-path:polygon(6px 0,100% 0,100% 100%,0 100%,0 6px)"></div><svg class="a" style="left:727px;top:870px" width="8" height="8" viewBox="0 0 8 8"><line x1="0.5" y1="6.5" x2="6.5" y2="0.5" stroke="#8e9aa8" stroke-width="1.1"/></svg><div class="a" style="left:733px;top:876px;width:1px;height:1px;background:#8a96a6"></div><div class="a" style="left:731px;top:878px;width:1px;height:1px;background:#8a96a6"></div><div class="a" style="left:733px;top:880px;width:1px;height:1px;background:#8a96a6"></div><div class="a" style="left:731px;top:882px;width:1px;height:1px;background:#8a96a6"></div><div class="a" style="left:733px;top:884px;width:1px;height:1px;background:#8a96a6"></div><div class="a" style="left:731px;top:886px;width:1px;height:1px;background:#8a96a6"></div><div class="a tabt" style="left:742px;top:873px">Non-Sequenced</div><div class="a" style="left:853px;top:875px;font-size:11px;font-weight:bold;color:#222">&#215;</div>
<div class="a" style="left:864px;top:890px;width:1056px;height:1px;background:#9aa4b0"></div>
<div class="a" style="left:727px;top:891px;width:1193px;height:4px;background:#ffffff"></div>
<div class="a" style="left:1846px;top:870px;width:32px;height:16px;border:1px solid #c2c9d2;background:#f0f0f0"></div><div class="a" style="left:1862px;top:871px;width:1px;height:14px;background:#c2c9d2"></div><div class="a" style="left:1851px;top:873px;width:0;height:0;border-top:5px solid transparent;border-bottom:5px solid transparent;border-right:5px solid #b8c0c8"></div><div class="a" style="left:1868px;top:873px;width:0;height:0;border-top:5px solid transparent;border-bottom:5px solid transparent;border-left:5px solid #b8c0c8"></div><div class="a" style="left:1881px;top:870px;width:16px;height:16px;border:1px solid #8ea4c0;background:linear-gradient(#ffffff,#d8e2ee)"></div><div class="a" style="left:1884px;top:876px;width:0;height:0;border-left:5px solid transparent;border-right:5px solid transparent;border-top:5px solid #222"></div><div class="a" style="left:1900px;top:870px;width:16px;height:16px;border:1px solid #8ea4c0;background:linear-gradient(#ffffff,#d8e2ee)"></div><svg class="a" style="left:1903px;top:873px" width="11" height="11" viewBox="0 0 11 11"><rect x="1.8" y="1.8" width="7.4" height="7.4" fill="#fafafa" stroke="#222" stroke-width="1.35"/></svg>
<div class="a" style="left:727px;top:895px;width:1193px;height:128px;background:#eeeeee"></div>
<div class="a" style="left:729px;top:903px;width:1188px;height:120px;border:1px solid #a8b0b8;border-radius:2px"></div>
<div class="a b" style="left:734px;top:896px;padding:0 2px;background:#eeeeee;font-size:14px;letter-spacing:0.5px">Outbounds</div>
<div class="a" style="left:732px;top:914px;width:1182px;height:106px;border:1px solid #a8b0b8;background:#ececec"></div>
<div class="a hdr" style="left:733px;top:915px;width:168px;height:22px;border-right:1px solid #c8c8c8"></div><div class="a b" style="left:733px;width:168px;top:918px;text-align:center;font-size:13px;white-space:nowrap">CS</div><div class="a hdr" style="left:901px;top:915px;width:169px;height:22px;border-right:1px solid #c8c8c8"></div><div class="a b" style="left:901px;width:169px;top:918px;text-align:center;font-size:13px;white-space:nowrap">ST</div><div class="a hdr" style="left:1070px;top:915px;width:168px;height:22px;border-right:1px solid #c8c8c8"></div><div class="a b" style="left:1070px;width:168px;top:918px;text-align:center;font-size:13px;white-space:nowrap">EOBT &nbsp; &nbsp;</div><div class="a hdr" style="left:1238px;top:915px;width:169px;height:22px;border-right:1px solid #c8c8c8"></div><div class="a b" style="left:1238px;width:169px;top:918px;text-align:center;font-size:13px;white-space:nowrap">TOBT</div><div class="a hdr" style="left:1407px;top:915px;width:168px;height:22px;border-right:1px solid #c8c8c8"></div><div class="a b" style="left:1407px;width:168px;top:918px;text-align:center;font-size:13px;white-space:nowrap">SOBT</div><div class="a hdr" style="left:1575px;top:915px;width:169px;height:22px;border-right:1px solid #c8c8c8"></div><div class="a b" style="left:1575px;width:169px;top:918px;text-align:center;font-size:13px;white-space:nowrap">CTOT</div><div class="a hdr" style="left:1744px;top:915px;width:169px;height:22px;border-right:1px solid #c8c8c8"></div><div class="a b" style="left:1744px;width:169px;top:918px;text-align:center;font-size:13px;white-space:nowrap">REASON</div><svg class="a" style="left:1172px;top:918px" width="13" height="17" viewBox="0 0 13 17"><defs><linearGradient id="sarr3" x1="0" x2="0" y1="0" y2="1"><stop offset="0" stop-color="#f0ead0"/><stop offset="0.45" stop-color="#9a8420"/><stop offset="1" stop-color="#6a5a08"/></linearGradient></defs><path d="M4.5 0.5 L8.5 0.5 L8.5 9.5 L12.5 9.5 L6.5 15.8 L0.5 9.5 L4.5 9.5 Z" fill="url(#sarr3)"/></svg><div class="a" style="left:733px;top:936px;width:1181px;height:23px;background:#fff;border:2px solid #111"></div><div class="a" style="left:735px;top:939px;font-size:14px;-webkit-text-stroke:0.4px #000;letter-spacing:0.6px;white-space:nowrap">IBK9524</div><div class="a" style="left:901px;top:938px;width:1px;height:19px;background:#a8a8a8"></div><div class="a" style="left:903px;top:939px;font-size:14px;-webkit-text-stroke:0.4px #000;letter-spacing:0.6px;white-space:nowrap">13M</div><div class="a" style="left:1070px;top:938px;width:1px;height:19px;background:#a8a8a8"></div><div class="a" style="left:1072px;top:939px;font-size:14px;-webkit-text-stroke:0.4px #000;letter-spacing:0.6px;white-space:nowrap">05:40</div><div class="a" style="left:1238px;top:938px;width:1px;height:19px;background:#a8a8a8"></div><div class="a" style="left:1240px;top:939px;font-size:14px;-webkit-text-stroke:0.4px #000;letter-spacing:0.6px;white-space:nowrap">05:35</div><div class="a" style="left:1407px;top:938px;width:1px;height:19px;background:#a8a8a8"></div><div class="a" style="left:1409px;top:939px;font-size:14px;-webkit-text-stroke:0.4px #000;letter-spacing:0.6px;white-space:nowrap">05:40</div><div class="a" style="left:1575px;top:938px;width:1px;height:19px;background:#a8a8a8"></div><svg class="a" style="left:1577.5px;top:944.0px" width="33.7" height="9.2" viewBox="0 0 33 9"><g fill="#000"><rect x="0" y="2.8" width="5.2" height="1.5"/><rect x="8.1" y="2.8" width="5.2" height="1.5"/><rect x="15.1" y="0" width="2.1" height="2.1"/><rect x="15.1" y="5" width="2.1" height="2.1"/><rect x="19.1" y="2.8" width="5.2" height="1.5"/><rect x="27.1" y="2.8" width="5.2" height="1.5"/></g></svg><div class="a" style="left:1744px;top:938px;width:1px;height:19px;background:#a8a8a8"></div><div class="a" style="left:1746px;top:939px;font-size:14px;-webkit-text-stroke:0.4px #000;letter-spacing:0.6px;white-space:nowrap">RET STAND</div>
<div class="a" style="left:0;top:1027px;width:1920px;height:1px;background:#a8a8a8"></div>
<div class="a" style="left:1118px;top:1030px;width:371px;height:24px;background:#eeeeee;border:1px solid #c8c8c8"></div>
<div class="a" style="left:1500px;top:1030px;width:24px;height:24px;background:#eeeeee;border:1px solid #c8c8c8"><div class="a" style="left:1px;top:4px;font-size:13.5px;-webkit-text-stroke:0.4px #000">SG</div></div>
<div class="a" style="left:1530px;top:1030px;width:19px;height:24px;background:#eeeeee;border:1px solid #c8c8c8"><svg class="a" style="left:1px;top:3px" width="17" height="17" viewBox="0 0 17 17"><path d="M11 1.5 A7.5 7.5 0 1 0 16 12.5 A6 6 0 0 1 11 1.5 Z" fill="#000"/></svg></div>
<div class="a" style="left:1554px;top:1030px;width:99px;height:24px;background:#eee47a;border:1px solid #c8c8c8"><div class="a" style="left:5px;top:4px;font-size:13.2px;-webkit-text-stroke:0.35px #000;letter-spacing:0.2px;white-space:nowrap">NON-SEQ: [1]</div></div>
<div class="a" style="left:1659px;top:1030px;width:88px;height:24px;background:#eeeeee;border:1px solid #c8c8c8"><div class="a" style="left:3px;top:3px;width:16px;height:16px;border-radius:50%;background:radial-gradient(circle at 40% 35%,#eaff9a,#8ed400 45%,#3c8a00 90%);border:1px solid #4a7a10"></div><div class="a b" style="left:22px;top:4px;font-size:13px;white-space:nowrap">DL: done</div></div>
<div class="a" style="left:1753px;top:1030px;width:86px;height:24px;background:#eeeeee;border:1px solid #c8c8c8"><div class="a" style="left:3px;top:3px;width:16px;height:16px;border-radius:50%;background:radial-gradient(circle at 40% 35%,#eaff9a,#8ed400 45%,#3c8a00 90%);border:1px solid #4a7a10"></div><div class="a b" style="left:22px;top:4px;font-size:13px;white-space:nowrap">OP: alive</div></div>
<div class="a" style="left:1845px;top:1030px;width:76px;height:24px;background:#eeeeee;border:1px solid #c8c8c8"><div class="a b" style="left:10px;top:4px;font-size:13px;white-space:nowrap">05:47:20</div></div>
<div class="a" style="left:0;top:1055px;width:1920px;height:25px;background:#edeceb;border-top:1px solid #d8d6d2"></div>
<div class="a" style="left:5px;top:1060px;width:1px;height:1px;background:#999"></div>
<div class="a" style="left:6px;top:1063px;width:1px;height:1px;background:#999"></div>
<div class="a" style="left:5px;top:1066px;width:1px;height:1px;background:#999"></div>
<div class="a" style="left:6px;top:1069px;width:1px;height:1px;background:#999"></div>
<div class="a" style="left:5px;top:1072px;width:1px;height:1px;background:#999"></div>
<div class="a" style="left:6px;top:1075px;width:1px;height:1px;background:#999"></div>
<div class="a" style="left:12px;top:1057px;width:198px;height:22px;background:linear-gradient(#fdfdfc,#efeeec);border:1px solid #a8a49e;border-radius:3px"></div><svg class="a" style="left:19px;top:1060px" width="16" height="16" viewBox="0 0 16 16"><rect width="16" height="16" fill="#0a0a0a"/><circle cx="10" cy="6" r="4.2" fill="#7cc8e8" stroke="#d8eef8" stroke-width="1.3"/><path d="M6.8 9.2 L2 14" stroke="#b8c4cc" stroke-width="2"/></svg><div class="a" style="left:43px;top:1059px;font-size:14px;color:#1e1e1e;white-space:nowrap">Extendable SMCF Fron...</div>
<div class="a" style="left:213px;top:1057px;width:198px;height:22px;background:linear-gradient(#d6d3ce,#cdcac4);border:1px solid #a8a49e;border-radius:3px"></div><svg class="a" style="left:222px;top:1061px" width="15" height="16" viewBox="0 0 15 16"><path d="M7.5 0.8 L14.2 3.8 L14.2 11.8 L7.5 15.2 L0.8 11.8 L0.8 3.8 Z" fill="#2a3a7a"/><path d="M7.5 1.8 L13.2 4.3 L7.5 6.9 L1.8 4.3 Z" fill="#eef6fc"/><path d="M1.8 5 L7 7.5 L7 14 L1.8 11.4 Z" fill="#8eb4e0"/><path d="M8 7.5 L13.2 5 L13.2 11.4 L8 14 Z" fill="#c8dcea"/></svg><div class="a" style="left:244px;top:1059px;font-size:14px;color:#1e1e1e;white-space:nowrap">AMS-GAL Supervisor</div>
<div class="a" style="left:414px;top:1057px;width:199px;height:22px;background:linear-gradient(#fdfdfc,#efeeec);border:1px solid #a8a49e;border-radius:3px"></div><svg class="a" style="left:423px;top:1059px" width="16" height="18" viewBox="0 0 16 18"><rect x="0.5" y="0.5" width="15" height="17" rx="1.5" fill="#f8f8f8" stroke="#a0a0b0"/><path d="M8 3 C6 5 10 6 8 8" stroke="#e06020" stroke-width="1.1" fill="none"/><path d="M4 10 C5 12.5 11 12.5 12 10" stroke="#3060a0" stroke-width="1.1" fill="none"/><path d="M3.5 14 L12.5 14" stroke="#3060a0" stroke-width="1"/></svg><div class="a" style="left:445px;top:1059px;font-size:14px;color:#1e1e1e;white-space:nowrap">ESB Feeder</div>
<div class="a" style="left:1813px;top:1057px;width:71px;height:21px;background:#b8b4b0;border-radius:2px"></div>
<div class="a" style="left:1813px;top:1057px;width:35px;height:21px;background:#d0e0f4;border:1px solid #7ea0cc"></div>
<svg class="a" style="left:1822px;top:1059px" width="16" height="17" viewBox="0 0 15 16"><path d="M7.5 0.8 L14.2 3.8 L14.2 11.8 L7.5 15.2 L0.8 11.8 L0.8 3.8 Z" fill="#2a3a7a"/><path d="M7.5 1.8 L13.2 4.3 L7.5 6.9 L1.8 4.3 Z" fill="#eef6fc"/><path d="M1.8 5 L7 7.5 L7 14 L1.8 11.4 Z" fill="#8eb4e0"/><path d="M8 7.5 L13.2 5 L13.2 11.4 L8 14 Z" fill="#c8dcea"/></svg>
<svg class="a" style="left:1894px;top:1056px" width="26" height="24" viewBox="0 0 26 24"><path d="M3 8 L22 6 L23 22 L4 23 Z" fill="#2f6cc0" stroke="#1a4a90" stroke-width="0.8"/><path d="M5 5 L14 1 L22 4 L21 8 L6 9 Z" fill="#f4f8fc" stroke="#8aa0c0" stroke-width="0.8"/><path d="M4 10 L22 8" stroke="#6a9ae0" stroke-width="1"/></svg>
</body></html>
